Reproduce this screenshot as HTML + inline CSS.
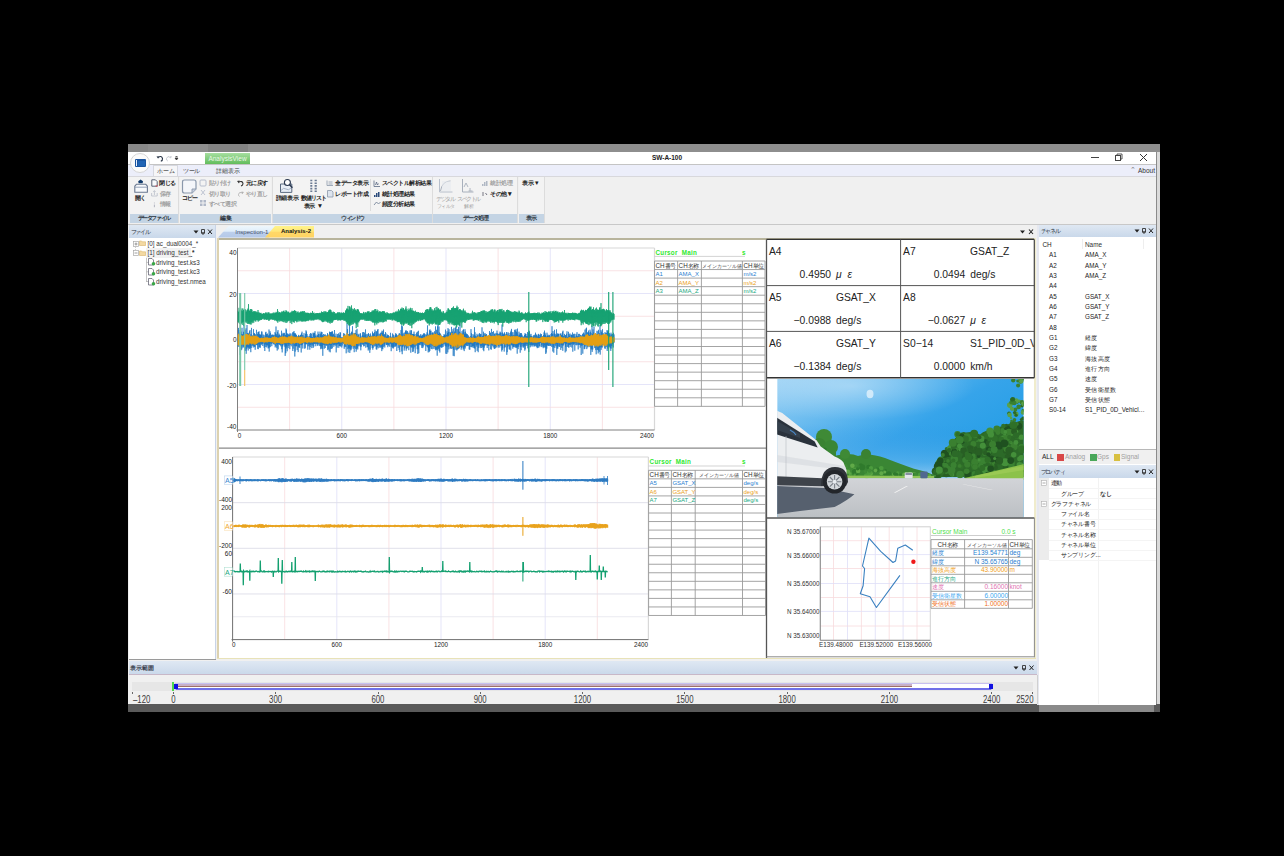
<!DOCTYPE html><html><head><meta charset="utf-8"><style>html,body{margin:0;padding:0;background:#000;}body{width:1284px;height:856px;position:relative;overflow:hidden;font-family:"Liberation Sans", sans-serif;}</style></head><body><div style="position:absolute;left:128px;top:144px;width:1032px;height:8px;background:#8e8e8e"></div><div style="position:absolute;left:208px;top:144px;width:40px;height:7.5px;background:#838383"></div><div style="position:absolute;left:128px;top:144px;width:20px;height:7.5px;background:#888888"></div><div style="position:absolute;left:128px;top:151.5px;width:1028px;height:13px;background:#ffffff"></div><div style="position:absolute;left:128px;top:164px;width:1028px;height:1px;background:#c4c4c4"></div><div style="position:absolute;left:1156.2px;top:151.5px;width:1.1px;height:553px;background:#8a8a8a"></div><div style="position:absolute;left:1157.3px;top:151.5px;width:2.8px;height:553px;background:#dadada"></div><div style="position:absolute;left:128px;top:165px;width:1028px;height:11px;background:#eceefa"></div><div style="position:absolute;left:128px;top:175.5px;width:1028px;height:48.5px;background:#f0f0f0"></div><div style="position:absolute;left:128px;top:175.5px;width:1028px;height:1px;background:#d8d8dc"></div><div style="position:absolute;left:128px;top:223.5px;width:1028px;height:1px;background:#c8c8c8"></div><div style="position:absolute;left:128px;top:224.5px;width:1028px;height:480px;background:#f0f0f0"></div><div style="position:absolute;left:128px;top:704px;width:911px;height:8px;background:#5a5a5a"></div><div style="position:absolute;left:1039px;top:704px;width:115px;height:8px;background:#8a8a8a"></div><div style="position:absolute;left:1154px;top:704px;width:6px;height:8px;background:#5a5a5a"></div><div style="position:absolute;left:130px;top:152.5px;width:20px;height:20px;border-radius:50%;background:#fbfbfb;border:1px solid #d6d6d6;box-sizing:border-box"></div><div style="position:absolute;left:134.7px;top:159px;width:11.5px;height:8px;background:#1a55a0;border-radius:1px"></div><div style="position:absolute;left:136.2px;top:160px;width:1px;height:6px;background:#e8f0ff"></div><div style="position:absolute;left:137.5px;top:160.5px;width:7.5px;height:5px;background:#2064b4"></div><svg style="position:absolute;left:155px;top:154px" width="30" height="8" viewBox="0 0 30 8"><path d="M3 3.5 Q6.5 1 7.5 4.5 Q7.8 6.5 5.8 7.2" stroke="#2a3648" stroke-width="1.1" fill="none"/><path d="M1.5 2.5 L3.8 2.2 L3.2 4.8 Z" fill="#2a3648"/><path d="M15.5 3.5 Q12.5 1 11.5 4.5 Q11.3 6.5 12.8 7" stroke="#c0c4cc" stroke-width="0.9" fill="none"/><path d="M17 2.5 L15 2.3 L15.6 4.6 Z" fill="#c0c4cc"/><path d="M20.5 2.5 h2 M20 4 L23 4 L21.5 6 Z" stroke="#3a3a3a" stroke-width="0.8" fill="#3a3a3a"/></svg><div style="position:absolute;left:205px;top:152.5px;width:45px;height:11.5px;background:linear-gradient(#a6dea0,#62bd5c);color:#e9f7e6;font-size:6.5px;line-height:11.5px;text-align:center;">AnalysisView</div><div style="position:absolute;left:567px;width:200px;top:153.60px;font-size:6.5px;line-height:7.80px;color:#222;white-space:nowrap;text-align:center;font-weight:bold">SW-A-100</div><svg style="position:absolute;left:1088px;top:152px" width="64" height="12" viewBox="0 0 64 12"><path d="M3 5.5 H11" stroke="#444" stroke-width="1"/><rect x="27.5" y="3.5" width="5" height="5" stroke="#444" stroke-width="1" fill="none"/><path d="M29 3.5 V2 H34 V7 H32.5" stroke="#444" stroke-width="0.9" fill="none"/><path d="M52 2 L59 9 M59 2 L52 9" stroke="#333" stroke-width="1"/></svg><div style="position:absolute;left:153px;top:165px;width:25px;height:11px;background:#f6f6f8;border:1px solid #d6d8e0;border-bottom:none;box-sizing:border-box"></div><div style="position:absolute;left:66px;width:200px;top:166.60px;font-size:6.5px;line-height:7.80px;color:#333;white-space:nowrap;text-align:center;"><span style="font-size:6px;letter-spacing:-0.3px;">ホーム</span></div><div style="position:absolute;left:91.5px;width:200px;top:166.60px;font-size:6.5px;line-height:7.80px;color:#333;white-space:nowrap;text-align:center;"><span style="font-size:6px;letter-spacing:-0.6px;">ツール</span></div><div style="position:absolute;left:127.5px;width:200px;top:166.60px;font-size:6.5px;line-height:7.80px;color:#333;white-space:nowrap;text-align:center;"><span style="font-size:6px;letter-spacing:0px;">詳細表示</span></div><div style="position:absolute;left:1130px;top:166.30px;font-size:7px;line-height:8.40px;color:#777;white-space:nowrap;">&#8963;</div><div style="position:absolute;left:1138px;top:166.60px;font-size:6.5px;line-height:7.80px;color:#333;white-space:nowrap;">About</div><div style="position:absolute;left:130px;top:177px;width:47.5px;height:46px;background:#f3f3f3"></div><div style="position:absolute;left:130px;top:213.8px;width:47.5px;height:8.8px;background:#c4d4e4"></div><div style="position:absolute;left:53.75px;width:200px;top:214.30px;font-size:6.5px;line-height:7.80px;color:#2c3440;white-space:nowrap;text-align:center;"><span style="font-size:6px;letter-spacing:-1.4px;font-weight:bold">データファイル</span></div><div style="position:absolute;left:178.0px;top:177px;width:1px;height:46px;background:#dcdcdc"></div><div style="position:absolute;left:180px;top:177px;width:91px;height:46px;background:#f3f3f3"></div><div style="position:absolute;left:180px;top:213.8px;width:91px;height:8.8px;background:#c4d4e4"></div><div style="position:absolute;left:125.5px;width:200px;top:214.30px;font-size:6.5px;line-height:7.80px;color:#2c3440;white-space:nowrap;text-align:center;"><span style="font-size:6px;letter-spacing:-0.5px;font-weight:bold">編集</span></div><div style="position:absolute;left:271.5px;top:177px;width:1px;height:46px;background:#dcdcdc"></div><div style="position:absolute;left:273.4px;top:177px;width:158.40000000000003px;height:46px;background:#f3f3f3"></div><div style="position:absolute;left:273.4px;top:213.8px;width:158.40000000000003px;height:8.8px;background:#c4d4e4"></div><div style="position:absolute;left:252.60000000000002px;width:200px;top:214.30px;font-size:6.5px;line-height:7.80px;color:#2c3440;white-space:nowrap;text-align:center;"><span style="font-size:6px;letter-spacing:-1.5px;font-weight:bold">ウィンドウ</span></div><div style="position:absolute;left:432.3px;top:177px;width:1px;height:46px;background:#dcdcdc"></div><div style="position:absolute;left:433.4px;top:177px;width:83.39999999999998px;height:46px;background:#f3f3f3"></div><div style="position:absolute;left:433.4px;top:213.8px;width:83.39999999999998px;height:8.8px;background:#c4d4e4"></div><div style="position:absolute;left:375.09999999999997px;width:200px;top:214.30px;font-size:6.5px;line-height:7.80px;color:#2c3440;white-space:nowrap;text-align:center;"><span style="font-size:6px;letter-spacing:-1.0px;font-weight:bold">データ処理</span></div><div style="position:absolute;left:517.3px;top:177px;width:1px;height:46px;background:#dcdcdc"></div><div style="position:absolute;left:519px;top:177px;width:24.5px;height:46px;background:#f3f3f3"></div><div style="position:absolute;left:519px;top:213.8px;width:24.5px;height:8.8px;background:#c4d4e4"></div><div style="position:absolute;left:431.25px;width:200px;top:214.30px;font-size:6.5px;line-height:7.80px;color:#2c3440;white-space:nowrap;text-align:center;"><span style="font-size:6px;letter-spacing:-0.5px;font-weight:bold">表示</span></div><div style="position:absolute;left:544.0px;top:177px;width:1px;height:46px;background:#dcdcdc"></div><div style="position:absolute;left:370px;top:179px;width:0.8px;height:32px;background:#dcdcdc"></div><svg style="position:absolute;left:128px;top:176px" width="72" height="36" viewBox="0 0 72 36"><path d="M10.2 5.2 L12.6 3.4 L15 5.2 L14.6 7.2 H10.6 Z" fill="#123a6a"/><path d="M6.8 10.2 L8.6 8.2 H17.6 L19.4 10.2 V16.3 H6.8 Z" fill="#f8fafc" stroke="#6a7890" stroke-width="1.1" stroke-linejoin="round"/><path d="M6.8 11.2 H19.4" stroke="#8a98b0" stroke-width="0.9"/><path d="M23.8 3.8 h3.6 l1.8 1.8 v4.6 h-5.4z" fill="#fafbfd" stroke="#4a5468" stroke-width="0.9"/><path d="M27.8 9.2 l1.6 1.6 M29.4 9.2 l-1.6 1.6" stroke="#e04848" stroke-width="0.7"/><path d="M23.6 17 v3 h5.6 v-3 M26.4 19 v-4.2 M25.2 15.8 l1.2 -1.2 l1.2 1.2" stroke="#b8bcc8" stroke-width="0.8" fill="none"/><path d="M26.4 28.6 v2.6 M26.4 26.6 v0.8" stroke="#a8acb8" stroke-width="0.9"/><path d="M56.5 4 h9.5 q2 0 2 2 v7 l-4 4 h-7.5 q-2 0 -2 -2 v-9 q0 -2 2 -2z" fill="#f4f6fa" stroke="#8a98ac" stroke-width="1.2"/><path d="M68 13 l-4 0 v4" fill="#c8d0e0" stroke="#8a98ac" stroke-width="0.9"/></svg><div style="position:absolute;left:40.5px;width:200px;top:194.30px;font-size:6.5px;line-height:7.80px;color:#202020;white-space:nowrap;text-align:center;"><span style="font-size:6px;letter-spacing:-0.8px;font-weight:bold">開く</span></div><div style="position:absolute;left:159.4px;top:179.30px;font-size:6.5px;line-height:7.80px;color:#202020;white-space:nowrap;"><span style="font-size:6px;letter-spacing:-0.8px;font-weight:bold">閉じる</span></div><div style="position:absolute;left:159.5px;top:189.70px;font-size:6.5px;line-height:7.80px;color:#a0a0a0;white-space:nowrap;"><span style="font-size:6px;letter-spacing:-0.5px;font-weight:bold">保存</span></div><div style="position:absolute;left:159.5px;top:200.10px;font-size:6.5px;line-height:7.80px;color:#a0a0a0;white-space:nowrap;"><span style="font-size:6px;letter-spacing:-0.5px;font-weight:bold">情報</span></div><div style="position:absolute;left:89.5px;width:200px;top:194.30px;font-size:6.5px;line-height:7.80px;color:#202020;white-space:nowrap;text-align:center;"><span style="font-size:6px;letter-spacing:-1.3px;font-weight:bold">コピー</span></div><svg style="position:absolute;left:199px;top:179px" width="8" height="30" viewBox="0 0 8 30"><rect x="1" y="1" width="6" height="6" rx="1" stroke="#b0b8c8" stroke-width="0.9" fill="none"/><path d="M2 11 l4 5 M6 11 l-4 5" stroke="#b0b8c8" stroke-width="0.8"/><path d="M1 21 h2.5 v2.5 h-2.5z M4.5 21 h2.5 v2.5 h-2.5z M1 24.5 h2.5 v2.5 h-2.5z M4.5 24.5 h2.5 v2.5 h-2.5z" fill="#b0b8c8"/></svg><div style="position:absolute;left:208.5px;top:179.30px;font-size:6.5px;line-height:7.80px;color:#a0a0a0;white-space:nowrap;"><span style="font-size:6px;letter-spacing:-0.5px;font-weight:bold">貼り付け</span></div><div style="position:absolute;left:208.5px;top:189.70px;font-size:6.5px;line-height:7.80px;color:#a0a0a0;white-space:nowrap;"><span style="font-size:6px;letter-spacing:-0.5px;font-weight:bold">切り取り</span></div><div style="position:absolute;left:208.5px;top:200.10px;font-size:6.5px;line-height:7.80px;color:#a0a0a0;white-space:nowrap;"><span style="font-size:6px;letter-spacing:-0.5px;font-weight:bold">すべて選択</span></div><svg style="position:absolute;left:236px;top:179px" width="8" height="20" viewBox="0 0 8 20"><path d="M2.5 3 Q6.5 1.5 7 4.5 Q7 6.5 5 7" stroke="#333" stroke-width="1.1" fill="none"/><path d="M1 2 L3.6 1.6 L3 4.4 Z" fill="#333"/><path d="M7 14 Q3 12.5 2.5 15.5 Q2.5 17 3.5 17.5" stroke="#b0b0b0" stroke-width="0.9" fill="none"/><path d="M8 13 L5.5 12.6 L6 15.2 Z" fill="#b0b0b0"/></svg><div style="position:absolute;left:245.5px;top:179.30px;font-size:6.5px;line-height:7.80px;color:#202020;white-space:nowrap;"><span style="font-size:6px;letter-spacing:-0.5px;font-weight:bold">元に戻す</span></div><div style="position:absolute;left:245.5px;top:189.70px;font-size:6.5px;line-height:7.80px;color:#a0a0a0;white-space:nowrap;"><span style="font-size:6px;letter-spacing:-0.5px;font-weight:bold">やり直し</span></div><svg style="position:absolute;left:270px;top:176px" width="70" height="36" viewBox="0 0 70 36"><path d="M10.5 8 h11.3 v8.4 h-11.3z" fill="#e8eef6" stroke="#5a6a80" stroke-width="1"/><path d="M11 14.5 q2.5 -3.5 5 -1.5 t5 -1" stroke="#8a9ab0" stroke-width="0.7" fill="none"/><circle cx="17.4" cy="6.5" r="3" fill="#ffffff" stroke="#2a3850" stroke-width="1.1"/><path d="M19.6 8.7 l2.8 3" stroke="#2a3850" stroke-width="1.5"/><path d="M40.3 4.5 h2 M40.3 7.2 h2 M40.3 9.9 h2 M40.3 12.6 h2 M40.3 15.3 h2 M44.6 4.5 h2.2 M44.6 7.2 h2.2 M44.6 9.9 h2.2 M44.6 12.6 h2.2 M44.6 15.3 h2.2" stroke="#6a7a92" stroke-width="1.6"/></svg><div style="position:absolute;left:187px;width:200px;top:194.30px;font-size:6.5px;line-height:7.80px;color:#202020;white-space:nowrap;text-align:center;"><span style="font-size:6px;letter-spacing:-0.3px;font-weight:bold">詳細表示</span></div><div style="position:absolute;left:213.7px;width:200px;top:194.30px;font-size:6.5px;line-height:7.80px;color:#202020;white-space:nowrap;text-align:center;"><span style="font-size:6px;letter-spacing:-1.0px;font-weight:bold">数値リスト</span></div><div style="position:absolute;left:213.5px;width:200px;top:201.80px;font-size:6.5px;line-height:7.80px;color:#202020;white-space:nowrap;text-align:center;"><span style="font-size:6px;letter-spacing:-0.5px;font-weight:bold">表示</span> &#9660;</div><svg style="position:absolute;left:326px;top:180px" width="8" height="18" viewBox="0 0 8 18"><path d="M1 0.5 v5 h6 M2.5 2 h4 M2.5 4 h4" stroke="#8a98aa" stroke-width="0.8" fill="none"/><path d="M1.5 10.5 h4 l1.5 1.5 v5 h-5.5z" fill="#dde4ee" stroke="#8a98aa" stroke-width="0.8"/></svg><div style="position:absolute;left:335px;top:179.40px;font-size:6.5px;line-height:7.80px;color:#202020;white-space:nowrap;"><span style="font-size:6px;letter-spacing:-0.5px;font-weight:bold">全データ表示</span></div><div style="position:absolute;left:335px;top:189.90px;font-size:6.5px;line-height:7.80px;color:#202020;white-space:nowrap;"><span style="font-size:6px;letter-spacing:-0.5px;font-weight:bold">レポート作成</span></div><svg style="position:absolute;left:373px;top:180px" width="8" height="28" viewBox="0 0 8 28"><path d="M1 0.5 v6 h6 M2.5 5 l1 -3 l1 3 l1 -1.5" stroke="#5a6a84" stroke-width="0.8" fill="none"/><path d="M1 17 h1.5 v-2 h-1.5z M3 17 h1.5 v-4 h-1.5z M5 17 h1.5 v-5 h-1.5z" fill="#2a4a7a"/><path d="M1 25 l2.5 -3 l2 2 l2 -2" stroke="#6a7a90" stroke-width="0.8" fill="none"/></svg><div style="position:absolute;left:381.5px;top:179.40px;font-size:6.5px;line-height:7.80px;color:#202020;white-space:nowrap;"><span style="font-size:6px;letter-spacing:-0.5px;font-weight:bold">スペクトル解析結果</span></div><div style="position:absolute;left:381.5px;top:189.90px;font-size:6.5px;line-height:7.80px;color:#202020;white-space:nowrap;"><span style="font-size:6px;letter-spacing:-0.5px;font-weight:bold">統計処理結果</span></div><div style="position:absolute;left:381.5px;top:200.30px;font-size:6.5px;line-height:7.80px;color:#202020;white-space:nowrap;"><span style="font-size:6px;letter-spacing:-0.5px;font-weight:bold">頻度分析結果</span></div><svg style="position:absolute;left:438px;top:178px" width="16" height="15" viewBox="0 0 16 15"><path d="M1.5 1 v13 h13" stroke="#b8c0cc" stroke-width="1" fill="none"/><path d="M2.5 13 q1.5 -10 10 -10" stroke="#a8b0bc" stroke-width="1" fill="none"/><rect x="4" y="3" width="9" height="10" fill="#e8ebf0" opacity="0.6"/></svg><div style="position:absolute;left:345.5px;width:200px;top:194.80px;font-size:6.5px;line-height:7.80px;color:#a0a0a0;white-space:nowrap;text-align:center;"><span style="font-size:6px;letter-spacing:-1.3px;">デジタル</span></div><div style="position:absolute;left:345.5px;width:200px;top:202.30px;font-size:6.5px;line-height:7.80px;color:#a0a0a0;white-space:nowrap;text-align:center;"><span style="font-size:5px;letter-spacing:-0.5px;">フィルタ</span></div><svg style="position:absolute;left:461px;top:178px" width="14" height="15" viewBox="0 0 14 15"><path d="M1.5 1 v13 h11" stroke="#a8b0bc" stroke-width="1" fill="none"/><path d="M3 9 l2 -4 l2 4 M7.5 13 h4 M9 10 v3" stroke="#a8b0bc" stroke-width="0.9" fill="none"/></svg><div style="position:absolute;left:368.7px;width:200px;top:194.80px;font-size:6.5px;line-height:7.80px;color:#a0a0a0;white-space:nowrap;text-align:center;"><span style="font-size:6px;letter-spacing:-1.5px;">スペクトル</span></div><div style="position:absolute;left:368.7px;width:200px;top:202.30px;font-size:6.5px;line-height:7.80px;color:#a0a0a0;white-space:nowrap;text-align:center;"><span style="font-size:5px;letter-spacing:0px;">解析</span></div><svg style="position:absolute;left:481px;top:180px" width="8" height="18" viewBox="0 0 8 18"><path d="M1 6 h1.5 v-2 h-1.5z M3 6 h1.5 v-4 h-1.5z M5 6 h1.5 v-5 h-1.5z" fill="#b0b8c4"/><path d="M1 13 h2 M1 15 h2 M4.5 13 l1.5 2" stroke="#556" stroke-width="0.8"/></svg><div style="position:absolute;left:490px;top:179.40px;font-size:6.5px;line-height:7.80px;color:#a0a0a0;white-space:nowrap;"><span style="font-size:6px;letter-spacing:-0.5px;font-weight:bold">統計処理</span></div><div style="position:absolute;left:490px;top:189.90px;font-size:6.5px;line-height:7.80px;color:#222;white-space:nowrap;font-weight:bold"><span style="font-size:6px;letter-spacing:-0.5px;font-weight:bold">その他</span> &#9662;</div><div style="position:absolute;left:522px;top:179.40px;font-size:6.5px;line-height:7.80px;color:#202020;white-space:nowrap;"><span style="font-size:6px;letter-spacing:-0.5px;font-weight:bold">表示</span> &#9662;</div><div style="position:absolute;left:128.5px;top:224.5px;width:86.5px;height:434.5px;background:#ffffff"></div><div style="position:absolute;left:128.5px;top:225px;width:86.0px;height:13px;background:linear-gradient(#dfe8f3,#c9d8ea)"></div><div style="position:absolute;left:130.5px;top:227.60px;font-size:6.5px;line-height:7.80px;color:#2a3240;white-space:nowrap;"><span style="font-size:6px;letter-spacing:-1.2px;">ファイル</span></div><svg style="position:absolute;left:191.5px;top:227.5px" width="22" height="8" viewBox="0 0 22 8"><path d="M1.5 2.5 h5 l-2.5 3z" fill="#222"/><path d="M9.5 1.5 h3 v3.5 h-3z M9 5 h4 M11 5 v2" stroke="#333" stroke-width="0.9" fill="none"/><path d="M16 1.5 l4 4.5 M20 1.5 l-4 4.5" stroke="#222" stroke-width="1"/></svg><div style="position:absolute;left:214.5px;top:224.5px;width:1px;height:435px;background:#c8d4e8"></div><div style="position:absolute;left:128.5px;top:658.8px;width:87px;height:1px;background:#9a9a9a"></div><svg style="position:absolute;left:128px;top:238px" width="30" height="50" viewBox="0 0 30 50"><path d="M7.5 9 v5" stroke="#b0b0b0" stroke-width="0.6" stroke-dasharray="1 1"/><path d="M18.5 18 v26 M18.5 24.4 h3 M18.5 33.8 h3 M18.5 43.5 h3" stroke="#a0a0a0" stroke-width="0.6"/></svg><svg style="position:absolute;left:132.5px;top:240.7px" width="6" height="6" viewBox="0 0 6 6"><rect x="0.5" y="0.5" width="5" height="5" fill="#fff" stroke="#a8a8a8" stroke-width="0.7"/><path d="M1.5 3 h3" stroke="#777" stroke-width="0.7"/><path d="M3 1.5 v3" stroke="#777" stroke-width="0.7"/></svg><svg style="position:absolute;left:139px;top:240.3px" width="7" height="6" viewBox="0 0 7 6"><path d="M0.5 1 h2 l0.8 0.8 h3.2 v3.7 h-6z" fill="#f3d9a2" stroke="#d9b46a" stroke-width="0.6"/></svg><div style="position:absolute;left:147.5px;top:239.92px;font-size:6.3px;line-height:7.56px;color:#333;white-space:nowrap;">[0] ac_dual0004_*</div><svg style="position:absolute;left:132.5px;top:250px" width="6" height="6" viewBox="0 0 6 6"><rect x="0.5" y="0.5" width="5" height="5" fill="#fff" stroke="#a8a8a8" stroke-width="0.7"/><path d="M1.5 3 h3" stroke="#777" stroke-width="0.7"/></svg><svg style="position:absolute;left:139px;top:249.8px" width="7" height="6" viewBox="0 0 7 6"><path d="M0.5 1 h2 l0.8 0.8 h3.2 v3.7 h-6z" fill="#f3d9a2" stroke="#d9b46a" stroke-width="0.6"/></svg><div style="position:absolute;left:147.5px;top:249.22px;font-size:6.3px;line-height:7.56px;color:#333;white-space:nowrap;">[1] driving_test_*</div><div style="position:absolute;left:146px;top:248.3px;width:45px;height:9.5px;background:#f2f2f2"></div><div style="position:absolute;left:147.5px;top:249.22px;font-size:6.3px;line-height:7.56px;color:#333;white-space:nowrap;">[1] driving_test_*</div><svg style="position:absolute;left:147.5px;top:258.4px" width="8" height="8" viewBox="0 0 8 8"><path d="M0.5 0.5 h3.5 l1.5 1.5 v5 h-5z" fill="#fff" stroke="#556" stroke-width="0.7"/><circle cx="5.5" cy="5.8" r="1.8" fill="#3aa648"/></svg><div style="position:absolute;left:156px;top:258.62px;font-size:6.3px;line-height:7.56px;color:#333;white-space:nowrap;">driving_test.ks3</div><svg style="position:absolute;left:147.5px;top:267.95px" width="8" height="8" viewBox="0 0 8 8"><path d="M0.5 0.5 h3.5 l1.5 1.5 v5 h-5z" fill="#fff" stroke="#556" stroke-width="0.7"/><circle cx="5.5" cy="5.8" r="1.8" fill="#3aa648"/></svg><div style="position:absolute;left:156px;top:268.17px;font-size:6.3px;line-height:7.56px;color:#333;white-space:nowrap;">driving_test.kc3</div><svg style="position:absolute;left:147.5px;top:277.5px" width="8" height="8" viewBox="0 0 8 8"><path d="M0.5 0.5 h3.5 l1.5 1.5 v5 h-5z" fill="#fff" stroke="#556" stroke-width="0.7"/><circle cx="5.5" cy="5.8" r="1.8" fill="#3aa648"/></svg><div style="position:absolute;left:156px;top:277.72px;font-size:6.3px;line-height:7.56px;color:#333;white-space:nowrap;">driving_test.nmea</div><div style="position:absolute;left:216px;top:224.5px;width:821px;height:13px;background:#f0f0f0"></div><svg style="position:absolute;left:216px;top:225px" width="100" height="14" viewBox="0 0 100 14"><defs><linearGradient id="tb" x1="0" y1="0" x2="0" y2="1"><stop offset="0" stop-color="#eef6fc"/><stop offset="0.45" stop-color="#e0eefa"/><stop offset="0.55" stop-color="#bccfec"/><stop offset="1" stop-color="#b4c8e8"/></linearGradient><linearGradient id="ty" x1="0" y1="0" x2="0" y2="1"><stop offset="0" stop-color="#fff48a"/><stop offset="0.45" stop-color="#ffe77a"/><stop offset="0.55" stop-color="#ffd868"/><stop offset="1" stop-color="#ffd462"/></linearGradient></defs><path d="M2 12.5 L12.5 1 H66 L53 12.5 Z" fill="url(#tb)"/><path d="M49 12.5 L59 1 H98 V12.5 Z" fill="url(#ty)"/></svg><div style="position:absolute;left:235.2px;top:227.84px;font-size:6.1px;line-height:7.32px;color:#4a5470;white-space:nowrap;">Inspection-1</div><div style="position:absolute;left:281px;top:227.90px;font-size:6.0px;line-height:7.20px;color:#111;white-space:nowrap;font-weight:bold">Analysis-2</div><svg style="position:absolute;left:1019px;top:227.5px" width="16" height="8" viewBox="0 0 16 8"><path d="M1 2.5 h5 l-2.5 3z" fill="#222"/><path d="M10 1.5 l4 4.5 M14 1.5 l-4 4.5" stroke="#222" stroke-width="1.1"/></svg><div style="position:absolute;left:216.5px;top:237.5px;width:819px;height:2px;background:#b8b49c"></div><div style="position:absolute;left:216.5px;top:237.5px;width:2.5px;height:421.5px;background:#dcd2b0"></div><div style="position:absolute;left:1033.5px;top:237.5px;width:2px;height:421.5px;background:#f0eccc"></div><div style="position:absolute;left:216.5px;top:657.5px;width:819px;height:1.8px;background:#e8e2b8"></div><div style="position:absolute;left:219px;top:239.5px;width:814.5px;height:418px;background:#ffffff"></div><div style="position:absolute;left:1037px;top:224.5px;width:119px;height:480px;background:#ffffff"></div><div style="position:absolute;left:1037px;top:224.5px;width:1.5px;height:480px;background:#e6e8f0"></div><div style="position:absolute;left:1038.5px;top:225px;width:117.5px;height:12px;background:linear-gradient(#dfe8f3,#c9d8ea)"></div><div style="position:absolute;left:1040.5px;top:227.10px;font-size:6.5px;line-height:7.80px;color:#2a3240;white-space:nowrap;"><span style="font-size:6px;letter-spacing:-1.2px;">チャネル</span></div><svg style="position:absolute;left:1133px;top:227.0px" width="22" height="8" viewBox="0 0 22 8"><path d="M1.5 2.5 h5 l-2.5 3z" fill="#222"/><path d="M9.5 1.5 h3 v3.5 h-3z M9 5 h4 M11 5 v2" stroke="#333" stroke-width="0.9" fill="none"/><path d="M16 1.5 l4 4.5 M20 1.5 l-4 4.5" stroke="#222" stroke-width="1"/></svg><div style="position:absolute;left:1042.5px;top:240.66px;font-size:6.4px;line-height:7.68px;color:#222;white-space:nowrap;">CH</div><div style="position:absolute;left:1085px;top:240.66px;font-size:6.4px;line-height:7.68px;color:#333;white-space:nowrap;">Name</div><div style="position:absolute;left:1082.3px;top:239px;width:0.6px;height:10px;background:#eeeeee"></div><div style="position:absolute;left:1143px;top:239px;width:0.6px;height:10px;background:#eeeeee"></div><div style="position:absolute;left:1049px;top:251.22px;font-size:6.3px;line-height:7.56px;color:#222;white-space:nowrap;">A1</div><div style="position:absolute;left:1085px;top:251.22px;font-size:6.3px;line-height:7.56px;color:#222;white-space:nowrap;">AMA_X</div><div style="position:absolute;left:1049px;top:261.55px;font-size:6.3px;line-height:7.56px;color:#222;white-space:nowrap;">A2</div><div style="position:absolute;left:1085px;top:261.55px;font-size:6.3px;line-height:7.56px;color:#222;white-space:nowrap;">AMA_Y</div><div style="position:absolute;left:1049px;top:271.88px;font-size:6.3px;line-height:7.56px;color:#222;white-space:nowrap;">A3</div><div style="position:absolute;left:1085px;top:271.88px;font-size:6.3px;line-height:7.56px;color:#222;white-space:nowrap;">AMA_Z</div><div style="position:absolute;left:1049px;top:282.21px;font-size:6.3px;line-height:7.56px;color:#222;white-space:nowrap;">A4</div><div style="position:absolute;left:1085px;top:282.21px;font-size:6.3px;line-height:7.56px;color:#222;white-space:nowrap;"></div><div style="position:absolute;left:1049px;top:292.54px;font-size:6.3px;line-height:7.56px;color:#222;white-space:nowrap;">A5</div><div style="position:absolute;left:1085px;top:292.54px;font-size:6.3px;line-height:7.56px;color:#222;white-space:nowrap;">GSAT_X</div><div style="position:absolute;left:1049px;top:302.87px;font-size:6.3px;line-height:7.56px;color:#222;white-space:nowrap;">A6</div><div style="position:absolute;left:1085px;top:302.87px;font-size:6.3px;line-height:7.56px;color:#222;white-space:nowrap;">GSAT_Y</div><div style="position:absolute;left:1049px;top:313.20px;font-size:6.3px;line-height:7.56px;color:#222;white-space:nowrap;">A7</div><div style="position:absolute;left:1085px;top:313.20px;font-size:6.3px;line-height:7.56px;color:#222;white-space:nowrap;">GSAT_Z</div><div style="position:absolute;left:1049px;top:323.53px;font-size:6.3px;line-height:7.56px;color:#222;white-space:nowrap;">A8</div><div style="position:absolute;left:1085px;top:323.53px;font-size:6.3px;line-height:7.56px;color:#222;white-space:nowrap;"></div><div style="position:absolute;left:1049px;top:333.86px;font-size:6.3px;line-height:7.56px;color:#222;white-space:nowrap;">G1</div><div style="position:absolute;left:1085px;top:333.86px;font-size:6.3px;line-height:7.56px;color:#222;white-space:nowrap;"><span style="font-size:6px;letter-spacing:0.3px;">経度</span></div><div style="position:absolute;left:1049px;top:344.19px;font-size:6.3px;line-height:7.56px;color:#222;white-space:nowrap;">G2</div><div style="position:absolute;left:1085px;top:344.19px;font-size:6.3px;line-height:7.56px;color:#222;white-space:nowrap;"><span style="font-size:6px;letter-spacing:0.3px;">緯度</span></div><div style="position:absolute;left:1049px;top:354.52px;font-size:6.3px;line-height:7.56px;color:#222;white-space:nowrap;">G3</div><div style="position:absolute;left:1085px;top:354.52px;font-size:6.3px;line-height:7.56px;color:#222;white-space:nowrap;"><span style="font-size:6px;letter-spacing:0.3px;">海抜高度</span></div><div style="position:absolute;left:1049px;top:364.85px;font-size:6.3px;line-height:7.56px;color:#222;white-space:nowrap;">G4</div><div style="position:absolute;left:1085px;top:364.85px;font-size:6.3px;line-height:7.56px;color:#222;white-space:nowrap;"><span style="font-size:6px;letter-spacing:0.3px;">進行方向</span></div><div style="position:absolute;left:1049px;top:375.18px;font-size:6.3px;line-height:7.56px;color:#222;white-space:nowrap;">G5</div><div style="position:absolute;left:1085px;top:375.18px;font-size:6.3px;line-height:7.56px;color:#222;white-space:nowrap;"><span style="font-size:6px;letter-spacing:0.3px;">速度</span></div><div style="position:absolute;left:1049px;top:385.51px;font-size:6.3px;line-height:7.56px;color:#222;white-space:nowrap;">G6</div><div style="position:absolute;left:1085px;top:385.51px;font-size:6.3px;line-height:7.56px;color:#222;white-space:nowrap;"><span style="font-size:6px;letter-spacing:0.3px;">受信衛星数</span></div><div style="position:absolute;left:1049px;top:395.84px;font-size:6.3px;line-height:7.56px;color:#222;white-space:nowrap;">G7</div><div style="position:absolute;left:1085px;top:395.84px;font-size:6.3px;line-height:7.56px;color:#222;white-space:nowrap;"><span style="font-size:6px;letter-spacing:0.3px;">受信状態</span></div><div style="position:absolute;left:1049px;top:406.17px;font-size:6.3px;line-height:7.56px;color:#222;white-space:nowrap;">S0-14</div><div style="position:absolute;left:1085px;top:406.17px;font-size:6.3px;line-height:7.56px;color:#222;white-space:nowrap;">S1_PID_0D_Vehicl…</div><div style="position:absolute;left:1038.5px;top:449.3px;width:117.5px;height:1px;background:#b8b8b8"></div><div style="position:absolute;left:1038.5px;top:450.3px;width:117.5px;height:14px;background:#f0f0f0"></div><div style="position:absolute;left:1042px;top:453.10px;font-size:6.5px;line-height:7.80px;color:#222;white-space:nowrap;">ALL</div><div style="position:absolute;left:1057px;top:453.5px;width:7px;height:7px;background:#d84848"></div><div style="position:absolute;left:1065px;top:453.10px;font-size:6.5px;line-height:7.80px;color:#a0a0a0;white-space:nowrap;">Analog</div><div style="position:absolute;left:1090px;top:453.5px;width:6.5px;height:7px;background:#4aa85a"></div><div style="position:absolute;left:1097px;top:453.10px;font-size:6.5px;line-height:7.80px;color:#a0a0a0;white-space:nowrap;">Gps</div><div style="position:absolute;left:1113.5px;top:453.5px;width:6.5px;height:7px;background:#d8c040"></div><div style="position:absolute;left:1121px;top:453.10px;font-size:6.5px;line-height:7.80px;color:#a0a0a0;white-space:nowrap;">Signal</div><div style="position:absolute;left:1038.5px;top:465px;width:117.5px;height:13px;background:linear-gradient(#dfe8f3,#c9d8ea)"></div><div style="position:absolute;left:1040.5px;top:467.60px;font-size:6.5px;line-height:7.80px;color:#2a3240;white-space:nowrap;"><span style="font-size:6px;letter-spacing:-1.2px;">プロパティ</span></div><svg style="position:absolute;left:1133px;top:467.5px" width="22" height="8" viewBox="0 0 22 8"><path d="M1.5 2.5 h5 l-2.5 3z" fill="#222"/><path d="M9.5 1.5 h3 v3.5 h-3z M9 5 h4 M11 5 v2" stroke="#333" stroke-width="0.9" fill="none"/><path d="M16 1.5 l4 4.5 M20 1.5 l-4 4.5" stroke="#222" stroke-width="1"/></svg><div style="position:absolute;left:1039.3px;top:478px;width:9.4px;height:82px;background:#ececec"></div><div style="position:absolute;left:1098px;top:478px;width:0.6px;height:226px;background:#f2f2f2"></div><div style="position:absolute;left:1048.7px;top:488.2px;width:107px;height:0.6px;background:#f4f4f4"></div><svg style="position:absolute;left:1041px;top:480.2px" width="6" height="6" viewBox="0 0 6 6"><rect x="0.5" y="0.5" width="5" height="5" fill="#fff" stroke="#b0b0b0" stroke-width="0.6"/><path d="M1.5 3 h3" stroke="#888" stroke-width="0.7"/></svg><div style="position:absolute;left:1050.5px;top:479.42px;font-size:6.3px;line-height:7.56px;color:#222;white-space:nowrap;"><span style="font-size:6px;letter-spacing:-0.2px;">連動</span></div><div style="position:absolute;left:1048.7px;top:498.46px;width:107px;height:0.6px;background:#f4f4f4"></div><div style="position:absolute;left:1060.8px;top:489.68px;font-size:6.3px;line-height:7.56px;color:#222;white-space:nowrap;"><span style="font-size:6px;letter-spacing:-0.2px;">グループ</span></div><div style="position:absolute;left:1100px;top:489.56px;font-size:6.5px;line-height:7.80px;color:#333;white-space:nowrap;"><span style="font-size:6px;letter-spacing:-0.5px;font-weight:bold">なし</span></div><div style="position:absolute;left:1048.7px;top:508.71999999999997px;width:107px;height:0.6px;background:#f4f4f4"></div><svg style="position:absolute;left:1041px;top:500.71999999999997px" width="6" height="6" viewBox="0 0 6 6"><rect x="0.5" y="0.5" width="5" height="5" fill="#fff" stroke="#b0b0b0" stroke-width="0.6"/><path d="M1.5 3 h3" stroke="#888" stroke-width="0.7"/></svg><div style="position:absolute;left:1050.5px;top:499.94px;font-size:6.3px;line-height:7.56px;color:#222;white-space:nowrap;"><span style="font-size:6px;letter-spacing:-0.2px;">グラフチャネル</span></div><div style="position:absolute;left:1048.7px;top:518.98px;width:107px;height:0.6px;background:#f4f4f4"></div><div style="position:absolute;left:1060.8px;top:510.20px;font-size:6.3px;line-height:7.56px;color:#222;white-space:nowrap;"><span style="font-size:6px;letter-spacing:-0.2px;">ファイル名</span></div><div style="position:absolute;left:1048.7px;top:529.24px;width:107px;height:0.6px;background:#f4f4f4"></div><div style="position:absolute;left:1060.8px;top:520.46px;font-size:6.3px;line-height:7.56px;color:#222;white-space:nowrap;"><span style="font-size:6px;letter-spacing:-0.2px;">チャネル番号</span></div><div style="position:absolute;left:1048.7px;top:539.5px;width:107px;height:0.6px;background:#f4f4f4"></div><div style="position:absolute;left:1060.8px;top:530.72px;font-size:6.3px;line-height:7.56px;color:#222;white-space:nowrap;"><span style="font-size:6px;letter-spacing:-0.2px;">チャネル名称</span></div><div style="position:absolute;left:1048.7px;top:549.76px;width:107px;height:0.6px;background:#f4f4f4"></div><div style="position:absolute;left:1060.8px;top:540.98px;font-size:6.3px;line-height:7.56px;color:#222;white-space:nowrap;"><span style="font-size:6px;letter-spacing:-0.2px;">チャネル単位</span></div><div style="position:absolute;left:1048.7px;top:560.02px;width:107px;height:0.6px;background:#f4f4f4"></div><div style="position:absolute;left:1060.8px;top:551.24px;font-size:6.3px;line-height:7.56px;color:#222;white-space:nowrap;"><span style="font-size:6px;letter-spacing:-0.2px;">サンプリング</span>...</div><div style="position:absolute;left:128.5px;top:659.5px;width:908.5px;height:44.5px;background:#f0f0f0"></div><div style="position:absolute;left:128.5px;top:660.5px;width:908.5px;height:14px;background:linear-gradient(#dfe8f3,#c9d8ea)"></div><div style="position:absolute;left:130px;top:663.60px;font-size:6.5px;line-height:7.80px;color:#3a4250;white-space:nowrap;"><span style="font-size:6px;letter-spacing:0px;font-weight:bold">表示範囲</span></div><svg style="position:absolute;left:1012px;top:663.5px" width="24" height="8" viewBox="0 0 24 8"><path d="M1.5 2.5 h5 l-2.5 3z" fill="#222"/><path d="M10.5 1.5 h3 v3.5 h-3z M10 5 h4 M12 5 v2" stroke="#333" stroke-width="0.9" fill="none"/><path d="M17.5 1.5 l4 4.5 M21.5 1.5 l-4 4.5" stroke="#222" stroke-width="1"/></svg><div style="position:absolute;left:128.5px;top:674.3px;width:908.5px;height:0.8px;background:#c8b8c8"></div><div style="position:absolute;left:1036.5px;top:674.5px;width:1px;height:29.5px;background:#d0d0d0"></div><div style="position:absolute;left:131.7px;top:681.5px;width:901px;height:9.5px;background:#e6e6e6"></div><div style="position:absolute;left:175px;top:682.8px;width:817px;height:7px;background:#c8c0f0"></div><div style="position:absolute;left:176px;top:684px;width:814px;height:4.4px;background:#ffffff"></div><div style="position:absolute;left:176px;top:685.6px;width:736px;height:1.2px;background:#a07068"></div><div style="position:absolute;left:176px;top:684.3px;width:736px;height:1.3px;background:#c8b0c8"></div><div style="position:absolute;left:176px;top:688.4px;width:815px;height:1.2px;background:#7070e8"></div><div style="position:absolute;left:172.3px;top:681.5px;width:2px;height:9.5px;background:#50d850"></div><div style="position:absolute;left:173.5px;top:683.5px;width:4px;height:5px;background:#1010e0"></div><div style="position:absolute;left:988.5px;top:683.5px;width:4px;height:5px;background:#1010e0"></div><div style="position:absolute;left:131.98px;top:691.5px;width:0.9px;height:2.5px;background:#666"></div><div style="position:absolute;left:172.9px;top:691.5px;width:0.9px;height:2.5px;background:#666"></div><div style="position:absolute;left:275.20000000000005px;top:691.5px;width:0.9px;height:2.5px;background:#666"></div><div style="position:absolute;left:377.50000000000006px;top:691.5px;width:0.9px;height:2.5px;background:#666"></div><div style="position:absolute;left:479.80000000000007px;top:691.5px;width:0.9px;height:2.5px;background:#666"></div><div style="position:absolute;left:582.1px;top:691.5px;width:0.9px;height:2.5px;background:#666"></div><div style="position:absolute;left:684.4000000000001px;top:691.5px;width:0.9px;height:2.5px;background:#666"></div><div style="position:absolute;left:786.7000000000002px;top:691.5px;width:0.9px;height:2.5px;background:#666"></div><div style="position:absolute;left:889.0000000000001px;top:691.5px;width:0.9px;height:2.5px;background:#666"></div><div style="position:absolute;left:991.3000000000001px;top:691.5px;width:0.9px;height:2.5px;background:#666"></div><div style="position:absolute;left:1032.22px;top:691.5px;width:0.9px;height:2.5px;background:#666"></div><svg style="position:absolute;left:0;top:0" width="1284" height="856" viewBox="0 0 1284 856" font-family="Liberation Sans, sans-serif"><line x1="289.62" y1="248.00" x2="289.62" y2="430.00" stroke="#f8dadd" stroke-width="0.8" /><line x1="341.75" y1="248.00" x2="341.75" y2="430.00" stroke="#dedef8" stroke-width="0.8" /><line x1="393.88" y1="248.00" x2="393.88" y2="430.00" stroke="#f8dadd" stroke-width="0.8" /><line x1="446.00" y1="248.00" x2="446.00" y2="430.00" stroke="#dedef8" stroke-width="0.8" /><line x1="498.12" y1="248.00" x2="498.12" y2="430.00" stroke="#f8dadd" stroke-width="0.8" /><line x1="550.25" y1="248.00" x2="550.25" y2="430.00" stroke="#dedef8" stroke-width="0.8" /><line x1="602.38" y1="248.00" x2="602.38" y2="430.00" stroke="#f8dadd" stroke-width="0.8" /><line x1="237.50" y1="270.75" x2="654.50" y2="270.75" stroke="#f8dadd" stroke-width="0.8" /><line x1="237.50" y1="293.50" x2="654.50" y2="293.50" stroke="#dedef8" stroke-width="0.8" /><line x1="237.50" y1="316.25" x2="654.50" y2="316.25" stroke="#f8dadd" stroke-width="0.8" /><line x1="237.50" y1="361.75" x2="654.50" y2="361.75" stroke="#f8dadd" stroke-width="0.8" /><line x1="237.50" y1="384.50" x2="654.50" y2="384.50" stroke="#dedef8" stroke-width="0.8" /><line x1="237.50" y1="407.25" x2="654.50" y2="407.25" stroke="#f8dadd" stroke-width="0.8" /><line x1="237.50" y1="339.00" x2="654.50" y2="339.00" stroke="#a8a8a8" stroke-width="0.8" /><line x1="237.50" y1="248.00" x2="654.50" y2="248.00" stroke="#d8d8d8" stroke-width="1.2" /><line x1="654.50" y1="248.00" x2="654.50" y2="430.00" stroke="#d8d8d8" stroke-width="1.2" /><line x1="237.50" y1="248.00" x2="237.50" y2="432.00" stroke="#808080" stroke-width="1" /><line x1="236.50" y1="430.00" x2="654.50" y2="430.00" stroke="#808080" stroke-width="1" /><polyline points="238.0,335.9 238.2,346.7 238.5,327.9 238.8,344.9 239.0,330.0 239.2,346.8 239.5,332.3 239.8,344.6 240.0,333.1 240.2,355.0 240.5,326.9 240.8,345.9 241.0,331.6 241.2,350.2 241.5,334.2 241.8,349.4 242.0,327.8 242.2,344.1 242.5,334.3 242.8,347.6 243.0,334.9 243.2,345.5 243.5,331.8 243.8,347.4 244.0,325.1 244.2,347.1 244.5,332.1 244.8,350.7 245.0,329.8 245.2,344.7 245.5,337.1 245.8,350.8 246.0,328.3 246.2,353.8 246.5,335.3 246.8,348.9 247.0,325.0 247.2,347.0 247.5,333.0 247.8,347.7 248.0,334.8 248.2,350.5 248.5,333.6 248.8,347.4 249.0,332.8 249.2,348.3 249.5,331.3 249.8,349.0 250.0,330.0 250.2,347.6 250.5,337.1 250.8,352.2 251.0,334.1 251.2,348.0 251.5,327.9 251.8,343.3 252.0,336.0 252.2,345.9 252.5,335.5 252.8,344.8 253.0,336.1 253.2,347.5 253.5,329.2 253.8,345.8 254.0,333.6 254.2,346.6 254.5,333.2 254.8,347.1 255.0,334.1 255.2,349.8 255.5,334.7 255.8,343.9 256.0,336.6 256.2,344.6 256.5,329.8 256.8,345.1 257.0,335.9 257.2,345.2 257.5,333.9 257.8,348.8 258.0,332.1 258.2,349.2 258.5,332.0 258.8,344.3 259.0,331.3 259.2,347.2 259.5,334.5 259.8,347.4 260.0,334.1 260.2,347.8 260.5,335.0 260.8,343.5 261.0,334.8 261.2,345.1 261.5,331.6 261.8,344.1 262.0,331.6 262.2,344.0 262.5,337.5 262.8,346.0 263.0,334.5 263.2,342.3 263.5,336.9 263.8,343.6 264.0,334.9 264.2,347.8 264.5,337.8 264.8,351.0 265.0,336.4 265.2,344.2 265.5,332.5 265.8,347.0 266.0,331.8 266.2,344.9 266.5,334.3 266.8,347.4 267.0,334.1 267.2,345.4 267.5,333.6 267.8,345.3 268.0,336.4 268.2,348.5 268.5,335.4 268.8,347.8 269.0,329.5 269.2,351.6 269.5,334.5 269.8,347.3 270.0,331.2 270.2,346.8 270.5,332.9 270.8,342.6 271.0,337.4 271.2,344.0 271.5,335.1 271.8,346.2 272.0,334.5 272.2,342.5 272.5,334.8 272.8,342.9 273.0,337.8 273.2,344.1 273.5,334.8 273.8,343.5 274.0,335.8 274.2,344.7 274.5,335.4 274.8,343.3 275.0,332.1 275.2,347.4 275.5,333.5 275.8,346.2 276.0,326.5 276.2,343.9 276.5,334.3 276.8,347.8 277.0,336.4 277.2,350.6 277.5,331.8 277.8,344.8 278.0,330.1 278.2,349.3 278.5,335.6 278.8,343.8 279.0,333.6 279.2,343.5 279.5,334.8 279.8,345.1 280.0,335.2 280.2,345.0 280.5,336.0 280.8,346.3 281.0,336.9 281.2,343.7 281.5,330.7 281.8,349.2 282.0,334.1 282.2,352.4 282.5,336.1 282.8,346.4 283.0,332.8 283.2,344.6 283.5,333.4 283.8,343.0 284.0,334.4 284.2,344.4 284.5,332.9 284.8,346.7 285.0,336.7 285.2,355.9 285.5,334.9 285.8,353.2 286.0,328.5 286.2,348.5 286.5,329.7 286.8,346.5 287.0,333.1 287.2,351.3 287.5,333.9 287.8,343.9 288.0,335.9 288.2,348.1 288.5,334.6 288.8,345.8 289.0,333.8 289.2,343.6 289.5,335.1 289.8,349.2 290.0,333.4 290.2,344.5 290.5,336.0 290.8,344.4 291.0,333.6 291.2,346.3 291.5,337.2 291.8,343.5 292.0,336.6 292.2,344.1 292.5,332.4 292.8,351.0 293.0,336.2 293.2,348.7 293.5,332.2 293.8,343.4 294.0,331.0 294.2,345.8 294.5,333.2 294.8,356.5 295.0,334.3 295.2,351.6 295.5,333.3 295.8,346.2 296.0,334.5 296.2,346.2 296.5,335.1 296.8,346.2 297.0,337.1 297.2,350.1 297.5,336.7 297.8,343.1 298.0,336.3 298.2,352.1 298.5,334.9 298.8,347.4 299.0,336.3 299.2,346.8 299.5,335.7 299.8,348.0 300.0,336.1 300.2,343.7 300.5,334.8 300.8,345.1 301.0,335.0 301.2,352.5 301.5,333.3 301.8,345.2 302.0,331.7 302.2,344.4 302.5,335.4 302.8,348.5 303.0,335.3 303.2,343.2 303.5,337.2 303.8,343.2 304.0,333.2 304.2,343.3 304.5,336.8 304.8,348.8 305.0,336.8 305.2,347.9 305.5,333.8 305.8,344.2 306.0,330.4 306.2,344.2 306.5,331.6 306.8,344.2 307.0,334.0 307.2,342.9 307.5,338.0 307.8,349.7 308.0,335.9 308.2,346.3 308.5,338.0 308.8,343.9 309.0,337.7 309.2,345.5 309.5,336.3 309.8,349.7 310.0,334.1 310.2,347.1 310.5,333.0 310.8,345.0 311.0,336.3 311.2,343.7 311.5,333.6 311.8,348.1 312.0,337.6 312.2,345.6 312.5,337.2 312.8,344.2 313.0,332.7 313.2,347.9 313.5,333.7 313.8,346.5 314.0,332.8 314.2,343.9 314.5,333.0 314.8,343.8 315.0,331.2 315.2,343.7 315.5,336.2 315.8,346.2 316.0,334.6 316.2,343.2 316.5,337.8 316.8,344.0 317.0,336.2 317.2,344.5 317.5,335.2 317.8,346.0 318.0,331.6 318.2,344.6 318.5,333.9 318.8,343.6 319.0,334.1 319.2,343.0 319.5,337.5 319.8,345.8 320.0,331.6 320.2,346.2 320.5,334.3 320.8,349.2 321.0,333.2 321.2,348.3 321.5,331.8 321.8,346.3 322.0,332.0 322.2,348.9 322.5,335.1 322.8,355.8 323.0,336.6 323.2,345.1 323.5,334.0 323.8,344.3 324.0,335.9 324.2,348.8 324.5,335.1 324.8,345.0 325.0,334.1 325.2,348.0 325.5,335.9 325.8,343.5 326.0,335.0 326.2,345.7 326.5,336.3 326.8,345.4 327.0,336.0 327.2,345.3 327.5,333.1 327.8,350.1 328.0,334.6 328.2,349.3 328.5,335.8 328.8,344.4 329.0,335.7 329.2,351.5 329.5,331.7 329.8,345.1 330.0,332.6 330.2,352.3 330.5,332.1 330.8,348.7 331.0,332.3 331.2,345.1 331.5,331.7 331.8,349.0 332.0,331.9 332.2,348.0 332.5,331.3 332.8,343.8 333.0,334.9 333.2,345.0 333.5,333.8 333.8,346.8 334.0,335.5 334.2,344.6 334.5,330.0 334.8,345.4 335.0,335.9 335.2,343.7 335.5,337.8 335.8,345.6 336.0,333.7 336.2,352.4 336.5,337.2 336.8,344.5 337.0,336.5 337.2,347.7 337.5,334.1 337.8,344.3 338.0,336.6 338.2,344.1 338.5,333.4 338.8,347.8 339.0,337.7 339.2,346.0 339.5,334.9 339.8,345.8 340.0,332.3 340.2,346.3 340.5,332.6 340.8,346.4 341.0,337.0 341.2,343.7 341.5,337.8 341.8,347.5 342.0,337.6 342.2,345.5 342.5,337.5 342.8,343.0 343.0,337.9 343.2,343.3 343.5,333.2 343.8,343.7 344.0,335.4 344.2,348.8 344.5,333.7 344.8,347.1 345.0,334.5 345.2,345.5 345.5,336.3 345.8,346.9 346.0,336.1 346.2,353.3 346.5,335.7 346.8,343.8 347.0,323.3 347.2,344.4 347.5,329.1 347.8,349.1 348.0,336.1 348.2,352.4 348.5,334.2 348.8,347.8 349.0,334.0 349.2,348.5 349.5,322.3 349.8,352.9 350.0,333.3 350.2,349.1 350.5,335.1 350.8,350.4 351.0,333.6 351.2,349.4 351.5,331.7 351.8,347.4 352.0,332.4 352.2,343.5 352.5,326.2 352.8,345.5 353.0,334.7 353.2,348.8 353.5,335.4 353.8,346.5 354.0,332.9 354.2,352.2 354.5,333.3 354.8,347.7 355.0,335.1 355.2,343.6 355.5,333.1 355.8,349.0 356.0,330.1 356.2,351.7 356.5,334.2 356.8,349.3 357.0,328.9 357.2,348.0 357.5,336.0 357.8,349.4 358.0,333.8 358.2,346.3 358.5,334.7 358.8,343.7 359.0,337.2 359.2,345.5 359.5,337.6 359.8,342.7 360.0,333.7 360.2,346.5 360.5,333.3 360.8,350.3 361.0,338.2 361.2,346.7 361.5,337.9 361.8,343.4 362.0,335.8 362.2,343.7 362.5,332.3 362.8,344.9 363.0,335.1 363.2,344.2 363.5,332.0 363.8,346.4 364.0,336.3 364.2,346.0 364.5,332.6 364.8,343.4 365.0,334.7 365.2,343.9 365.5,329.4 365.8,347.7 366.0,334.5 366.2,344.3 366.5,337.1 366.8,344.2 367.0,333.9 367.2,347.0 367.5,336.7 367.8,347.3 368.0,334.4 368.2,350.5 368.5,333.0 368.8,349.3 369.0,334.2 369.2,343.9 369.5,336.1 369.8,352.8 370.0,336.2 370.2,349.7 370.5,333.5 370.8,345.1 371.0,335.5 371.2,345.3 371.5,336.7 371.8,343.2 372.0,336.0 372.2,348.1 372.5,331.6 372.8,349.7 373.0,333.1 373.2,347.8 373.5,333.6 373.8,344.9 374.0,334.6 374.2,344.1 374.5,332.1 374.8,346.5 375.0,329.6 375.2,346.1 375.5,336.1 375.8,344.1 376.0,331.2 376.2,349.3 376.5,331.4 376.8,349.6 377.0,334.7 377.2,347.3 377.5,329.8 377.8,344.2 378.0,329.0 378.2,348.3 378.5,336.5 378.8,345.4 379.0,333.6 379.2,345.3 379.5,335.8 379.8,347.5 380.0,334.0 380.2,347.6 380.5,332.8 380.8,345.0 381.0,336.5 381.2,347.3 381.5,332.5 381.8,351.1 382.0,330.7 382.2,348.8 382.5,332.8 382.8,349.3 383.0,331.1 383.2,347.1 383.5,329.5 383.8,344.0 384.0,334.9 384.2,346.1 384.5,334.2 384.8,347.5 385.0,336.6 385.2,343.1 385.5,332.1 385.8,343.4 386.0,333.5 386.2,345.1 386.5,336.9 386.8,344.9 387.0,335.8 387.2,344.5 387.5,334.6 387.8,347.2 388.0,335.4 388.2,345.0 388.5,335.2 388.8,345.7 389.0,336.8 389.2,342.6 389.5,337.7 389.8,346.8 390.0,336.0 390.2,344.2 390.5,332.8 390.8,343.2 391.0,336.6 391.2,351.2 391.5,337.9 391.8,346.7 392.0,337.5 392.2,346.7 392.5,333.5 392.8,348.0 393.0,336.8 393.2,348.6 393.5,334.7 393.8,347.3 394.0,337.4 394.2,346.6 394.5,337.8 394.8,343.1 395.0,335.5 395.2,346.8 395.5,333.3 395.8,346.1 396.0,334.9 396.2,345.3 396.5,333.8 396.8,351.0 397.0,337.6 397.2,344.0 397.5,335.4 397.8,343.7 398.0,336.4 398.2,347.9 398.5,335.1 398.8,343.1 399.0,333.6 399.2,349.9 399.5,333.4 399.8,352.2 400.0,333.9 400.2,346.0 400.5,335.7 400.8,346.4 401.0,330.0 401.2,345.1 401.5,325.4 401.8,351.4 402.0,335.9 402.2,354.2 402.5,326.3 402.8,347.1 403.0,333.7 403.2,346.1 403.5,335.1 403.8,343.7 404.0,332.8 404.2,350.6 404.5,335.6 404.8,348.3 405.0,332.4 405.2,345.3 405.5,331.0 405.8,346.5 406.0,330.0 406.2,350.7 406.5,331.3 406.8,348.9 407.0,334.1 407.2,348.0 407.5,331.1 407.8,344.5 408.0,332.7 408.2,344.0 408.5,334.7 408.8,350.2 409.0,332.8 409.2,343.7 409.5,333.9 409.8,346.1 410.0,330.5 410.2,346.3 410.5,333.4 410.8,352.7 411.0,330.2 411.2,347.5 411.5,330.4 411.8,346.6 412.0,337.0 412.2,347.7 412.5,333.9 412.8,352.0 413.0,334.0 413.2,351.4 413.5,334.0 413.8,348.6 414.0,331.6 414.2,345.2 414.5,335.1 414.8,347.2 415.0,334.0 415.2,353.2 415.5,337.4 415.8,344.9 416.0,337.8 416.2,345.7 416.5,332.6 416.8,343.9 417.0,334.4 417.2,349.2 417.5,331.7 417.8,354.0 418.0,335.2 418.2,349.3 418.5,330.8 418.8,353.2 419.0,335.3 419.2,345.1 419.5,335.9 419.8,344.8 420.0,336.0 420.2,343.3 420.5,334.3 420.8,345.2 421.0,336.6 421.2,343.3 421.5,335.9 421.8,347.9 422.0,334.5 422.2,345.8 422.5,335.4 422.8,348.1 423.0,335.0 423.2,346.6 423.5,333.4 423.8,343.3 424.0,334.1 424.2,342.3 424.5,333.3 424.8,345.2 425.0,334.6 425.2,342.5 425.5,337.7 425.8,351.0 426.0,334.3 426.2,345.8 426.5,335.4 426.8,343.4 427.0,332.3 427.2,346.9 427.5,325.4 427.8,347.5 428.0,333.7 428.2,352.4 428.5,335.1 428.8,350.3 429.0,335.8 429.2,352.1 429.5,330.3 429.8,351.0 430.0,329.4 430.2,347.3 430.5,331.0 430.8,344.3 431.0,330.7 431.2,349.0 431.5,337.0 431.8,345.2 432.0,332.8 432.2,349.2 432.5,332.8 432.8,345.5 433.0,332.2 433.2,345.5 433.5,333.5 433.8,348.9 434.0,336.2 434.2,346.9 434.5,331.3 434.8,347.2 435.0,336.1 435.2,349.2 435.5,326.4 435.8,350.3 436.0,332.6 436.2,349.9 436.5,329.8 436.8,348.9 437.0,333.4 437.2,355.7 437.5,326.3 437.8,349.9 438.0,323.9 438.2,349.0 438.5,334.0 438.8,348.3 439.0,326.5 439.2,351.0 439.5,332.5 439.8,352.5 440.0,333.1 440.2,347.2 440.5,334.0 440.8,346.4 441.0,334.8 441.2,347.5 441.5,336.9 441.8,347.7 442.0,336.0 442.2,347.2 442.5,337.7 442.8,344.8 443.0,336.4 443.2,346.8 443.5,336.0 443.8,343.8 444.0,334.2 444.2,343.1 444.5,334.9 444.8,344.4 445.0,334.8 445.2,346.1 445.5,329.6 445.8,353.7 446.0,336.6 446.2,346.5 446.5,334.8 446.8,354.0 447.0,331.3 447.2,344.6 447.5,333.0 447.8,352.4 448.0,328.1 448.2,346.7 448.5,331.9 448.8,349.4 449.0,329.2 449.2,345.6 449.5,337.3 449.8,343.9 450.0,331.9 450.2,348.6 450.5,333.0 450.8,348.3 451.0,332.4 451.2,346.1 451.5,326.9 451.8,349.0 452.0,335.6 452.2,344.1 452.5,331.6 452.8,348.2 453.0,329.2 453.2,355.8 453.5,335.1 453.8,350.0 454.0,327.8 454.2,356.2 454.5,331.6 454.8,344.5 455.0,334.4 455.2,346.3 455.5,327.7 455.8,349.7 456.0,327.2 456.2,347.5 456.5,334.8 456.8,350.5 457.0,329.0 457.2,349.3 457.5,335.0 457.8,349.3 458.0,329.4 458.2,348.5 458.5,326.9 458.8,348.6 459.0,333.9 459.2,348.1 459.5,331.7 459.8,344.2 460.0,323.9 460.2,343.2 460.5,332.8 460.8,347.1 461.0,333.7 461.2,349.7 461.5,335.3 461.8,348.0 462.0,331.2 462.2,343.8 462.5,333.8 462.8,346.6 463.0,329.9 463.2,349.6 463.5,329.3 463.8,348.6 464.0,332.2 464.2,351.1 464.5,333.9 464.8,347.0 465.0,329.2 465.2,348.5 465.5,331.7 465.8,345.1 466.0,333.9 466.2,344.8 466.5,333.6 466.8,346.1 467.0,334.7 467.2,346.0 467.5,334.3 467.8,343.5 468.0,338.0 468.2,345.9 468.5,335.5 468.8,344.3 469.0,336.9 469.2,349.4 469.5,336.9 469.8,349.8 470.0,337.1 470.2,343.9 470.5,336.2 470.8,347.0 471.0,329.1 471.2,343.7 471.5,333.3 471.8,347.0 472.0,337.4 472.2,347.5 472.5,336.8 472.8,346.0 473.0,334.1 473.2,345.9 473.5,336.6 473.8,347.7 474.0,335.1 474.2,348.2 474.5,327.2 474.8,348.5 475.0,332.2 475.2,352.2 475.5,335.7 475.8,342.7 476.0,337.7 476.2,345.1 476.5,336.5 476.8,346.6 477.0,333.8 477.2,350.9 477.5,335.3 477.8,344.9 478.0,337.2 478.2,352.2 478.5,335.6 478.8,348.1 479.0,333.8 479.2,343.9 479.5,333.2 479.8,344.5 480.0,334.9 480.2,346.5 480.5,333.9 480.8,348.1 481.0,334.1 481.2,345.7 481.5,337.4 481.8,348.0 482.0,327.3 482.2,345.4 482.5,336.4 482.8,347.2 483.0,335.6 483.2,349.9 483.5,331.7 483.8,351.2 484.0,333.8 484.2,347.7 484.5,334.9 484.8,345.8 485.0,333.0 485.2,344.4 485.5,334.9 485.8,344.9 486.0,334.4 486.2,345.3 486.5,334.1 486.8,342.8 487.0,336.0 487.2,348.0 487.5,337.8 487.8,345.1 488.0,335.3 488.2,346.0 488.5,336.1 488.8,350.4 489.0,337.3 489.2,345.6 489.5,331.1 489.8,344.0 490.0,333.1 490.2,343.3 490.5,332.7 490.8,349.0 491.0,335.3 491.2,349.8 491.5,328.9 491.8,344.7 492.0,335.8 492.2,345.4 492.5,332.0 492.8,345.6 493.0,336.7 493.2,347.4 493.5,331.2 493.8,344.0 494.0,336.8 494.2,348.7 494.5,333.7 494.8,349.0 495.0,333.8 495.2,348.0 495.5,336.6 495.8,346.0 496.0,332.9 496.2,347.6 496.5,333.8 496.8,346.6 497.0,330.6 497.2,344.5 497.5,333.4 497.8,343.5 498.0,334.8 498.2,347.7 498.5,333.8 498.8,346.2 499.0,336.5 499.2,343.8 499.5,333.5 499.8,347.5 500.0,331.6 500.2,343.4 500.5,332.6 500.8,345.7 501.0,332.8 501.2,345.8 501.5,335.8 501.8,351.5 502.0,324.5 502.2,350.0 502.5,332.5 502.8,348.4 503.0,334.5 503.2,343.9 503.5,334.3 503.8,343.2 504.0,333.3 504.2,351.6 504.5,332.3 504.8,347.7 505.0,333.8 505.2,347.1 505.5,336.7 505.8,344.6 506.0,334.5 506.2,344.3 506.5,332.0 506.8,354.8 507.0,333.7 507.2,352.1 507.5,335.3 507.8,347.2 508.0,332.2 508.2,345.1 508.5,336.2 508.8,345.8 509.0,333.1 509.2,349.3 509.5,335.1 509.8,349.6 510.0,337.1 510.2,343.9 510.5,332.3 510.8,350.4 511.0,330.7 511.2,344.6 511.5,328.9 511.8,345.3 512.0,332.2 512.2,345.4 512.5,335.6 512.8,348.7 513.0,332.2 513.2,347.0 513.5,334.9 513.8,346.7 514.0,336.1 514.2,347.3 514.5,329.8 514.8,344.8 515.0,334.9 515.2,346.6 515.5,330.4 515.8,347.8 516.0,329.2 516.2,347.3 516.5,331.7 516.8,347.8 517.0,332.7 517.2,353.7 517.5,328.6 517.8,346.8 518.0,334.7 518.2,349.1 518.5,336.5 518.8,346.6 519.0,331.7 519.2,344.8 519.5,334.9 519.8,343.5 520.0,333.4 520.2,352.7 520.5,333.1 520.8,346.9 521.0,334.5 521.2,350.2 521.5,333.1 521.8,344.3 522.0,334.7 522.2,346.5 522.5,336.5 522.8,343.4 523.0,336.9 523.2,347.8 523.5,337.6 523.8,346.8 524.0,336.1 524.2,345.8 524.5,335.0 524.8,350.7 525.0,333.2 525.2,349.3 525.5,333.9 525.8,345.6 526.0,334.0 526.2,344.1 526.5,336.3 526.8,345.8 527.0,336.1 527.2,343.8 527.5,332.1 527.8,348.3 528.0,336.6 528.2,345.5 528.5,333.3 528.8,352.0 529.0,330.7 529.2,343.2 529.5,331.5 529.8,345.0 530.0,334.5 530.2,347.3 530.5,336.0 530.8,344.8 531.0,333.9 531.2,346.4 531.5,336.2 531.8,344.9 532.0,335.9 532.2,344.9 532.5,338.3 532.8,346.5 533.0,337.6 533.2,345.2 533.5,335.3 533.8,344.4 534.0,336.6 534.2,346.5 534.5,334.8 534.8,345.7 535.0,336.4 535.2,346.3 535.5,332.7 535.8,344.6 536.0,334.2 536.2,345.8 536.5,335.1 536.8,347.0 537.0,336.4 537.2,348.2 537.5,336.6 537.8,347.7 538.0,334.6 538.2,344.3 538.5,333.9 538.8,347.7 539.0,334.5 539.2,346.3 539.5,337.2 539.8,346.2 540.0,335.0 540.2,342.7 540.5,333.6 540.8,342.9 541.0,336.7 541.2,347.1 541.5,334.1 541.8,345.2 542.0,337.4 542.2,346.7 542.5,336.3 542.8,343.4 543.0,336.5 543.2,348.2 543.5,335.0 543.8,346.8 544.0,332.4 544.2,347.4 544.5,330.6 544.8,345.1 545.0,332.8 545.2,347.6 545.5,334.7 545.8,354.0 546.0,336.5 546.2,352.6 546.5,336.7 546.8,348.7 547.0,332.7 547.2,345.1 547.5,335.8 547.8,345.4 548.0,334.7 548.2,346.0 548.5,335.6 548.8,345.7 549.0,336.2 549.2,343.5 549.5,334.9 549.8,345.9 550.0,336.6 550.2,345.6 550.5,337.6 550.8,345.8 551.0,334.0 551.2,343.6 551.5,333.0 551.8,346.9 552.0,326.2 552.2,344.1 552.5,334.2 552.8,351.5 553.0,331.1 553.2,347.3 553.5,337.1 553.8,352.7 554.0,333.6 554.2,343.7 554.5,329.8 554.8,348.0 555.0,333.8 555.2,344.5 555.5,336.4 555.8,346.2 556.0,334.5 556.2,343.8 556.5,329.3 556.8,354.9 557.0,335.0 557.2,348.6 557.5,333.5 557.8,348.6 558.0,333.8 558.2,346.3 558.5,333.9 558.8,342.6 559.0,333.7 559.2,347.0 559.5,337.5 559.8,346.6 560.0,337.8 560.2,343.5 560.5,333.7 560.8,349.9 561.0,333.4 561.2,344.8 561.5,335.2 561.8,347.9 562.0,335.1 562.2,345.3 562.5,331.8 562.8,350.8 563.0,330.7 563.2,345.6 563.5,335.9 563.8,344.6 564.0,337.6 564.2,343.3 564.5,333.9 564.8,343.0 565.0,335.4 565.2,352.4 565.5,335.1 565.8,347.0 566.0,336.9 566.2,351.3 566.5,333.8 566.8,344.0 567.0,331.3 567.2,342.9 567.5,337.7 567.8,346.9 568.0,336.8 568.2,346.8 568.5,331.8 568.8,347.9 569.0,334.0 569.2,345.0 569.5,335.7 569.8,344.6 570.0,333.5 570.2,346.9 570.5,337.0 570.8,344.9 571.0,334.7 571.2,343.9 571.5,334.8 571.8,347.5 572.0,335.1 572.2,343.5 572.5,332.5 572.8,351.7 573.0,335.1 573.2,344.8 573.5,333.9 573.8,344.3 574.0,336.8 574.2,343.6 574.5,333.8 574.8,350.7 575.0,336.7 575.2,343.0 575.5,336.9 575.8,345.1 576.0,333.9 576.2,343.1 576.5,335.6 576.8,345.3 577.0,332.2 577.2,344.8 577.5,336.6 577.8,342.5 578.0,336.1 578.2,349.4 578.5,333.9 578.8,344.9 579.0,337.3 579.2,345.0 579.5,333.9 579.8,344.3 580.0,337.1 580.2,347.7 580.5,334.9 580.8,345.4 581.0,335.6 581.2,355.0 581.5,337.3 581.8,345.7 582.0,335.2 582.2,345.1 582.5,333.8 582.8,353.7 583.0,334.8 583.2,344.2 583.5,332.6 583.8,345.0 584.0,333.4 584.2,349.2 584.5,334.7 584.8,348.8 585.0,329.6 585.2,346.6 585.5,335.6 585.8,343.3 586.0,328.5 586.2,345.2 586.5,327.7 586.8,349.1 587.0,337.5 587.2,343.2 587.5,332.6 587.8,347.4 588.0,332.1 588.2,346.4 588.5,330.6 588.8,345.0 589.0,332.6 589.2,344.6 589.5,335.0 589.8,347.1 590.0,329.7 590.2,344.1 590.5,331.7 590.8,354.9 591.0,332.9 591.2,348.8 591.5,336.0 591.8,349.6 592.0,325.8 592.2,351.9 592.5,333.9 592.8,349.5 593.0,329.4 593.2,345.2 593.5,332.5 593.8,344.8 594.0,326.5 594.2,344.5 594.5,335.6 594.8,348.1 595.0,335.1 595.2,347.6 595.5,335.2 595.8,350.1 596.0,335.6 596.2,354.3 596.5,334.1 596.8,343.9 597.0,330.8 597.2,349.8 597.5,334.0 597.8,349.9 598.0,331.4 598.2,353.4 598.5,329.8 598.8,350.7 599.0,336.1 599.2,352.1 599.5,333.3 599.8,347.6 600.0,325.2 600.2,354.6 600.5,335.4 600.8,346.7 601.0,330.1 601.2,349.8 601.5,331.7 601.8,347.3 602.0,333.3 602.2,347.5 602.5,329.2 602.8,344.6 603.0,336.9 603.2,345.0 603.5,333.4 603.8,343.8 604.0,336.7 604.2,344.6 604.5,336.4 604.8,348.3 605.0,332.1 605.2,348.8 605.5,333.2 605.8,344.0 606.0,334.4 606.2,347.0 606.5,333.0 606.8,344.9 607.0,330.1 607.2,351.0 607.5,331.5 607.8,348.6 608.0,330.4 608.2,346.3 608.5,331.5 608.8,346.8 609.0,335.2 609.2,346.1 609.5,333.2 609.8,346.8 610.0,334.3 610.2,348.2 610.5,335.9 610.8,350.9 611.0,332.7 611.2,348.6 611.5,334.4 611.8,346.1 612.0,336.8 612.2,344.2 612.5,334.0 612.8,343.9 613.0,337.4 613.2,347.5 613.5,332.8 613.8,343.0 614.0,334.4 614.2,342.4" fill="none" stroke="#1672c0" stroke-width="0.6"/><polyline points="238.0,335.3 238.2,345.0 238.5,333.8 238.8,345.4 239.0,335.3 239.2,345.2 239.5,336.3 239.8,345.3 240.0,336.3 240.2,345.0 240.5,335.4 240.8,343.3 241.0,337.1 241.2,344.6 241.5,335.3 241.8,344.5 242.0,336.1 242.2,344.2 242.5,335.8 242.8,344.8 243.0,336.3 243.2,343.3 243.5,335.3 243.8,344.4 244.0,336.1 244.2,345.0 244.5,335.5 244.8,345.0 245.0,336.4 245.2,346.7 245.5,334.6 245.8,345.0 246.0,334.0 246.2,344.1 246.5,334.0 246.8,344.5 247.0,334.5 247.2,343.9 247.5,334.4 247.8,343.6 248.0,335.8 248.2,344.8 248.5,334.8 248.8,344.4 249.0,336.6 249.2,343.2 249.5,333.7 249.8,343.2 250.0,336.4 250.2,343.2 250.5,336.5 250.8,343.5 251.0,337.3 251.2,343.5 251.5,336.1 251.8,344.3 252.0,337.1 252.2,343.4 252.5,336.7 252.8,343.5 253.0,335.4 253.2,343.6 253.5,336.3 253.8,343.4 254.0,336.4 254.2,344.7 254.5,336.2 254.8,343.5 255.0,335.7 255.2,344.5 255.5,335.8 255.8,344.0 256.0,336.8 256.2,343.8 256.5,336.3 256.8,343.6 257.0,335.9 257.2,343.1 257.5,337.0 257.8,342.7 258.0,337.2 258.2,342.3 258.5,337.4 258.8,342.0 259.0,337.9 259.2,342.4 259.5,338.1 259.8,341.6 260.0,338.2 260.2,342.0 260.5,338.4 260.8,342.1 261.0,338.1 261.2,342.1 261.5,337.8 261.8,341.5 262.0,337.8 262.2,341.8 262.5,338.3 262.8,342.1 263.0,338.2 263.2,342.0 263.5,338.2 263.8,342.3 264.0,337.5 264.2,342.5 264.5,337.9 264.8,342.3 265.0,337.8 265.2,341.8 265.5,337.7 265.8,342.1 266.0,337.4 266.2,342.1 266.5,338.0 266.8,341.8 267.0,337.5 267.2,342.5 267.5,337.6 267.8,341.5 268.0,338.0 268.2,341.6 268.5,338.2 268.8,341.8 269.0,337.7 269.2,341.7 269.5,338.0 269.8,341.7 270.0,338.1 270.2,341.8 270.5,338.2 270.8,342.0 271.0,338.0 271.2,341.9 271.5,338.3 271.8,342.2 272.0,337.3 272.2,342.0 272.5,336.9 272.8,342.2 273.0,337.2 273.2,342.7 273.5,337.0 273.8,342.4 274.0,337.6 274.2,342.7 274.5,336.3 274.8,342.8 275.0,336.8 275.2,344.0 275.5,337.5 275.8,342.7 276.0,337.5 276.2,343.0 276.5,337.1 276.8,342.1 277.0,338.1 277.2,342.8 277.5,337.9 277.8,342.7 278.0,337.6 278.2,342.5 278.5,338.0 278.8,342.6 279.0,337.8 279.2,343.0 279.5,337.9 279.8,343.0 280.0,336.9 280.2,342.2 280.5,336.8 280.8,343.7 281.0,337.2 281.2,343.8 281.5,336.9 281.8,343.3 282.0,336.9 282.2,342.6 282.5,336.2 282.8,344.0 283.0,337.0 283.2,343.5 283.5,336.9 283.8,342.6 284.0,336.6 284.2,343.2 284.5,336.7 284.8,342.7 285.0,336.7 285.2,343.0 285.5,337.3 285.8,343.2 286.0,337.0 286.2,342.2 286.5,337.8 286.8,342.9 287.0,337.3 287.2,343.2 287.5,337.8 287.8,342.3 288.0,337.5 288.2,342.3 288.5,336.5 288.8,342.5 289.0,337.3 289.2,342.9 289.5,336.9 289.8,342.7 290.0,336.1 290.2,343.3 290.5,336.3 290.8,343.6 291.0,337.2 291.2,343.5 291.5,335.6 291.8,344.0 292.0,336.3 292.2,343.4 292.5,337.2 292.8,342.8 293.0,336.1 293.2,342.7 293.5,337.4 293.8,342.8 294.0,337.7 294.2,343.7 294.5,336.8 294.8,343.2 295.0,337.7 295.2,343.0 295.5,336.9 295.8,342.8 296.0,337.8 296.2,342.6 296.5,337.5 296.8,342.7 297.0,336.9 297.2,342.3 297.5,336.4 297.8,343.1 298.0,337.7 298.2,342.4 298.5,337.6 298.8,343.2 299.0,337.0 299.2,342.6 299.5,336.7 299.8,344.0 300.0,337.4 300.2,343.1 300.5,336.9 300.8,343.8 301.0,337.3 301.2,343.2 301.5,337.5 301.8,342.8 302.0,336.4 302.2,343.1 302.5,337.9 302.8,342.9 303.0,337.5 303.2,342.8 303.5,337.7 303.8,342.5 304.0,338.0 304.2,342.2 304.5,337.3 304.8,342.1 305.0,338.0 305.2,341.8 305.5,338.0 305.8,342.2 306.0,337.9 306.2,342.2 306.5,337.8 306.8,342.7 307.0,337.4 307.2,342.8 307.5,337.1 307.8,342.7 308.0,337.2 308.2,342.2 308.5,337.9 308.8,342.0 309.0,337.3 309.2,342.2 309.5,337.5 309.8,341.9 310.0,337.8 310.2,342.8 310.5,338.0 310.8,342.2 311.0,338.3 311.2,342.3 311.5,338.3 311.8,342.1 312.0,338.0 312.2,342.5 312.5,338.2 312.8,342.4 313.0,338.2 313.2,342.1 313.5,337.7 313.8,342.0 314.0,338.2 314.2,341.8 314.5,338.1 314.8,342.3 315.0,338.3 315.2,341.7 315.5,337.7 315.8,341.8 316.0,337.4 316.2,342.5 316.5,337.9 316.8,341.8 317.0,338.2 317.2,341.9 317.5,337.2 317.8,342.0 318.0,337.4 318.2,342.8 318.5,337.8 318.8,341.8 319.0,338.0 319.2,342.7 319.5,337.9 319.8,342.2 320.0,337.3 320.2,342.5 320.5,337.7 320.8,342.2 321.0,337.7 321.2,342.4 321.5,338.2 321.8,341.8 322.0,337.3 322.2,342.7 322.5,337.8 322.8,342.8 323.0,337.2 323.2,343.2 323.5,336.8 323.8,343.1 324.0,337.0 324.2,343.5 324.5,336.0 324.8,343.0 325.0,336.4 325.2,344.0 325.5,336.7 325.8,342.8 326.0,335.9 326.2,343.5 326.5,336.5 326.8,343.4 327.0,336.7 327.2,344.2 327.5,336.9 327.8,344.1 328.0,335.7 328.2,343.7 328.5,335.5 328.8,343.4 329.0,334.6 329.2,343.1 329.5,336.4 329.8,342.9 330.0,336.5 330.2,343.6 330.5,336.9 330.8,343.6 331.0,336.5 331.2,343.2 331.5,336.9 331.8,343.4 332.0,337.6 332.2,342.3 332.5,337.1 332.8,342.2 333.0,336.8 333.2,343.2 333.5,336.7 333.8,342.9 334.0,337.8 334.2,342.1 334.5,337.4 334.8,342.9 335.0,337.6 335.2,342.6 335.5,337.5 335.8,342.2 336.0,337.1 336.2,342.9 336.5,337.4 336.8,342.1 337.0,337.8 337.2,342.6 337.5,338.0 337.8,342.3 338.0,337.7 338.2,342.0 338.5,337.9 338.8,341.6 339.0,337.8 339.2,341.6 339.5,338.1 339.8,342.4 340.0,337.7 340.2,341.5 340.5,338.6 340.8,342.6 341.0,338.2 341.2,341.8 341.5,338.4 341.8,342.4 342.0,338.4 342.2,341.7 342.5,338.0 342.8,341.6 343.0,337.8 343.2,342.4 343.5,336.1 343.8,342.2 344.0,336.0 344.2,343.9 344.5,335.3 344.8,344.2 345.0,335.3 345.2,343.9 345.5,336.3 345.8,344.2 346.0,336.0 346.2,344.9 346.5,335.5 346.8,343.6 347.0,332.9 347.2,343.9 347.5,335.2 347.8,343.7 348.0,334.5 348.2,343.4 348.5,336.1 348.8,345.0 349.0,336.4 349.2,344.4 349.5,336.5 349.8,343.5 350.0,335.8 350.2,344.4 350.5,336.0 350.8,344.7 351.0,334.7 351.2,343.9 351.5,336.3 351.8,345.6 352.0,334.6 352.2,345.9 352.5,335.9 352.8,346.2 353.0,334.7 353.2,345.9 353.5,334.4 353.8,346.1 354.0,333.2 354.2,344.9 354.5,335.8 354.8,345.2 355.0,335.1 355.2,346.2 355.5,334.3 355.8,344.0 356.0,335.3 356.2,343.9 356.5,336.7 356.8,343.9 357.0,336.6 357.2,343.4 357.5,336.9 357.8,344.1 358.0,336.6 358.2,342.8 358.5,337.2 358.8,343.5 359.0,338.0 359.2,343.5 359.5,337.3 359.8,342.9 360.0,338.4 360.2,342.2 360.5,338.2 360.8,342.5 361.0,337.7 361.2,341.7 361.5,337.6 361.8,342.7 362.0,337.5 362.2,342.7 362.5,337.4 362.8,342.1 363.0,337.2 363.2,342.3 363.5,337.9 363.8,342.9 364.0,337.9 364.2,341.8 364.5,337.6 364.8,341.9 365.0,337.6 365.2,342.1 365.5,338.3 365.8,341.8 366.0,337.6 366.2,342.1 366.5,337.7 366.8,342.3 367.0,338.2 367.2,342.0 367.5,337.6 367.8,342.4 368.0,337.3 368.2,342.2 368.5,336.2 368.8,342.6 369.0,337.1 369.2,343.0 369.5,337.3 369.8,342.3 370.0,337.0 370.2,343.7 370.5,337.2 370.8,344.1 371.0,336.4 371.2,342.9 371.5,337.1 371.8,343.9 372.0,336.1 372.2,344.7 372.5,336.9 372.8,344.4 373.0,336.9 373.2,344.8 373.5,336.6 373.8,343.9 374.0,336.8 374.2,343.7 374.5,336.2 374.8,344.3 375.0,336.5 375.2,342.8 375.5,336.7 375.8,343.3 376.0,336.7 376.2,342.9 376.5,336.8 376.8,343.7 377.0,337.2 377.2,343.6 377.5,335.8 377.8,342.7 378.0,336.7 378.2,343.6 378.5,336.1 378.8,342.8 379.0,336.6 379.2,342.8 379.5,335.7 379.8,343.5 380.0,336.2 380.2,344.6 380.5,336.5 380.8,344.6 381.0,336.3 381.2,344.7 381.5,334.5 381.8,344.2 382.0,335.8 382.2,343.9 382.5,336.3 382.8,343.1 383.0,336.5 383.2,343.4 383.5,337.1 383.8,342.2 384.0,336.8 384.2,342.1 384.5,338.0 384.8,342.1 385.0,338.0 385.2,342.7 385.5,337.6 385.8,342.4 386.0,337.9 386.2,342.3 386.5,338.2 386.8,342.2 387.0,337.8 387.2,341.9 387.5,338.2 387.8,342.4 388.0,338.4 388.2,342.4 388.5,337.8 388.8,342.6 389.0,338.2 389.2,342.6 389.5,337.3 389.8,342.5 390.0,337.5 390.2,341.8 390.5,338.0 390.8,341.8 391.0,337.8 391.2,342.3 391.5,338.0 391.8,342.5 392.0,337.3 392.2,342.6 392.5,338.0 392.8,342.5 393.0,337.7 393.2,342.2 393.5,337.8 393.8,342.3 394.0,338.2 394.2,342.0 394.5,337.8 394.8,341.9 395.0,338.0 395.2,342.5 395.5,337.4 395.8,343.0 396.0,337.0 396.2,342.7 396.5,337.6 396.8,342.6 397.0,337.4 397.2,343.6 397.5,336.5 397.8,344.6 398.0,336.9 398.2,343.2 398.5,335.7 398.8,345.0 399.0,335.2 399.2,344.6 399.5,335.5 399.8,345.4 400.0,334.6 400.2,343.7 400.5,335.0 400.8,344.9 401.0,335.7 401.2,344.2 401.5,336.0 401.8,344.9 402.0,336.6 402.2,344.7 402.5,336.7 402.8,344.3 403.0,336.5 403.2,343.7 403.5,335.4 403.8,343.7 404.0,336.1 404.2,345.2 404.5,335.9 404.8,345.4 405.0,336.1 405.2,345.0 405.5,334.3 405.8,344.4 406.0,334.0 406.2,343.9 406.5,335.4 406.8,346.1 407.0,334.6 407.2,346.3 407.5,334.1 407.8,345.8 408.0,335.5 408.2,345.3 408.5,334.9 408.8,345.7 409.0,333.8 409.2,345.9 409.5,333.9 409.8,344.0 410.0,334.6 410.2,345.2 410.5,335.8 410.8,345.0 411.0,334.9 411.2,344.6 411.5,335.9 411.8,343.8 412.0,335.3 412.2,343.7 412.5,335.3 412.8,343.6 413.0,336.9 413.2,344.3 413.5,336.6 413.8,343.2 414.0,336.4 414.2,343.3 414.5,335.9 414.8,344.8 415.0,335.8 415.2,343.4 415.5,336.2 415.8,344.6 416.0,336.5 416.2,344.0 416.5,337.2 416.8,343.6 417.0,337.4 417.2,342.9 417.5,336.7 417.8,343.1 418.0,336.6 418.2,342.5 418.5,338.1 418.8,343.0 419.0,337.5 419.2,342.5 419.5,338.2 419.8,341.6 420.0,338.0 420.2,341.5 420.5,337.8 420.8,342.1 421.0,338.1 421.2,341.8 421.5,338.6 421.8,341.6 422.0,338.5 422.2,341.6 422.5,338.1 422.8,342.2 423.0,338.2 423.2,341.9 423.5,337.6 423.8,342.4 424.0,338.4 424.2,342.8 424.5,337.7 424.8,342.3 425.0,337.2 425.2,343.5 425.5,337.1 425.8,343.7 426.0,336.2 426.2,344.6 426.5,336.8 426.8,343.4 427.0,336.6 427.2,344.7 427.5,335.7 427.8,345.0 428.0,335.5 428.2,344.6 428.5,335.8 428.8,344.5 429.0,335.9 429.2,344.3 429.5,334.9 429.8,343.2 430.0,336.8 430.2,343.7 430.5,334.9 430.8,343.3 431.0,335.4 431.2,343.3 431.5,334.6 431.8,344.4 432.0,335.3 432.2,343.9 432.5,335.1 432.8,345.1 433.0,334.5 433.2,344.0 433.5,335.0 433.8,345.9 434.0,334.1 434.2,346.1 434.5,333.7 434.8,346.3 435.0,334.0 435.2,344.4 435.5,334.4 435.8,345.7 436.0,334.6 436.2,346.6 436.5,333.5 436.8,344.8 437.0,336.1 437.2,345.6 437.5,334.6 437.8,345.5 438.0,335.3 438.2,344.8 438.5,335.1 438.8,343.3 439.0,335.1 439.2,344.5 439.5,336.1 439.8,344.2 440.0,335.8 440.2,344.6 440.5,334.8 440.8,343.8 441.0,336.3 441.2,342.8 441.5,336.8 441.8,343.3 442.0,336.2 442.2,343.7 442.5,336.9 442.8,343.6 443.0,337.4 443.2,342.9 443.5,337.4 443.8,342.5 444.0,337.6 444.2,341.9 444.5,338.1 444.8,342.7 445.0,337.4 445.2,342.3 445.5,337.3 445.8,341.7 446.0,338.4 446.2,341.9 446.5,336.7 446.8,342.7 447.0,336.7 447.2,343.3 447.5,336.9 447.8,342.7 448.0,336.7 448.2,343.2 448.5,336.6 448.8,343.2 449.0,336.4 449.2,343.0 449.5,335.7 449.8,344.1 450.0,335.5 450.2,345.0 450.5,335.4 450.8,343.6 451.0,335.5 451.2,344.7 451.5,333.5 451.8,345.5 452.0,333.0 452.2,346.1 452.5,335.3 452.8,347.2 453.0,335.2 453.2,346.0 453.5,334.7 453.8,345.4 454.0,334.8 454.2,346.0 454.5,334.0 454.8,346.9 455.0,333.1 455.2,345.8 455.5,333.0 455.8,345.1 456.0,333.4 456.2,346.0 456.5,334.4 456.8,347.8 457.0,335.3 457.2,344.3 457.5,335.3 457.8,344.5 458.0,334.7 458.2,347.4 458.5,335.9 458.8,344.4 459.0,334.4 459.2,345.2 459.5,335.4 459.8,346.1 460.0,333.2 460.2,345.1 460.5,333.6 460.8,345.6 461.0,333.2 461.2,344.4 461.5,334.1 461.8,345.1 462.0,334.4 462.2,345.4 462.5,335.0 462.8,346.2 463.0,334.2 463.2,345.0 463.5,335.2 463.8,343.7 464.0,337.0 464.2,344.2 464.5,337.4 464.8,342.6 465.0,337.1 465.2,343.2 465.5,337.9 465.8,343.1 466.0,337.9 466.2,341.8 466.5,337.9 466.8,341.5 467.0,338.0 467.2,342.1 467.5,338.2 467.8,342.4 468.0,337.9 468.2,342.2 468.5,338.3 468.8,342.2 469.0,337.7 469.2,342.6 469.5,337.8 469.8,342.2 470.0,337.6 470.2,341.9 470.5,337.3 470.8,342.4 471.0,338.1 471.2,341.9 471.5,338.1 471.8,342.7 472.0,337.8 472.2,341.9 472.5,337.6 472.8,343.1 473.0,337.6 473.2,342.2 473.5,337.7 473.8,342.0 474.0,338.3 474.2,342.0 474.5,338.0 474.8,341.9 475.0,338.2 475.2,341.7 475.5,338.5 475.8,341.6 476.0,337.8 476.2,342.1 476.5,338.0 476.8,342.5 477.0,337.2 477.2,341.8 477.5,337.0 477.8,342.1 478.0,336.7 478.2,342.5 478.5,336.4 478.8,342.6 479.0,336.7 479.2,342.4 479.5,337.4 479.8,343.8 480.0,337.0 480.2,342.8 480.5,337.3 480.8,343.9 481.0,337.2 481.2,343.6 481.5,337.3 481.8,343.3 482.0,337.5 482.2,343.2 482.5,337.2 482.8,342.6 483.0,337.0 483.2,343.2 483.5,337.1 483.8,343.3 484.0,337.0 484.2,343.3 484.5,335.6 484.8,343.4 485.0,336.5 485.2,343.3 485.5,336.5 485.8,343.4 486.0,337.0 486.2,344.0 486.5,335.7 486.8,344.3 487.0,336.0 487.2,343.4 487.5,336.7 487.8,344.0 488.0,336.0 488.2,343.8 488.5,335.2 488.8,343.5 489.0,336.3 489.2,345.0 489.5,335.0 489.8,344.4 490.0,336.7 490.2,343.4 490.5,335.8 490.8,343.9 491.0,337.0 491.2,343.0 491.5,336.4 491.8,343.1 492.0,335.9 492.2,344.2 492.5,335.9 492.8,343.3 493.0,336.6 493.2,342.9 493.5,336.0 493.8,344.5 494.0,336.7 494.2,344.0 494.5,335.8 494.8,344.3 495.0,336.1 495.2,344.6 495.5,336.2 495.8,344.7 496.0,336.4 496.2,344.3 496.5,334.8 496.8,346.2 497.0,336.1 497.2,345.0 497.5,336.5 497.8,343.8 498.0,335.1 498.2,343.7 498.5,336.5 498.8,345.0 499.0,335.4 499.2,344.7 499.5,336.2 499.8,343.8 500.0,335.5 500.2,344.1 500.5,336.1 500.8,344.2 501.0,336.7 501.2,343.5 501.5,336.4 501.8,343.1 502.0,337.2 502.2,343.2 502.5,336.0 502.8,344.1 503.0,336.5 503.2,343.5 503.5,336.5 503.8,343.0 504.0,336.1 504.2,343.4 504.5,336.1 504.8,343.4 505.0,335.8 505.2,344.7 505.5,335.8 505.8,344.4 506.0,335.0 506.2,343.4 506.5,335.8 506.8,344.1 507.0,334.9 507.2,343.2 507.5,336.2 507.8,343.5 508.0,336.6 508.2,344.4 508.5,336.0 508.8,344.6 509.0,336.5 509.2,344.0 509.5,335.7 509.8,344.2 510.0,336.4 510.2,344.1 510.5,336.9 510.8,343.4 511.0,337.5 511.2,342.6 511.5,336.2 511.8,342.5 512.0,337.0 512.2,343.1 512.5,336.4 512.8,343.5 513.0,336.9 513.2,343.2 513.5,335.8 513.8,343.9 514.0,336.0 514.2,343.2 514.5,337.2 514.8,343.8 515.0,336.3 515.2,344.2 515.5,336.9 515.8,344.1 516.0,335.9 516.2,343.7 516.5,336.6 516.8,343.7 517.0,336.6 517.2,343.4 517.5,336.1 517.8,343.4 518.0,336.9 518.2,342.8 518.5,336.8 518.8,342.6 519.0,337.8 519.2,342.4 519.5,336.9 519.8,342.4 520.0,337.2 520.2,342.1 520.5,338.1 520.8,342.0 521.0,338.1 521.2,342.5 521.5,337.1 521.8,342.5 522.0,337.8 522.2,342.8 522.5,337.3 522.8,342.6 523.0,338.0 523.2,342.8 523.5,337.8 523.8,342.3 524.0,338.1 524.2,341.8 524.5,337.7 524.8,342.5 525.0,337.7 525.2,341.8 525.5,338.1 525.8,342.0 526.0,337.5 526.2,342.6 526.5,338.1 526.8,341.8 527.0,338.1 527.2,342.0 527.5,338.0 527.8,342.5 528.0,337.7 528.2,342.4 528.5,338.2 528.8,341.6 529.0,337.8 529.2,341.9 529.5,338.5 529.8,341.6 530.0,337.8 530.2,342.4 530.5,337.8 530.8,342.0 531.0,336.9 531.2,342.1 531.5,337.7 531.8,342.1 532.0,337.7 532.2,342.2 532.5,337.4 532.8,342.5 533.0,337.7 533.2,342.1 533.5,338.0 533.8,342.7 534.0,338.2 534.2,342.0 534.5,337.8 534.8,342.4 535.0,337.4 535.2,342.6 535.5,338.4 535.8,341.9 536.0,338.4 536.2,342.6 536.5,337.8 536.8,342.4 537.0,338.2 537.2,342.4 537.5,337.8 537.8,342.0 538.0,338.3 538.2,342.1 538.5,338.5 538.8,342.2 539.0,338.3 539.2,342.1 539.5,338.2 539.8,341.9 540.0,338.0 540.2,341.8 540.5,338.2 540.8,341.7 541.0,337.1 541.2,342.3 541.5,337.4 541.8,342.4 542.0,337.0 542.2,343.1 542.5,336.6 542.8,342.5 543.0,336.7 543.2,342.6 543.5,337.0 543.8,342.4 544.0,337.2 544.2,343.0 544.5,337.3 544.8,343.2 545.0,337.1 545.2,342.4 545.5,337.4 545.8,342.0 546.0,337.5 546.2,342.4 546.5,337.5 546.8,342.4 547.0,337.3 547.2,342.4 547.5,337.3 547.8,342.1 548.0,338.0 548.2,342.1 548.5,336.9 548.8,343.2 549.0,337.6 549.2,342.3 549.5,337.5 549.8,342.7 550.0,337.4 550.2,342.7 550.5,337.5 550.8,343.3 551.0,336.7 551.2,343.8 551.5,336.9 551.8,343.2 552.0,336.7 552.2,343.7 552.5,336.4 552.8,343.0 553.0,337.3 553.2,343.8 553.5,337.4 553.8,343.6 554.0,336.5 554.2,343.0 554.5,337.5 554.8,343.9 555.0,337.3 555.2,342.1 555.5,337.7 555.8,343.0 556.0,337.8 556.2,342.4 556.5,337.5 556.8,342.2 557.0,336.7 557.2,342.8 557.5,337.4 557.8,342.7 558.0,337.3 558.2,342.4 558.5,337.4 558.8,342.5 559.0,336.4 559.2,343.1 559.5,337.5 559.8,343.2 560.0,336.7 560.2,342.5 560.5,335.6 560.8,343.6 561.0,337.3 561.2,342.3 561.5,337.1 561.8,343.0 562.0,337.7 562.2,343.4 562.5,337.6 562.8,343.2 563.0,338.0 563.2,342.4 563.5,337.9 563.8,342.2 564.0,337.4 564.2,342.1 564.5,337.6 564.8,342.0 565.0,338.1 565.2,341.6 565.5,338.4 565.8,341.9 566.0,338.1 566.2,341.6 566.5,337.6 566.8,342.2 567.0,338.4 567.2,341.9 567.5,338.3 567.8,342.6 568.0,338.2 568.2,342.8 568.5,337.5 568.8,342.0 569.0,338.2 569.2,342.3 569.5,337.2 569.8,342.8 570.0,337.4 570.2,341.8 570.5,337.2 570.8,342.1 571.0,338.0 571.2,342.2 571.5,337.8 571.8,342.2 572.0,337.8 572.2,341.8 572.5,337.7 572.8,341.7 573.0,338.3 573.2,342.0 573.5,337.8 573.8,341.7 574.0,337.8 574.2,342.1 574.5,338.3 574.8,341.9 575.0,337.8 575.2,342.3 575.5,337.7 575.8,341.8 576.0,337.5 576.2,342.1 576.5,337.7 576.8,341.8 577.0,337.6 577.2,342.7 577.5,337.6 577.8,342.0 578.0,338.0 578.2,341.9 578.5,337.1 578.8,342.7 579.0,337.2 579.2,342.2 579.5,337.7 579.8,342.8 580.0,337.1 580.2,343.3 580.5,336.4 580.8,342.3 581.0,336.5 581.2,343.0 581.5,337.3 581.8,342.6 582.0,337.3 582.2,343.2 582.5,336.3 582.8,342.8 583.0,337.3 583.2,344.0 583.5,336.8 583.8,343.2 584.0,336.8 584.2,344.8 584.5,336.9 584.8,344.7 585.0,336.8 585.2,344.4 585.5,335.7 585.8,344.9 586.0,334.9 586.2,344.8 586.5,334.9 586.8,344.9 587.0,334.7 587.2,345.6 587.5,334.2 587.8,344.4 588.0,335.5 588.2,346.2 588.5,335.9 588.8,346.4 589.0,335.8 589.2,345.4 589.5,336.0 589.8,344.7 590.0,336.2 590.2,344.5 590.5,336.2 590.8,345.6 591.0,334.9 591.2,345.2 591.5,334.9 591.8,345.5 592.0,335.7 592.2,345.6 592.5,335.4 592.8,345.5 593.0,336.1 593.2,345.0 593.5,334.9 593.8,344.9 594.0,333.7 594.2,344.7 594.5,335.0 594.8,346.1 595.0,333.6 595.2,346.5 595.5,333.0 595.8,344.4 596.0,333.9 596.2,345.6 596.5,335.2 596.8,345.5 597.0,334.2 597.2,344.4 597.5,334.9 597.8,346.6 598.0,334.8 598.2,346.2 598.5,333.9 598.8,345.5 599.0,334.2 599.2,344.1 599.5,336.3 599.8,345.7 600.0,335.9 600.2,344.6 600.5,335.4 600.8,345.6 601.0,335.1 601.2,343.6 601.5,336.6 601.8,345.2 602.0,334.7 602.2,343.6 602.5,335.0 602.8,344.0 603.0,335.8 603.2,346.3 603.5,334.0 603.8,344.6 604.0,334.1 604.2,344.3 604.5,335.1 604.8,345.2 605.0,334.9 605.2,346.1 605.5,334.2 605.8,345.5 606.0,334.1 606.2,345.0 606.5,334.6 606.8,345.4 607.0,335.7 607.2,343.3 607.5,335.8 607.8,344.2 608.0,336.6 608.2,342.8 608.5,336.2 608.8,343.8 609.0,337.2 609.2,343.4 609.5,337.5 609.8,342.8 610.0,336.6 610.2,342.7 610.5,336.7 610.8,343.4 611.0,337.0 611.2,343.2 611.5,336.5 611.8,343.1 612.0,337.7 612.2,341.9 612.5,338.2 612.8,342.6 613.0,337.6 613.2,342.4 613.5,337.2 613.8,341.8 614.0,337.4 614.2,341.9" fill="none" stroke="#e8a010" stroke-width="0.7"/><polyline points="238.0,310.8 238.2,321.9 238.5,311.9 238.8,322.6 239.0,307.8 239.2,323.3 239.5,309.9 239.8,324.0 240.0,310.9 240.2,323.5 240.5,308.4 240.8,323.2 241.0,310.1 241.2,324.3 241.5,310.8 241.8,322.8 242.0,308.4 242.2,322.4 242.5,311.2 242.8,325.0 243.0,308.6 243.2,321.8 243.5,310.0 243.8,325.7 244.0,310.3 244.2,321.1 244.5,309.4 244.8,322.2 245.0,311.9 245.2,322.5 245.5,309.4 245.8,321.0 246.0,311.6 246.2,321.7 246.5,311.6 246.8,323.2 247.0,309.9 247.2,321.3 247.5,309.7 247.8,323.9 248.0,308.5 248.2,323.5 248.5,304.1 248.8,323.7 249.0,309.7 249.2,322.5 249.5,310.9 249.8,324.0 250.0,311.2 250.2,324.4 250.5,309.0 250.8,322.4 251.0,310.9 251.2,324.5 251.5,309.2 251.8,322.3 252.0,309.7 252.2,321.6 252.5,311.9 252.8,323.2 253.0,312.6 253.2,320.5 253.5,311.3 253.8,322.6 254.0,311.6 254.2,320.4 254.5,311.4 254.8,320.1 255.0,311.4 255.2,320.8 255.5,311.5 255.8,321.7 256.0,312.9 256.2,320.0 256.5,311.7 256.8,320.1 257.0,313.1 257.2,320.3 257.5,312.3 257.8,320.2 258.0,310.0 258.2,321.7 258.5,312.4 258.8,320.5 259.0,313.7 259.2,320.4 259.5,312.6 259.8,320.4 260.0,313.2 260.2,319.9 260.5,313.1 260.8,319.6 261.0,312.8 261.2,320.0 261.5,314.2 261.8,319.7 262.0,313.7 262.2,318.8 262.5,314.1 262.8,318.7 263.0,313.7 263.2,318.6 263.5,313.3 263.8,318.6 264.0,313.0 264.2,320.0 264.5,313.8 264.8,319.0 265.0,313.9 265.2,319.0 265.5,312.5 265.8,319.5 266.0,313.1 266.2,319.6 266.5,313.5 266.8,320.0 267.0,312.2 267.2,319.2 267.5,313.7 267.8,319.6 268.0,313.5 268.2,319.3 268.5,312.5 268.8,320.8 269.0,312.4 269.2,320.5 269.5,313.9 269.8,319.5 270.0,313.4 270.2,319.4 270.5,313.9 270.8,319.2 271.0,313.5 271.2,319.3 271.5,313.9 271.8,318.9 272.0,313.3 272.2,319.6 272.5,313.8 272.8,319.4 273.0,312.8 273.2,320.0 273.5,313.5 273.8,319.0 274.0,312.4 274.2,319.7 274.5,313.5 274.8,320.6 275.0,313.4 275.2,320.2 275.5,313.0 275.8,319.8 276.0,311.9 276.2,320.6 276.5,312.9 276.8,321.3 277.0,312.4 277.2,320.7 277.5,309.1 277.8,322.7 278.0,311.3 278.2,321.3 278.5,312.7 278.8,320.0 279.0,312.9 279.2,320.3 279.5,312.3 279.8,321.7 280.0,312.0 280.2,320.8 280.5,313.2 280.8,320.5 281.0,313.2 281.2,320.7 281.5,311.6 281.8,321.3 282.0,313.4 282.2,321.1 282.5,312.0 282.8,321.7 283.0,311.1 283.2,320.0 283.5,311.3 283.8,322.2 284.0,310.6 284.2,321.4 284.5,312.3 284.8,320.4 285.0,312.1 285.2,322.5 285.5,311.8 285.8,320.5 286.0,310.1 286.2,322.9 286.5,311.2 286.8,320.9 287.0,311.3 287.2,322.4 287.5,312.5 287.8,321.1 288.0,312.3 288.2,321.1 288.5,311.7 288.8,320.1 289.0,312.7 289.2,321.1 289.5,313.3 289.8,320.1 290.0,312.7 290.2,323.1 290.5,313.1 290.8,320.3 291.0,311.9 291.2,321.7 291.5,312.5 291.8,324.1 292.0,310.8 292.2,320.1 292.5,312.0 292.8,321.4 293.0,311.0 293.2,322.0 293.5,311.2 293.8,321.7 294.0,310.8 294.2,322.8 294.5,310.2 294.8,320.5 295.0,311.4 295.2,321.2 295.5,310.8 295.8,320.6 296.0,311.1 296.2,320.8 296.5,312.8 296.8,322.3 297.0,312.7 297.2,321.4 297.5,312.3 297.8,319.8 298.0,311.4 298.2,321.6 298.5,313.1 298.8,320.3 299.0,312.4 299.2,319.9 299.5,313.0 299.8,321.4 300.0,312.4 300.2,320.8 300.5,311.6 300.8,320.0 301.0,312.3 301.2,321.3 301.5,311.7 301.8,321.5 302.0,311.7 302.2,320.9 302.5,311.3 302.8,321.6 303.0,311.7 303.2,321.2 303.5,311.4 303.8,321.2 304.0,313.1 304.2,320.5 304.5,311.1 304.8,321.3 305.0,313.3 305.2,321.5 305.5,312.5 305.8,321.0 306.0,313.4 306.2,321.2 306.5,313.0 306.8,320.7 307.0,312.5 307.2,320.6 307.5,313.1 307.8,320.2 308.0,313.5 308.2,321.1 308.5,312.9 308.8,320.2 309.0,313.0 309.2,320.1 309.5,313.7 309.8,318.9 310.0,314.0 310.2,320.3 310.5,312.8 310.8,319.3 311.0,312.8 311.2,320.6 311.5,313.0 311.8,319.8 312.0,313.4 312.2,320.4 312.5,311.0 312.8,319.5 313.0,313.0 313.2,320.2 313.5,313.0 313.8,320.5 314.0,312.6 314.2,319.6 314.5,313.9 314.8,319.5 315.0,313.8 315.2,319.5 315.5,313.3 315.8,319.1 316.0,314.3 316.2,319.8 316.5,313.2 316.8,318.8 317.0,313.2 317.2,319.5 317.5,313.1 317.8,318.8 318.0,313.5 318.2,319.3 318.5,313.3 318.8,319.0 319.0,313.6 319.2,320.2 319.5,313.0 319.8,318.9 320.0,312.7 320.2,319.9 320.5,313.4 320.8,320.2 321.0,313.4 321.2,320.5 321.5,311.5 321.8,321.2 322.0,312.7 322.2,321.7 322.5,312.0 322.8,322.2 323.0,312.5 323.2,321.9 323.5,312.5 323.8,321.4 324.0,311.2 324.2,321.3 324.5,312.7 324.8,320.0 325.0,311.4 325.2,321.5 325.5,311.8 325.8,320.3 326.0,311.5 326.2,320.7 326.5,312.7 326.8,321.7 327.0,312.2 327.2,321.8 327.5,312.3 327.8,322.7 328.0,312.1 328.2,321.5 328.5,310.5 328.8,321.4 329.0,311.9 329.2,323.0 329.5,309.9 329.8,321.1 330.0,309.5 330.2,323.6 330.5,309.9 330.8,322.2 331.0,310.3 331.2,320.8 331.5,312.3 331.8,323.0 332.0,311.8 332.2,322.5 332.5,312.6 332.8,321.7 333.0,313.2 333.2,320.3 333.5,311.7 333.8,320.3 334.0,313.7 334.2,320.0 334.5,312.0 334.8,319.6 335.0,313.9 335.2,320.0 335.5,313.6 335.8,319.7 336.0,313.3 336.2,319.8 336.5,314.1 336.8,319.3 337.0,313.2 337.2,319.4 337.5,312.6 337.8,320.5 338.0,312.3 338.2,320.4 338.5,313.4 338.8,319.8 339.0,312.2 339.2,319.8 339.5,312.8 339.8,320.1 340.0,312.5 340.2,320.6 340.5,313.7 340.8,320.2 341.0,312.9 341.2,320.0 341.5,312.6 341.8,319.2 342.0,314.2 342.2,320.1 342.5,313.1 342.8,319.7 343.0,312.7 343.2,319.3 343.5,312.4 343.8,320.6 344.0,313.0 344.2,320.3 344.5,313.1 344.8,320.6 345.0,312.7 345.2,320.5 345.5,310.9 345.8,320.7 346.0,310.0 346.2,322.2 346.5,308.7 346.8,322.3 347.0,308.8 347.2,323.8 347.5,308.8 347.8,324.1 348.0,305.9 348.2,322.7 348.5,309.8 348.8,325.4 349.0,309.5 349.2,325.1 349.5,306.4 349.8,325.5 350.0,306.7 350.2,325.5 350.5,309.5 350.8,323.9 351.0,307.8 351.2,323.3 351.5,305.4 351.8,325.0 352.0,308.7 352.2,322.1 352.5,310.9 352.8,323.8 353.0,308.8 353.2,324.3 353.5,309.6 353.8,321.5 354.0,310.4 354.2,323.2 354.5,308.2 354.8,321.9 355.0,310.1 355.2,322.3 355.5,309.6 355.8,323.5 356.0,310.7 356.2,328.1 356.5,310.9 356.8,324.5 357.0,309.4 357.2,322.4 357.5,309.3 357.8,326.9 358.0,309.2 358.2,321.9 358.5,309.9 358.8,322.4 359.0,311.4 359.2,321.0 359.5,312.3 359.8,320.3 360.0,313.0 360.2,319.7 360.5,313.5 360.8,319.4 361.0,313.3 361.2,319.2 361.5,313.5 361.8,319.5 362.0,313.4 362.2,319.7 362.5,313.6 362.8,318.6 363.0,314.1 363.2,319.8 363.5,311.9 363.8,319.1 364.0,312.9 364.2,319.0 364.5,314.0 364.8,320.4 365.0,312.4 365.2,320.5 365.5,312.4 365.8,319.1 366.0,313.7 366.2,320.8 366.5,313.1 366.8,320.9 367.0,311.9 367.2,320.1 367.5,311.7 367.8,320.7 368.0,311.3 368.2,320.8 368.5,311.9 368.8,320.3 369.0,311.2 369.2,320.9 369.5,312.8 369.8,319.7 370.0,312.6 370.2,320.4 370.5,312.3 370.8,320.8 371.0,312.3 371.2,321.4 371.5,312.1 371.8,320.4 372.0,310.7 372.2,321.9 372.5,311.6 372.8,322.7 373.0,310.3 373.2,322.0 373.5,310.6 373.8,322.3 374.0,311.0 374.2,322.8 374.5,309.4 374.8,325.4 375.0,311.4 375.2,321.7 375.5,309.0 375.8,323.1 376.0,311.8 376.2,322.1 376.5,311.1 376.8,324.5 377.0,309.4 377.2,322.2 377.5,311.0 377.8,322.6 378.0,310.4 378.2,323.2 378.5,312.5 378.8,321.0 379.0,312.3 379.2,321.2 379.5,311.4 379.8,322.4 380.0,311.4 380.2,321.9 380.5,311.7 380.8,320.8 381.0,312.0 381.2,322.2 381.5,312.2 381.8,321.6 382.0,311.5 382.2,320.2 382.5,311.2 382.8,322.4 383.0,312.1 383.2,322.3 383.5,311.1 383.8,321.8 384.0,312.0 384.2,321.8 384.5,311.3 384.8,320.2 385.0,312.6 385.2,320.7 385.5,313.4 385.8,321.3 386.0,312.9 386.2,321.4 386.5,314.0 386.8,319.2 387.0,312.0 387.2,318.8 387.5,313.2 387.8,319.9 388.0,313.0 388.2,319.0 388.5,313.6 388.8,319.6 389.0,313.9 389.2,319.2 389.5,314.1 389.8,319.2 390.0,313.1 390.2,320.0 390.5,313.4 390.8,319.0 391.0,314.1 391.2,319.6 391.5,313.7 391.8,319.2 392.0,313.0 392.2,320.7 392.5,313.7 392.8,320.0 393.0,312.7 393.2,319.3 393.5,312.7 393.8,319.3 394.0,312.5 394.2,320.5 394.5,312.7 394.8,320.0 395.0,313.4 395.2,319.7 395.5,311.6 395.8,321.1 396.0,312.2 396.2,320.7 396.5,312.2 396.8,320.5 397.0,310.8 397.2,322.2 397.5,311.8 397.8,321.7 398.0,312.2 398.2,322.1 398.5,309.3 398.8,321.7 399.0,311.9 399.2,321.6 399.5,311.1 399.8,321.8 400.0,310.2 400.2,322.7 400.5,308.8 400.8,324.0 401.0,309.5 401.2,324.4 401.5,308.8 401.8,324.9 402.0,307.5 402.2,322.4 402.5,309.9 402.8,323.7 403.0,308.4 403.2,325.9 403.5,308.1 403.8,325.1 404.0,309.3 404.2,324.2 404.5,310.1 404.8,323.0 405.0,310.1 405.2,322.0 405.5,308.5 405.8,323.6 406.0,306.4 406.2,323.5 406.5,309.8 406.8,323.2 407.0,308.8 407.2,321.8 407.5,311.4 407.8,323.3 408.0,310.9 408.2,324.8 408.5,310.1 408.8,325.0 409.0,308.5 409.2,324.1 409.5,310.5 409.8,325.6 410.0,309.4 410.2,322.7 410.5,307.8 410.8,325.7 411.0,309.8 411.2,322.7 411.5,310.4 411.8,328.2 412.0,308.1 412.2,324.8 412.5,310.9 412.8,322.6 413.0,310.4 413.2,323.7 413.5,311.1 413.8,324.2 414.0,311.1 414.2,321.4 414.5,311.7 414.8,322.8 415.0,312.7 415.2,322.3 415.5,310.7 415.8,321.3 416.0,312.9 416.2,321.9 416.5,312.1 416.8,321.1 417.0,311.9 417.2,320.3 417.5,312.5 417.8,319.9 418.0,312.7 418.2,321.2 418.5,312.0 418.8,320.7 419.0,312.5 419.2,319.4 419.5,313.1 419.8,319.6 420.0,313.3 420.2,320.9 420.5,312.7 420.8,320.5 421.0,313.7 421.2,320.2 421.5,313.0 421.8,319.5 422.0,312.9 422.2,319.8 422.5,312.6 422.8,320.2 423.0,313.6 423.2,319.4 423.5,313.0 423.8,319.0 424.0,313.9 424.2,318.9 424.5,312.6 424.8,319.3 425.0,311.8 425.2,320.2 425.5,309.9 425.8,321.4 426.0,312.1 426.2,320.3 426.5,309.5 426.8,322.1 427.0,309.5 427.2,323.2 427.5,309.4 427.8,323.4 428.0,309.0 428.2,323.3 428.5,310.8 428.8,323.1 429.0,310.2 429.2,325.5 429.5,308.8 429.8,324.2 430.0,307.2 430.2,322.4 430.5,307.3 430.8,323.5 431.0,307.5 431.2,323.8 431.5,310.4 431.8,322.7 432.0,309.0 432.2,324.6 432.5,310.5 432.8,323.3 433.0,310.8 433.2,324.0 433.5,310.9 433.8,322.7 434.0,309.8 434.2,321.6 434.5,308.2 434.8,322.8 435.0,310.3 435.2,324.3 435.5,310.5 435.8,323.9 436.0,307.2 436.2,324.7 436.5,310.3 436.8,324.0 437.0,306.8 437.2,324.3 437.5,309.6 437.8,322.7 438.0,308.3 438.2,325.3 438.5,308.4 438.8,324.2 439.0,308.9 439.2,325.0 439.5,310.0 439.8,325.0 440.0,309.9 440.2,323.7 440.5,309.5 440.8,321.1 441.0,312.1 441.2,322.5 441.5,312.6 441.8,320.7 442.0,311.4 442.2,320.9 442.5,313.2 442.8,322.0 443.0,312.7 443.2,320.7 443.5,311.2 443.8,319.7 444.0,312.8 444.2,320.2 444.5,313.5 444.8,320.0 445.0,314.0 445.2,320.4 445.5,312.7 445.8,319.4 446.0,313.8 446.2,319.9 446.5,312.0 446.8,320.6 447.0,310.4 447.2,320.5 447.5,311.9 447.8,321.6 448.0,308.4 448.2,323.9 448.5,308.6 448.8,322.3 449.0,310.1 449.2,321.6 449.5,309.7 449.8,324.4 450.0,310.1 450.2,322.8 450.5,310.3 450.8,322.3 451.0,309.9 451.2,321.7 451.5,308.1 451.8,324.4 452.0,308.4 452.2,323.0 452.5,307.6 452.8,324.6 453.0,308.0 453.2,323.1 453.5,306.4 453.8,325.0 454.0,309.5 454.2,325.6 454.5,308.2 454.8,324.7 455.0,308.1 455.2,325.0 455.5,308.1 455.8,325.0 456.0,308.9 456.2,327.7 456.5,307.5 456.8,326.8 457.0,305.7 457.2,325.0 457.5,307.9 457.8,324.2 458.0,307.1 458.2,324.0 458.5,310.2 458.8,325.2 459.0,310.3 459.2,325.4 459.5,309.0 459.8,325.8 460.0,309.8 460.2,322.1 460.5,309.4 460.8,323.6 461.0,310.4 461.2,321.7 461.5,310.6 461.8,327.6 462.0,310.8 462.2,322.6 462.5,311.5 462.8,321.7 463.0,309.8 463.2,321.8 463.5,308.7 463.8,322.2 464.0,310.9 464.2,321.6 464.5,311.7 464.8,322.7 465.0,310.4 465.2,322.8 465.5,311.6 465.8,321.5 466.0,312.4 466.2,320.3 466.5,313.8 466.8,320.6 467.0,312.7 467.2,319.1 467.5,313.3 467.8,319.7 468.0,313.5 468.2,320.0 468.5,312.9 468.8,319.6 469.0,313.6 469.2,319.7 469.5,314.3 469.8,319.1 470.0,313.4 470.2,319.6 470.5,313.7 470.8,318.7 471.0,314.0 471.2,319.5 471.5,313.8 471.8,319.2 472.0,312.6 472.2,319.0 472.5,310.8 472.8,319.4 473.0,313.6 473.2,320.6 473.5,312.5 473.8,320.4 474.0,312.8 474.2,320.3 474.5,312.2 474.8,319.7 475.0,312.8 475.2,320.1 475.5,312.8 475.8,319.9 476.0,313.6 476.2,319.8 476.5,313.8 476.8,320.2 477.0,312.7 477.2,319.9 477.5,313.7 477.8,319.5 478.0,312.2 478.2,320.7 478.5,312.6 478.8,320.7 479.0,312.3 479.2,319.7 479.5,312.0 479.8,319.4 480.0,312.6 480.2,321.7 480.5,312.2 480.8,319.8 481.0,310.9 481.2,321.2 481.5,311.0 481.8,321.9 482.0,311.3 482.2,322.7 482.5,311.4 482.8,322.7 483.0,310.3 483.2,321.3 483.5,310.8 483.8,323.1 484.0,310.7 484.2,320.7 484.5,310.5 484.8,321.6 485.0,310.9 485.2,322.3 485.5,312.8 485.8,321.3 486.0,311.2 486.2,322.7 486.5,312.9 486.8,322.2 487.0,311.6 487.2,321.3 487.5,312.1 487.8,320.7 488.0,312.6 488.2,321.5 488.5,311.5 488.8,320.4 489.0,312.4 489.2,321.5 489.5,310.9 489.8,321.3 490.0,311.2 490.2,321.8 490.5,310.6 490.8,323.0 491.0,309.7 491.2,321.3 491.5,310.0 491.8,321.4 492.0,309.2 492.2,322.4 492.5,309.4 492.8,322.5 493.0,311.4 493.2,322.0 493.5,311.8 493.8,321.9 494.0,309.8 494.2,323.4 494.5,309.7 494.8,322.0 495.0,309.6 495.2,321.4 495.5,312.4 495.8,321.4 496.0,310.6 496.2,321.7 496.5,311.5 496.8,321.7 497.0,311.5 497.2,322.4 497.5,310.1 497.8,323.2 498.0,310.1 498.2,325.1 498.5,312.0 498.8,321.3 499.0,309.6 499.2,322.4 499.5,309.6 499.8,322.9 500.0,309.3 500.2,322.4 500.5,309.8 500.8,322.3 501.0,309.2 501.2,323.0 501.5,310.5 501.8,321.4 502.0,308.9 502.2,322.7 502.5,311.5 502.8,326.6 503.0,311.4 503.2,322.8 503.5,310.3 503.8,323.0 504.0,310.3 504.2,322.0 504.5,312.3 504.8,322.6 505.0,311.5 505.2,320.8 505.5,312.3 505.8,321.2 506.0,312.3 506.2,321.6 506.5,310.2 506.8,322.7 507.0,310.0 507.2,322.8 507.5,309.7 507.8,322.5 508.0,311.0 508.2,322.5 508.5,310.0 508.8,323.7 509.0,310.3 509.2,322.8 509.5,311.1 509.8,322.2 510.0,311.6 510.2,321.2 510.5,311.4 510.8,323.0 511.0,311.6 511.2,322.4 511.5,312.2 511.8,321.9 512.0,311.7 512.2,320.9 512.5,312.4 512.8,320.7 513.0,312.7 513.2,322.2 513.5,311.8 513.8,321.1 514.0,312.8 514.2,320.0 514.5,311.1 514.8,321.9 515.0,313.0 515.2,320.1 515.5,311.5 515.8,322.3 516.0,311.9 516.2,321.5 516.5,312.0 516.8,321.4 517.0,311.7 517.2,320.7 517.5,312.7 517.8,322.0 518.0,312.7 518.2,320.9 518.5,312.6 518.8,321.8 519.0,310.6 519.2,321.5 519.5,311.6 519.8,320.3 520.0,312.7 520.2,321.6 520.5,313.2 520.8,320.3 521.0,313.5 521.2,320.5 521.5,312.5 521.8,319.9 522.0,312.4 522.2,319.9 522.5,313.7 522.8,319.3 523.0,313.3 523.2,318.8 523.5,314.3 523.8,319.2 524.0,313.9 524.2,318.6 524.5,314.1 524.8,319.4 525.0,313.1 525.2,319.7 525.5,312.4 525.8,319.9 526.0,313.1 526.2,322.2 526.5,313.5 526.8,319.5 527.0,313.4 527.2,320.3 527.5,313.3 527.8,320.7 528.0,312.0 528.2,320.6 528.5,313.2 528.8,320.7 529.0,311.7 529.2,320.2 529.5,313.3 529.8,319.6 530.0,313.4 530.2,320.1 530.5,313.3 530.8,319.8 531.0,314.0 531.2,318.9 531.5,313.1 531.8,319.8 532.0,313.7 532.2,319.9 532.5,313.2 532.8,319.6 533.0,313.3 533.2,319.2 533.5,312.9 533.8,319.4 534.0,313.1 534.2,320.0 534.5,312.8 534.8,320.0 535.0,313.8 535.2,319.5 535.5,312.9 535.8,320.1 536.0,313.8 536.2,321.7 536.5,313.1 536.8,321.4 537.0,313.0 537.2,319.4 537.5,313.3 537.8,319.4 538.0,312.2 538.2,320.5 538.5,313.5 538.8,320.3 539.0,313.9 539.2,318.9 539.5,312.7 539.8,319.4 540.0,313.8 540.2,320.1 540.5,314.2 540.8,319.2 541.0,313.5 541.2,320.0 541.5,314.2 541.8,318.8 542.0,312.6 542.2,319.3 542.5,313.1 542.8,322.1 543.0,313.1 543.2,320.1 543.5,312.3 543.8,319.5 544.0,312.7 544.2,320.1 544.5,313.3 544.8,320.9 545.0,311.1 545.2,321.9 545.5,313.0 545.8,321.1 546.0,311.5 546.2,320.1 546.5,312.1 546.8,321.6 547.0,312.1 547.2,321.2 547.5,312.8 547.8,322.0 548.0,312.5 548.2,321.8 548.5,311.6 548.8,320.8 549.0,311.7 549.2,319.8 549.5,311.7 549.8,319.7 550.0,313.2 550.2,319.9 550.5,311.4 550.8,319.8 551.0,313.3 551.2,320.0 551.5,313.3 551.8,319.8 552.0,311.2 552.2,320.1 552.5,311.6 552.8,320.2 553.0,312.3 553.2,320.8 553.5,311.5 553.8,320.8 554.0,310.7 554.2,322.5 554.5,312.0 554.8,320.3 555.0,312.4 555.2,322.2 555.5,311.0 555.8,321.7 556.0,310.8 556.2,321.9 556.5,312.5 556.8,321.0 557.0,311.7 557.2,320.6 557.5,311.9 557.8,321.2 558.0,311.6 558.2,320.7 558.5,313.3 558.8,322.6 559.0,312.6 559.2,319.9 559.5,312.3 559.8,319.8 560.0,313.2 560.2,320.7 560.5,313.4 560.8,320.3 561.0,312.1 561.2,320.2 561.5,313.3 561.8,320.7 562.0,312.3 562.2,320.2 562.5,311.5 562.8,322.7 563.0,313.2 563.2,320.6 563.5,312.7 563.8,320.5 564.0,312.6 564.2,320.2 564.5,310.0 564.8,320.5 565.0,313.2 565.2,320.2 565.5,313.4 565.8,319.7 566.0,312.7 566.2,319.4 566.5,313.7 566.8,319.3 567.0,313.3 567.2,319.5 567.5,314.3 567.8,319.4 568.0,312.7 568.2,320.7 568.5,313.0 568.8,318.8 569.0,313.4 569.2,319.5 569.5,313.0 569.8,319.5 570.0,313.7 570.2,320.1 570.5,313.3 570.8,319.6 571.0,313.0 571.2,319.3 571.5,313.4 571.8,319.2 572.0,313.3 572.2,319.6 572.5,312.6 572.8,319.7 573.0,313.1 573.2,319.7 573.5,313.4 573.8,320.0 574.0,312.7 574.2,319.7 574.5,313.2 574.8,320.4 575.0,313.4 575.2,319.4 575.5,312.9 575.8,318.9 576.0,313.1 576.2,319.3 576.5,313.7 576.8,319.1 577.0,313.5 577.2,319.6 577.5,313.9 577.8,319.3 578.0,314.0 578.2,319.3 578.5,313.4 578.8,319.9 579.0,312.9 579.2,320.3 579.5,313.3 579.8,319.5 580.0,312.7 580.2,320.0 580.5,310.8 580.8,321.5 581.0,310.8 581.2,325.2 581.5,309.7 581.8,322.8 582.0,310.2 582.2,323.2 582.5,310.7 582.8,321.1 583.0,310.7 583.2,324.5 583.5,309.9 583.8,322.2 584.0,311.1 584.2,321.6 584.5,311.9 584.8,321.8 585.0,310.8 585.2,322.7 585.5,309.9 585.8,323.4 586.0,310.2 586.2,323.6 586.5,310.6 586.8,323.8 587.0,310.1 587.2,323.8 587.5,309.1 587.8,324.4 588.0,308.8 588.2,321.8 588.5,307.9 588.8,325.2 589.0,308.5 589.2,322.4 589.5,306.7 589.8,324.5 590.0,306.7 590.2,323.2 590.5,307.5 590.8,323.5 591.0,306.6 591.2,323.8 591.5,309.8 591.8,326.8 592.0,310.1 592.2,322.9 592.5,309.1 592.8,325.3 593.0,309.1 593.2,326.3 593.5,307.3 593.8,325.9 594.0,309.8 594.2,322.7 594.5,309.9 594.8,322.7 595.0,311.1 595.2,326.3 595.5,308.6 595.8,322.1 596.0,310.8 596.2,324.7 596.5,307.6 596.8,322.1 597.0,309.4 597.2,322.8 597.5,309.9 597.8,325.9 598.0,309.6 598.2,326.7 598.5,310.1 598.8,323.7 599.0,310.1 599.2,323.5 599.5,307.7 599.8,323.8 600.0,307.3 600.2,325.7 600.5,309.9 600.8,326.4 601.0,303.1 601.2,325.7 601.5,309.7 601.8,325.0 602.0,309.5 602.2,323.9 602.5,309.3 602.8,322.4 603.0,309.5 603.2,323.9 603.5,308.8 603.8,322.2 604.0,309.2 604.2,323.9 604.5,309.8 604.8,322.0 605.0,311.3 605.2,323.7 605.5,311.4 605.8,322.6 606.0,309.9 606.2,322.3 606.5,309.2 606.8,322.8 607.0,310.8 607.2,321.5 607.5,310.1 607.8,323.7 608.0,310.9 608.2,324.0 608.5,310.4 608.8,324.0 609.0,310.5 609.2,323.5 609.5,311.5 609.8,322.7 610.0,310.1 610.2,321.1 610.5,311.7 610.8,322.4 611.0,313.3 611.2,320.6 611.5,312.5 611.8,319.8 612.0,313.2 612.2,319.9 612.5,314.3 612.8,319.4 613.0,314.2 613.2,319.6 613.5,313.2 613.8,318.7 614.0,313.9 614.2,319.9" fill="none" stroke="#12a070" stroke-width="0.7"/><line x1="240.20" y1="293.00" x2="240.20" y2="386.00" stroke="#78c8a8" stroke-width="2" /><line x1="244.70" y1="293.00" x2="244.70" y2="370.00" stroke="#78c8a8" stroke-width="1.1" /><line x1="244.70" y1="370.00" x2="244.70" y2="386.00" stroke="#f4c060" stroke-width="1.1" /><line x1="528.80" y1="292.00" x2="528.80" y2="387.00" stroke="#14a070" stroke-width="1.1" /><line x1="608.70" y1="292.00" x2="608.70" y2="370.00" stroke="#14a070" stroke-width="1.1" /><line x1="612.90" y1="292.00" x2="612.90" y2="387.00" stroke="#14a070" stroke-width="1.1" /><text x="236.5" y="254.5" text-anchor="end" font-size="6.5" fill="#222">40</text><text x="236.5" y="297.0" text-anchor="end" font-size="6.5" fill="#222">20</text><text x="236.5" y="342.0" text-anchor="end" font-size="6.5" fill="#222">0</text><text x="236.5" y="388.1" text-anchor="end" font-size="6.5" fill="#222">-20</text><text x="236.5" y="428.5" text-anchor="end" font-size="6.5" fill="#222">-40</text><text x="239.5" y="437.5" text-anchor="middle" font-size="6.3" fill="#222">0</text><text x="341.7" y="437.5" text-anchor="middle" font-size="6.3" fill="#222">600</text><text x="446" y="437.5" text-anchor="middle" font-size="6.3" fill="#222">1200</text><text x="550.2" y="437.5" text-anchor="middle" font-size="6.3" fill="#222">1800</text><text x="647" y="437.5" text-anchor="middle" font-size="6.3" fill="#222">2400</text><line x1="284.70" y1="457.00" x2="284.70" y2="639.60" stroke="#f8dadd" stroke-width="0.8" /><line x1="336.80" y1="457.00" x2="336.80" y2="639.60" stroke="#dedef8" stroke-width="0.8" /><line x1="388.90" y1="457.00" x2="388.90" y2="639.60" stroke="#f8dadd" stroke-width="0.8" /><line x1="441.00" y1="457.00" x2="441.00" y2="639.60" stroke="#dedef8" stroke-width="0.8" /><line x1="493.10" y1="457.00" x2="493.10" y2="639.60" stroke="#f8dadd" stroke-width="0.8" /><line x1="545.20" y1="457.00" x2="545.20" y2="639.60" stroke="#dedef8" stroke-width="0.8" /><line x1="597.30" y1="457.00" x2="597.30" y2="639.60" stroke="#f8dadd" stroke-width="0.8" /><line x1="232.60" y1="502.65" x2="648.40" y2="502.65" stroke="#dcdce8" stroke-width="0.9" /><line x1="232.60" y1="548.30" x2="648.40" y2="548.30" stroke="#dcdce8" stroke-width="0.9" /><line x1="232.60" y1="593.95" x2="648.40" y2="593.95" stroke="#dcdce8" stroke-width="0.9" /><line x1="232.60" y1="616.78" x2="648.40" y2="616.78" stroke="#e4e4ec" stroke-width="0.8" /><line x1="232.60" y1="457.00" x2="648.40" y2="457.00" stroke="#d8d8d8" stroke-width="1.2" /><line x1="648.40" y1="457.00" x2="648.40" y2="639.60" stroke="#d8d8d8" stroke-width="1.2" /><line x1="232.60" y1="457.00" x2="232.60" y2="641.60" stroke="#707070" stroke-width="1" /><line x1="231.60" y1="639.60" x2="648.40" y2="639.60" stroke="#707070" stroke-width="1" /><polyline points="233.6,479.7 233.8,480.8 234.1,479.5 234.3,481.1 234.6,479.6 234.8,480.8 235.1,479.6 235.3,481.2 235.6,479.6 235.8,481.1 236.1,479.3 236.3,480.8 236.6,479.4 236.8,481.0 237.1,479.5 237.3,481.3 237.6,479.6 237.8,480.7 238.1,479.1 238.3,480.9 238.6,479.6 238.8,480.9 239.1,479.5 239.3,481.3 239.6,479.6 239.8,480.8 240.1,479.4 240.3,481.0 240.6,479.1 240.8,481.2 241.1,479.5 241.3,480.8 241.6,479.2 241.8,481.3 242.1,479.7 242.3,481.1 242.6,479.2 242.8,481.1 243.1,479.6 243.3,481.2 243.6,479.3 243.8,480.8 244.1,479.3 244.3,480.8 244.6,479.7 244.8,480.9 245.1,479.5 245.3,480.9 245.6,479.3 245.8,481.2 246.1,479.1 246.3,481.3 246.6,479.1 246.8,481.2 247.1,479.5 247.3,480.8 247.6,479.3 247.8,481.0 248.1,479.3 248.3,480.8 248.6,479.6 248.8,481.3 249.1,479.3 249.3,481.1 249.6,479.6 249.8,480.9 250.1,479.2 250.3,481.1 250.6,479.1 250.8,480.8 251.1,479.4 251.3,481.2 251.6,479.4 251.8,481.2 252.1,479.4 252.3,480.8 252.6,479.6 252.8,481.3 253.1,479.6 253.3,480.8 253.6,479.5 253.8,481.1 254.1,479.2 254.3,481.0 254.6,479.4 254.8,481.2 255.1,479.5 255.3,480.9 255.6,479.3 255.8,481.1 256.1,479.7 256.4,480.8 256.6,479.6 256.9,481.1 257.1,479.3 257.4,481.3 257.6,479.2 257.9,480.8 258.1,479.2 258.4,481.3 258.6,479.5 258.9,480.7 259.1,479.5 259.4,480.9 259.6,479.6 259.9,480.7 260.1,479.6 260.4,481.2 260.6,479.7 260.9,481.1 261.1,479.6 261.4,480.8 261.6,479.2 261.9,480.9 262.1,479.6 262.4,481.0 262.6,479.3 262.9,481.0 263.1,479.2 263.4,480.9 263.6,479.4 263.9,481.1 264.1,479.4 264.4,481.1 264.6,479.4 264.9,480.8 265.1,479.6 265.4,481.2 265.6,479.2 265.9,481.3 266.1,479.3 266.4,481.1 266.6,479.6 266.9,481.2 267.1,479.6 267.4,481.0 267.6,479.6 267.9,480.9 268.1,479.5 268.4,481.0 268.6,479.2 268.9,481.0 269.1,479.5 269.4,481.2 269.6,479.2 269.9,481.2 270.1,479.7 270.4,481.1 270.6,479.1 270.9,480.9 271.1,479.5 271.4,481.3 271.6,479.4 271.9,481.0 272.1,479.1 272.4,481.0 272.6,479.5 272.9,480.9 273.1,479.3 273.4,481.3 273.6,479.3 273.9,481.4 274.1,479.5 274.4,481.1 274.6,479.0 274.9,481.3 275.1,479.1 275.4,481.7 275.6,479.2 275.9,481.1 276.1,479.4 276.4,481.4 276.6,479.1 276.9,481.5 277.1,479.3 277.4,481.1 277.6,478.9 277.9,481.9 278.1,478.9 278.4,482.2 278.6,478.6 278.9,481.6 279.1,478.3 279.4,481.5 279.6,478.5 279.9,482.2 280.1,478.5 280.4,481.6 280.6,479.1 280.9,481.9 281.1,478.9 281.4,481.7 281.6,478.5 281.9,482.4 282.1,478.4 282.4,481.8 282.6,478.2 282.9,481.5 283.1,478.8 283.4,481.9 283.6,478.6 283.9,481.4 284.1,478.9 284.4,482.0 284.6,479.1 284.9,481.8 285.1,479.3 285.4,482.0 285.6,478.7 285.9,481.3 286.1,478.5 286.4,481.7 286.6,479.4 286.9,481.2 287.1,479.0 287.4,481.8 287.6,479.4 287.9,480.9 288.1,479.2 288.4,480.9 288.6,479.2 288.9,481.3 289.1,479.2 289.4,481.0 289.6,479.5 289.9,481.5 290.1,479.2 290.4,481.3 290.6,479.1 290.9,481.4 291.1,478.8 291.4,481.6 291.6,478.9 291.9,481.2 292.1,479.4 292.4,481.0 292.6,478.7 292.9,481.0 293.1,479.0 293.4,481.7 293.6,479.2 293.9,481.3 294.1,479.1 294.4,481.8 294.6,478.8 294.9,481.7 295.1,479.4 295.4,481.6 295.6,479.0 295.9,481.3 296.1,478.7 296.4,481.7 296.6,478.6 296.9,481.7 297.1,478.6 297.4,481.4 297.6,478.9 297.9,481.7 298.1,479.0 298.4,481.1 298.6,478.9 298.9,481.8 299.1,478.6 299.4,481.1 299.6,479.1 299.9,481.2 300.1,479.1 300.4,481.9 300.6,479.0 300.9,481.3 301.1,479.1 301.4,481.5 301.6,478.6 301.9,481.4 302.1,479.1 302.4,481.4 302.6,478.9 302.9,482.2 303.1,479.0 303.4,482.1 303.6,479.0 303.9,482.2 304.1,478.8 304.4,482.3 304.6,478.6 304.9,481.4 305.1,479.0 305.4,482.3 305.6,478.4 305.9,481.9 306.1,478.7 306.4,482.1 306.6,478.6 306.9,481.3 307.1,478.5 307.4,481.5 307.6,478.3 307.9,481.8 308.1,478.4 308.4,481.2 308.6,478.5 308.9,481.8 309.1,478.4 309.4,482.0 309.6,478.8 309.9,481.7 310.1,478.6 310.4,481.3 310.6,478.8 310.9,481.8 311.1,478.8 311.4,481.6 311.6,478.5 311.9,482.0 312.1,479.1 312.4,481.1 312.6,478.8 312.9,481.2 313.1,478.5 313.4,481.5 313.6,478.9 313.9,481.8 314.1,478.6 314.4,481.1 314.6,479.0 314.9,481.1 315.1,479.0 315.4,481.1 315.6,478.6 315.9,481.3 316.1,479.1 316.4,481.8 316.6,478.7 316.9,481.3 317.1,479.0 317.4,481.6 317.6,479.3 317.9,481.1 318.1,478.6 318.4,481.1 318.6,478.7 318.9,481.7 319.1,478.8 319.4,481.3 319.6,478.5 319.9,481.8 320.1,479.3 320.4,482.0 320.6,478.6 320.9,481.4 321.1,479.1 321.4,481.2 321.6,478.3 321.9,482.1 322.1,478.9 322.4,481.4 322.6,479.2 322.9,481.6 323.1,478.9 323.4,481.2 323.6,479.0 323.9,482.0 324.1,479.3 324.4,481.5 324.6,478.9 324.9,481.2 325.1,479.4 325.4,481.0 325.6,479.3 325.9,481.8 326.1,478.8 326.4,481.5 326.6,478.8 326.9,481.1 327.1,479.4 327.4,481.5 327.6,479.1 327.9,481.5 328.1,479.4 328.4,481.1 328.6,479.1 328.9,481.4 329.1,479.5 329.4,480.9 329.6,479.6 329.9,481.1 330.1,479.1 330.4,481.1 330.6,479.6 330.9,481.2 331.1,479.3 331.4,480.8 331.6,479.1 331.9,481.1 332.1,479.4 332.4,480.9 332.6,479.6 332.9,481.0 333.1,479.5 333.4,480.9 333.6,479.3 333.9,481.1 334.1,479.1 334.4,481.3 334.6,479.4 334.9,481.1 335.1,479.5 335.4,481.0 335.6,479.4 335.9,481.3 336.1,479.7 336.4,481.0 336.6,479.5 336.9,481.2 337.1,479.1 337.4,481.0 337.6,479.7 337.9,481.1 338.1,479.3 338.4,481.1 338.6,479.2 338.9,481.0 339.1,479.4 339.4,481.2 339.6,479.7 339.9,480.8 340.1,479.3 340.4,481.3 340.6,479.1 340.9,480.9 341.1,479.1 341.4,480.9 341.6,479.4 341.9,480.8 342.1,479.3 342.4,480.9 342.6,479.3 342.9,481.3 343.1,479.6 343.4,481.1 343.6,479.3 343.9,480.9 344.1,479.7 344.4,481.3 344.6,479.3 344.9,481.1 345.1,479.6 345.4,481.2 345.6,479.5 345.9,481.0 346.1,479.4 346.4,481.0 346.6,479.1 346.9,481.0 347.1,479.3 347.4,481.2 347.6,479.1 347.9,480.8 348.1,479.5 348.4,481.3 348.6,479.3 348.9,480.9 349.1,479.2 349.4,480.8 349.6,479.6 349.9,480.7 350.1,479.3 350.4,481.0 350.6,479.5 350.9,481.0 351.1,479.6 351.4,481.1 351.6,479.2 351.9,480.9 352.1,479.2 352.4,480.7 352.6,479.4 352.9,480.8 353.1,479.6 353.4,481.0 353.6,479.7 353.9,480.7 354.1,479.6 354.4,480.9 354.6,479.2 354.9,480.9 355.1,479.6 355.4,481.2 355.6,479.2 355.9,481.3 356.1,479.7 356.4,480.8 356.6,479.4 356.9,481.3 357.1,479.4 357.4,481.2 357.6,479.6 357.9,481.0 358.1,479.3 358.4,480.8 358.6,479.4 358.9,481.2 359.1,479.2 359.4,481.1 359.6,479.2 359.9,481.3 360.1,479.3 360.4,480.8 360.6,479.6 360.9,480.7 361.1,479.1 361.4,481.0 361.6,479.3 361.9,481.2 362.1,479.3 362.4,480.9 362.6,479.3 362.9,480.7 363.1,479.5 363.4,480.9 363.6,479.2 363.9,481.1 364.1,479.3 364.4,481.0 364.6,479.5 364.9,481.0 365.1,479.7 365.4,480.9 365.6,479.1 365.9,481.2 366.1,479.5 366.4,481.1 366.6,479.1 366.9,480.9 367.1,479.4 367.4,481.2 367.6,479.5 367.9,481.5 368.1,479.6 368.4,481.5 368.6,479.0 368.9,481.2 369.1,479.2 369.4,481.7 369.6,478.8 369.9,481.1 370.1,479.1 370.4,481.1 370.6,478.7 370.9,481.5 371.1,479.0 371.4,481.8 371.6,479.0 371.9,481.2 372.1,478.4 372.4,482.1 372.6,478.4 372.9,481.7 373.1,478.5 373.4,482.1 373.6,479.3 373.9,481.4 374.1,479.0 374.4,481.9 374.6,479.0 374.9,481.8 375.1,479.1 375.4,482.0 375.6,479.0 375.9,481.6 376.1,478.8 376.4,481.7 376.6,478.9 376.9,481.1 377.1,479.1 377.4,481.4 377.6,479.4 377.9,481.7 378.1,479.2 378.4,481.7 378.6,479.2 378.9,481.7 379.1,478.9 379.4,481.2 379.6,478.9 379.9,480.9 380.1,479.4 380.4,481.4 380.6,479.2 380.9,481.3 381.1,478.9 381.4,481.3 381.6,479.0 381.9,481.6 382.1,478.7 382.4,481.0 382.6,478.7 382.9,481.6 383.1,479.3 383.4,481.0 383.6,479.3 383.9,481.0 384.1,478.9 384.4,481.9 384.6,479.0 384.9,481.2 385.1,479.3 385.4,481.9 385.6,478.9 385.9,481.2 386.1,478.6 386.4,481.4 386.6,478.5 386.9,481.5 387.1,479.2 387.4,481.1 387.6,479.4 387.9,481.7 388.1,479.2 388.4,481.6 388.6,478.7 388.9,481.3 389.1,479.0 389.4,481.5 389.6,479.0 389.9,481.2 390.1,479.4 390.4,481.1 390.6,479.5 390.9,481.4 391.1,479.1 391.4,481.4 391.6,479.3 391.9,481.3 392.1,479.2 392.4,481.4 392.6,479.2 392.9,481.2 393.1,479.2 393.4,480.9 393.6,479.6 393.9,481.3 394.1,479.2 394.4,481.1 394.6,479.1 394.9,480.8 395.1,479.2 395.4,481.0 395.6,479.6 395.9,480.8 396.1,479.7 396.4,480.8 396.6,479.2 396.9,481.0 397.1,479.7 397.4,481.0 397.6,479.1 397.9,481.2 398.1,479.5 398.4,481.0 398.6,479.5 398.9,480.8 399.1,479.3 399.4,480.7 399.6,479.4 399.9,481.3 400.1,479.2 400.4,481.1 400.6,479.2 400.9,481.3 401.1,479.5 401.4,481.3 401.6,479.2 401.9,481.0 402.1,479.6 402.4,481.0 402.6,479.4 402.9,481.3 403.1,479.6 403.4,481.1 403.6,479.2 403.9,481.1 404.1,479.5 404.4,481.2 404.6,479.5 404.9,481.2 405.1,479.2 405.4,481.0 405.6,479.7 405.9,480.9 406.1,479.6 406.4,480.8 406.6,479.5 406.9,481.1 407.1,479.2 407.4,480.8 407.6,479.2 407.9,480.8 408.1,479.2 408.4,480.8 408.6,479.4 408.9,481.4 409.1,478.9 409.4,480.8 409.6,479.3 409.9,481.5 410.1,479.4 410.4,481.2 410.6,479.3 410.9,481.1 411.1,479.0 411.4,481.1 411.6,479.3 411.9,481.9 412.1,478.7 412.4,481.5 412.6,479.3 412.9,481.1 413.1,478.8 413.4,481.6 413.6,479.4 413.9,482.0 414.1,479.0 414.4,481.3 414.6,478.8 414.9,481.9 415.1,479.1 415.4,481.5 415.6,479.4 415.9,481.4 416.1,478.6 416.4,481.9 416.6,479.1 416.9,481.8 417.1,478.4 417.4,481.3 417.6,478.6 417.9,481.3 418.1,478.4 418.4,481.9 418.6,478.4 418.9,481.5 419.1,478.6 419.4,481.8 419.6,478.7 419.9,481.1 420.1,478.6 420.4,481.9 420.6,478.7 420.9,482.0 421.1,478.4 421.4,481.7 421.6,479.1 421.9,481.5 422.1,479.3 422.4,481.2 422.6,478.6 422.9,481.3 423.1,479.2 423.4,481.6 423.6,479.0 423.9,480.9 424.1,479.3 424.4,481.2 424.6,479.5 424.9,481.3 425.1,479.2 425.4,481.3 425.6,479.6 425.9,480.8 426.1,479.5 426.4,481.0 426.6,479.5 426.9,481.0 427.1,479.5 427.4,480.7 427.6,479.2 427.9,481.0 428.1,479.2 428.4,481.0 428.6,479.2 428.9,481.1 429.1,479.4 429.4,481.3 429.6,479.5 429.9,481.3 430.1,479.3 430.4,481.3 430.6,479.6 430.9,481.0 431.1,479.5 431.4,481.2 431.6,479.1 431.9,481.2 432.1,479.5 432.4,480.8 432.6,479.1 432.9,480.8 433.1,479.2 433.4,481.1 433.6,479.2 433.9,481.2 434.1,479.5 434.4,481.0 434.6,479.4 434.9,481.2 435.1,479.2 435.4,481.4 435.6,479.2 435.9,481.0 436.1,479.5 436.4,481.1 436.6,479.1 436.9,481.3 437.1,479.5 437.4,481.0 437.6,479.0 437.9,481.5 438.1,478.8 438.4,481.0 438.6,478.9 438.9,481.3 439.1,479.0 439.4,481.5 439.6,479.1 439.9,481.4 440.1,478.6 440.4,480.9 440.6,479.0 440.9,481.8 441.1,478.7 441.4,481.1 441.6,478.8 441.9,481.7 442.1,479.2 442.4,481.3 442.6,479.3 442.9,481.7 443.1,479.4 443.4,481.4 443.6,478.8 443.9,481.6 444.1,479.0 444.4,481.1 444.6,478.9 444.9,481.4 445.1,479.3 445.4,481.0 445.6,479.4 445.9,481.0 446.1,479.3 446.4,481.0 446.6,479.0 446.9,480.7 447.1,479.3 447.4,481.0 447.6,479.0 447.9,481.4 448.1,479.2 448.4,481.2 448.6,479.4 448.9,481.3 449.1,479.4 449.4,481.4 449.6,479.1 449.9,481.0 450.1,479.4 450.4,481.2 450.6,479.2 450.9,481.5 451.1,479.0 451.4,481.0 451.6,479.1 451.9,481.4 452.1,478.5 452.4,481.9 452.6,478.8 452.9,481.9 453.1,479.3 453.4,481.2 453.6,479.3 453.9,481.2 454.1,479.2 454.4,481.5 454.6,478.7 454.9,481.2 455.1,479.2 455.4,481.3 455.6,478.8 455.9,481.2 456.1,478.9 456.4,481.0 456.6,479.2 456.9,481.2 457.1,479.2 457.4,481.3 457.6,479.6 457.9,480.9 458.1,479.6 458.4,481.2 458.6,479.4 458.9,481.0 459.1,479.7 459.4,481.2 459.6,479.1 459.9,480.7 460.1,479.0 460.4,481.0 460.6,479.6 460.9,480.8 461.1,479.1 461.4,481.3 461.6,479.3 461.9,481.4 462.1,479.6 462.4,481.5 462.6,479.4 462.9,481.0 463.1,479.3 463.4,481.1 463.6,478.8 463.9,481.3 464.1,479.2 464.4,481.5 464.6,479.2 464.9,481.1 465.1,479.3 465.4,481.3 465.6,478.9 465.9,481.6 466.1,479.6 466.4,481.1 466.6,479.1 466.9,481.2 467.1,479.1 467.4,481.4 467.6,479.6 467.9,481.2 468.1,479.5 468.4,481.2 468.6,479.6 468.9,480.8 469.1,479.2 469.4,481.1 469.6,479.3 469.9,481.0 470.1,479.5 470.4,480.7 470.6,479.1 470.9,481.2 471.1,479.2 471.4,480.7 471.6,479.7 471.9,481.0 472.1,479.6 472.4,481.1 472.6,479.5 472.9,481.2 473.1,479.6 473.4,481.0 473.6,479.5 473.9,480.8 474.1,479.5 474.4,480.8 474.6,479.5 474.9,481.0 475.1,479.5 475.4,481.1 475.6,479.2 475.9,481.0 476.1,479.6 476.4,481.0 476.6,479.6 476.9,481.2 477.1,479.7 477.4,480.9 477.6,479.1 477.9,481.0 478.1,479.5 478.4,480.7 478.6,479.6 478.9,481.2 479.1,479.7 479.4,481.1 479.6,479.6 479.9,481.2 480.1,479.6 480.4,480.8 480.6,479.6 480.9,481.3 481.1,479.7 481.4,481.0 481.6,479.2 481.9,481.1 482.1,479.7 482.4,481.1 482.6,479.5 482.9,480.8 483.1,479.6 483.4,480.8 483.6,479.4 483.9,481.2 484.1,479.2 484.4,481.1 484.6,479.4 484.9,481.2 485.1,479.6 485.4,481.3 485.6,479.1 485.9,481.0 486.1,479.3 486.4,481.1 486.6,479.3 486.9,481.1 487.1,479.3 487.4,481.1 487.6,479.4 487.9,480.8 488.1,479.5 488.4,480.9 488.6,479.3 488.9,480.8 489.1,479.3 489.4,481.0 489.6,479.1 489.9,481.0 490.1,479.3 490.4,480.8 490.6,479.6 490.9,481.2 491.1,479.2 491.4,480.8 491.6,479.5 491.9,481.2 492.1,479.7 492.4,481.1 492.6,479.3 492.9,481.3 493.1,479.1 493.4,481.2 493.6,479.6 493.9,481.2 494.1,479.6 494.4,480.9 494.6,479.2 494.9,481.0 495.1,479.4 495.4,481.2 495.6,479.2 495.9,480.9 496.1,479.2 496.4,481.3 496.6,479.3 496.9,480.8 497.1,479.4 497.4,481.0 497.6,479.5 497.9,481.1 498.1,479.6 498.4,480.8 498.6,479.1 498.9,480.9 499.1,479.6 499.4,481.2 499.6,479.2 499.9,481.0 500.1,479.4 500.4,480.7 500.6,479.7 500.9,481.2 501.1,479.1 501.4,481.1 501.6,479.3 501.9,480.9 502.1,479.5 502.4,481.1 502.6,479.2 502.9,480.7 503.1,479.6 503.4,480.7 503.6,479.3 503.9,481.0 504.1,479.7 504.4,481.0 504.6,479.1 504.9,481.2 505.1,479.3 505.4,481.1 505.6,479.6 505.9,481.0 506.1,479.4 506.4,481.3 506.6,479.7 506.9,480.7 507.1,479.7 507.4,480.7 507.6,479.5 507.9,481.1 508.1,479.2 508.4,481.2 508.6,479.6 508.9,481.0 509.1,479.3 509.4,480.9 509.6,479.5 509.9,480.8 510.1,479.4 510.4,480.8 510.6,479.0 510.9,481.2 511.1,479.0 511.4,480.8 511.6,479.6 511.9,481.2 512.1,478.9 512.4,481.1 512.6,479.4 512.9,481.1 513.1,479.6 513.4,481.0 513.6,479.5 513.9,480.9 514.1,478.8 514.4,481.4 514.6,478.8 514.9,481.2 515.1,479.1 515.4,481.2 515.6,479.1 515.9,481.6 516.1,478.9 516.4,481.1 516.6,479.2 516.9,481.5 517.1,479.0 517.4,481.5 517.6,479.4 517.9,481.2 518.1,479.0 518.4,481.8 518.6,478.5 518.9,481.1 519.1,479.0 519.4,481.2 519.6,479.0 519.9,481.5 520.1,478.7 520.4,481.5 520.6,478.9 520.9,481.5 521.1,479.3 521.4,481.1 521.6,479.0 521.9,481.0 522.1,479.2 522.4,481.4 522.6,478.8 522.9,481.7 523.1,479.1 523.4,481.0 523.6,479.1 523.9,481.4 524.1,479.4 524.4,481.5 524.6,479.4 524.9,481.3 525.1,478.9 525.4,481.4 525.6,479.1 525.9,481.0 526.1,479.3 526.4,481.4 526.6,479.3 526.9,480.9 527.1,479.4 527.4,480.8 527.6,479.0 527.9,481.0 528.1,479.3 528.4,480.8 528.6,479.2 528.9,480.9 529.1,479.5 529.4,481.3 529.6,479.3 529.9,481.2 530.1,479.4 530.4,480.8 530.6,479.4 530.9,481.1 531.1,478.9 531.4,481.4 531.6,479.2 531.9,481.3 532.1,479.0 532.4,481.4 532.6,478.9 532.9,481.1 533.1,479.2 533.4,481.1 533.6,479.2 533.9,481.6 534.1,479.1 534.4,480.9 534.6,478.8 534.9,481.2 535.1,478.9 535.4,481.7 535.6,478.7 535.9,481.4 536.1,479.5 536.4,481.7 536.6,479.4 536.9,481.4 537.1,479.5 537.4,481.0 537.6,478.8 537.9,481.5 538.1,479.0 538.4,481.0 538.6,479.3 538.9,481.1 539.1,478.9 539.4,481.0 539.6,479.1 539.9,481.5 540.1,479.5 540.4,481.1 540.6,479.4 540.9,481.2 541.1,479.4 541.4,481.5 541.6,479.4 541.9,481.4 542.1,479.4 542.4,481.1 542.6,479.2 542.9,481.2 543.1,479.2 543.4,480.9 543.6,479.4 543.9,480.8 544.1,479.5 544.4,481.0 544.6,479.1 544.9,481.3 545.1,479.5 545.4,481.2 545.6,479.1 545.9,481.1 546.1,479.2 546.4,481.0 546.6,479.2 546.9,481.1 547.1,479.4 547.4,481.0 547.6,479.3 547.9,481.0 548.1,479.4 548.4,480.7 548.6,479.3 548.9,480.8 549.1,479.6 549.4,481.2 549.6,479.2 549.9,481.2 550.1,479.4 550.4,480.8 550.6,479.5 550.9,480.8 551.1,479.4 551.4,480.8 551.6,479.4 551.9,481.2 552.1,479.1 552.4,480.8 552.6,479.3 552.9,481.2 553.1,479.1 553.4,481.0 553.6,479.2 553.9,480.8 554.1,479.5 554.4,481.1 554.6,479.2 554.9,480.8 555.1,479.2 555.4,481.2 555.6,479.7 555.9,481.1 556.1,479.5 556.4,481.2 556.6,479.5 556.9,481.2 557.1,479.3 557.4,480.9 557.6,479.4 557.9,481.0 558.1,479.5 558.4,481.2 558.6,479.6 558.9,481.2 559.1,479.1 559.4,480.9 559.6,479.3 559.9,481.1 560.1,479.2 560.4,480.8 560.6,479.2 560.9,481.1 561.1,479.3 561.4,481.0 561.6,479.4 561.9,480.7 562.1,479.6 562.4,481.1 562.6,479.2 562.9,481.2 563.1,479.6 563.4,480.9 563.6,479.4 563.9,481.0 564.1,479.2 564.4,481.1 564.6,479.2 564.9,481.2 565.1,479.2 565.4,481.2 565.6,479.1 565.9,480.8 566.1,479.4 566.4,481.2 566.6,479.5 566.9,480.9 567.1,479.7 567.4,481.1 567.6,479.2 567.9,480.8 568.1,479.6 568.4,480.8 568.6,479.2 568.9,480.8 569.1,479.2 569.4,481.3 569.6,479.3 569.9,481.3 570.1,479.2 570.4,481.0 570.6,479.4 570.9,480.8 571.1,479.2 571.4,481.3 571.6,479.6 571.9,480.8 572.1,479.6 572.4,481.1 572.6,479.6 572.9,480.7 573.1,479.1 573.4,480.8 573.6,479.4 573.9,481.1 574.1,479.1 574.4,480.7 574.6,479.6 574.9,480.9 575.1,479.3 575.4,481.2 575.6,479.2 575.9,481.2 576.1,479.3 576.4,480.8 576.6,479.2 576.9,481.1 577.1,479.3 577.4,480.9 577.6,479.5 577.9,481.3 578.1,479.4 578.4,481.0 578.6,479.6 578.9,480.9 579.1,479.6 579.4,481.1 579.6,479.3 579.9,480.9 580.1,479.5 580.4,481.0 580.6,479.5 580.9,481.2 581.1,479.1 581.4,480.9 581.6,479.2 581.9,481.0 582.1,479.1 582.4,480.9 582.6,479.2 582.9,481.1 583.1,479.1 583.4,480.8 583.6,479.5 583.9,481.1 584.1,479.1 584.4,481.2 584.6,479.5 584.9,481.1 585.1,479.1 585.4,481.3 585.6,479.3 585.9,481.1 586.1,479.5 586.4,481.1 586.6,479.4 586.9,481.3 587.1,479.0 587.4,481.4 587.6,479.5 587.9,481.4 588.1,479.6 588.4,481.4 588.6,479.4 588.9,480.9 589.1,479.4 589.4,481.2 589.6,479.0 589.9,480.9 590.1,479.5 590.4,481.1 590.6,479.0 590.9,481.1 591.1,479.3 591.4,481.0 591.6,479.3 591.9,481.8 592.1,478.9 592.4,481.0 592.6,478.7 592.9,481.3 593.1,478.8 593.4,481.4 593.6,479.3 593.9,481.5 594.1,479.1 594.4,481.9 594.6,479.0 594.9,481.2 595.1,479.0 595.4,481.1 595.6,479.3 595.9,481.6 596.1,478.5 596.4,481.7 596.6,479.0 596.9,481.1 597.1,479.2 597.4,481.8 597.6,478.7 597.9,481.6 598.1,478.7 598.4,481.4 598.6,478.9 598.9,481.1 599.1,479.0 599.4,481.6 599.6,478.5 599.9,481.2 600.1,478.8 600.4,481.5 600.6,478.5 600.9,481.7 601.1,478.9 601.4,481.1 601.6,478.4 601.9,481.3 602.1,478.7 602.4,481.9 602.6,478.3 602.9,481.8 603.1,478.8 603.4,481.6 603.6,478.7 603.9,481.2 604.1,478.3 604.4,481.2 604.6,478.4 604.9,482.1 605.1,479.2 605.4,481.3 605.6,478.5 605.9,481.1 606.1,478.5 606.4,481.6 606.6,478.5 606.9,481.7 607.1,478.6 607.4,481.3 607.6,478.7 607.9,481.3" fill="none" stroke="#2a78c0" stroke-width="0.7"/><polyline points="233.6,525.4 233.8,526.7 234.1,525.3 234.3,527.1 234.6,525.1 234.8,527.0 235.1,525.4 235.3,526.9 235.6,524.9 235.8,526.9 236.1,524.8 236.3,527.1 236.6,525.2 236.8,526.5 237.1,525.0 237.3,526.6 237.6,525.5 237.8,527.0 238.1,524.9 238.3,527.1 238.6,524.8 238.8,526.7 239.1,525.4 239.3,526.6 239.6,524.7 239.8,526.6 240.1,525.3 240.3,526.6 240.6,525.4 240.8,526.6 241.1,525.1 241.3,526.8 241.6,525.1 241.8,527.4 242.1,525.1 242.3,527.4 242.6,524.6 242.8,527.3 243.1,524.6 243.3,527.6 243.6,524.6 243.8,527.1 244.1,524.8 244.3,527.1 244.6,524.7 244.8,528.0 245.1,524.6 245.3,527.0 245.6,524.6 245.8,527.7 246.1,524.7 246.3,527.6 246.6,525.1 246.8,526.9 247.1,524.6 247.3,526.8 247.6,525.0 247.8,527.1 248.1,525.1 248.3,526.7 248.6,525.3 248.8,527.4 249.1,524.8 249.3,527.4 249.6,525.0 249.8,527.3 250.1,524.8 250.3,527.0 250.6,525.1 250.8,526.9 251.1,525.3 251.3,526.8 251.6,524.9 251.8,526.7 252.1,524.9 252.3,526.9 252.6,525.0 252.8,527.1 253.1,525.0 253.3,526.7 253.6,525.2 253.8,526.6 254.1,525.4 254.3,527.3 254.6,524.9 254.8,527.3 255.1,524.8 255.3,526.9 255.6,524.6 255.8,527.4 256.1,524.9 256.4,526.8 256.6,525.0 256.9,526.9 257.1,524.9 257.4,526.8 257.6,524.5 257.9,527.8 258.1,525.0 258.4,527.6 258.6,524.5 258.9,527.4 259.1,524.1 259.4,527.3 259.6,524.1 259.9,527.0 260.1,523.9 260.4,527.2 260.6,525.0 260.9,528.0 261.1,524.2 261.4,527.7 261.6,524.2 261.9,527.4 262.1,524.9 262.4,527.3 262.6,524.1 262.9,528.0 263.1,524.9 263.4,527.3 263.6,524.7 263.9,527.8 264.1,525.2 264.4,527.6 264.6,525.0 264.9,527.3 265.1,525.2 265.4,526.8 265.6,524.6 265.9,527.1 266.1,524.6 266.4,527.4 266.6,524.8 266.9,526.7 267.1,525.0 267.4,527.3 267.6,525.0 267.9,526.6 268.1,525.3 268.4,527.3 268.6,524.8 268.9,526.7 269.1,525.2 269.4,527.0 269.6,525.1 269.9,526.7 270.1,524.8 270.4,527.0 270.6,525.2 270.9,526.6 271.1,525.1 271.4,527.0 271.6,525.3 271.9,526.6 272.1,525.0 272.4,527.2 272.6,525.2 272.9,526.9 273.1,525.0 273.4,526.9 273.6,525.4 273.9,526.7 274.1,525.3 274.4,526.7 274.6,525.4 274.9,526.8 275.1,525.3 275.4,527.1 275.6,525.2 275.9,527.2 276.1,524.9 276.4,526.7 276.6,525.4 276.9,526.9 277.1,525.1 277.4,526.9 277.6,525.4 277.9,526.9 278.1,525.0 278.4,526.8 278.6,525.3 278.9,527.1 279.1,525.3 279.4,527.2 279.6,525.0 279.9,526.5 280.1,525.2 280.4,526.6 280.6,524.9 280.9,526.8 281.1,525.4 281.4,527.2 281.6,524.9 281.9,526.9 282.1,525.1 282.4,526.6 282.6,524.8 282.9,526.7 283.1,525.1 283.4,526.9 283.6,525.1 283.9,526.6 284.1,524.9 284.4,526.9 284.6,525.2 284.9,527.1 285.1,524.9 285.4,527.0 285.6,524.9 285.9,526.8 286.1,525.4 286.4,526.8 286.6,525.1 286.9,527.1 287.1,525.0 287.4,527.0 287.6,525.1 287.9,527.0 288.1,525.1 288.4,526.6 288.6,525.1 288.9,526.7 289.1,525.4 289.4,526.9 289.6,524.9 289.9,526.7 290.1,525.0 290.4,527.0 290.6,525.0 290.9,527.1 291.1,525.0 291.4,526.6 291.6,525.1 291.9,526.8 292.1,525.2 292.4,527.0 292.6,525.3 292.9,527.0 293.1,524.8 293.4,526.6 293.6,524.9 293.9,527.0 294.1,525.2 294.4,527.1 294.6,525.4 294.9,526.7 295.1,524.8 295.4,527.0 295.6,525.3 295.9,526.6 296.1,525.1 296.4,526.9 296.6,524.7 296.9,526.7 297.1,525.0 297.4,526.9 297.6,525.0 297.9,527.3 298.1,525.3 298.4,527.2 298.6,524.8 298.9,526.8 299.1,525.3 299.4,527.2 299.6,524.6 299.9,527.0 300.1,525.2 300.4,527.2 300.6,524.7 300.9,527.0 301.1,524.9 301.4,526.8 301.6,525.1 301.9,527.0 302.1,524.5 302.4,526.9 302.6,525.1 302.9,527.2 303.1,525.1 303.4,527.0 303.6,524.6 303.9,526.9 304.1,524.8 304.4,526.8 304.6,524.9 304.9,527.3 305.1,525.0 305.4,526.8 305.6,525.3 305.9,526.9 306.1,525.1 306.4,526.7 306.6,525.1 306.9,527.0 307.1,525.4 307.4,527.1 307.6,524.8 307.9,527.1 308.1,525.1 308.4,527.1 308.6,524.8 308.9,527.2 309.1,524.8 309.4,527.1 309.6,524.8 309.9,527.1 310.1,525.2 310.4,526.6 310.6,525.1 310.9,527.0 311.1,525.3 311.4,526.8 311.6,525.4 311.9,526.6 312.1,525.3 312.4,527.1 312.6,525.4 312.9,526.6 313.1,525.2 313.4,527.2 313.6,525.3 313.9,526.6 314.1,525.4 314.4,526.8 314.6,525.4 314.9,527.0 315.1,525.4 315.4,526.7 315.6,525.4 315.9,526.7 316.1,525.4 316.4,526.7 316.6,525.3 316.9,526.7 317.1,525.0 317.4,526.8 317.6,525.3 317.9,526.6 318.1,524.8 318.4,527.2 318.6,524.7 318.9,527.1 319.1,525.1 319.4,526.8 319.6,525.2 319.9,526.9 320.1,525.1 320.4,527.3 320.6,525.2 320.9,527.2 321.1,524.8 321.4,527.2 321.6,524.8 321.9,526.7 322.1,525.2 322.4,527.1 322.6,524.8 322.9,527.5 323.1,524.6 323.4,526.9 323.6,525.2 323.9,527.4 324.1,525.3 324.4,527.6 324.6,525.2 324.9,527.3 325.1,524.4 325.4,526.8 325.6,525.1 325.9,527.4 326.1,524.5 326.4,526.8 326.6,524.7 326.9,527.6 327.1,524.4 327.4,527.2 327.6,525.2 327.9,527.4 328.1,524.6 328.4,527.2 328.6,524.6 328.9,527.4 329.1,524.7 329.4,527.4 329.6,524.6 329.9,527.6 330.1,524.4 330.4,526.8 330.6,524.4 330.9,527.0 331.1,524.8 331.4,527.0 331.6,524.9 331.9,527.2 332.1,524.8 332.4,526.9 332.6,525.0 332.9,527.2 333.1,524.9 333.4,527.2 333.6,525.2 333.9,527.2 334.1,524.5 334.4,527.4 334.6,524.8 334.9,527.4 335.1,525.0 335.4,526.9 335.6,524.8 335.9,526.9 336.1,525.1 336.4,527.3 336.6,524.9 336.9,526.8 337.1,525.1 337.4,527.3 337.6,524.8 337.9,527.4 338.1,524.7 338.4,526.9 338.6,524.7 338.9,527.4 339.1,524.6 339.4,527.4 339.6,525.2 339.9,526.9 340.1,525.2 340.4,527.4 340.6,524.7 340.9,527.2 341.1,525.1 341.4,527.1 341.6,524.7 341.9,526.7 342.1,524.5 342.4,527.3 342.6,524.5 342.9,527.5 343.1,524.8 343.4,527.0 343.6,525.0 343.9,527.1 344.1,524.8 344.4,526.9 344.6,525.1 344.9,527.1 345.1,524.7 345.4,526.7 345.6,524.5 345.9,527.3 346.1,524.9 346.4,527.2 346.6,524.6 346.9,527.1 347.1,525.0 347.4,526.8 347.6,525.0 347.9,526.8 348.1,525.1 348.4,527.2 348.6,525.0 348.9,527.5 349.1,524.9 349.4,527.4 349.6,525.2 349.9,527.5 350.1,524.6 350.4,527.4 350.6,524.7 350.9,527.1 351.1,525.2 351.4,527.3 351.6,524.7 351.9,527.0 352.1,524.8 352.4,527.1 352.6,524.9 352.9,527.2 353.1,525.0 353.4,526.7 353.6,525.1 353.9,526.9 354.1,525.3 354.4,527.0 354.6,525.2 354.9,526.6 355.1,525.2 355.4,527.0 355.6,525.0 355.9,526.8 356.1,525.2 356.4,527.0 356.6,524.9 356.9,526.6 357.1,525.3 357.4,526.8 357.6,525.3 357.9,526.7 358.1,525.3 358.4,526.6 358.6,525.4 358.9,526.8 359.1,525.2 359.4,526.9 359.6,524.8 359.9,527.2 360.1,525.1 360.4,526.7 360.6,525.1 360.9,526.8 361.1,525.1 361.4,527.2 361.6,525.0 361.9,527.2 362.1,524.9 362.4,527.0 362.6,524.8 362.9,527.0 363.1,525.0 363.4,527.0 363.6,524.8 363.9,526.9 364.1,525.2 364.4,526.9 364.6,525.3 364.9,527.1 365.1,525.1 365.4,526.8 365.6,525.0 365.9,527.0 366.1,525.1 366.4,526.7 366.6,525.1 366.9,526.5 367.1,525.2 367.4,526.6 367.6,525.1 367.9,526.6 368.1,525.3 368.4,527.1 368.6,525.0 368.9,526.7 369.1,525.4 369.4,527.2 369.6,525.2 369.9,526.6 370.1,525.1 370.4,527.1 370.6,525.1 370.9,526.7 371.1,525.1 371.4,526.8 371.6,524.8 371.9,527.1 372.1,525.3 372.4,526.9 372.6,524.9 372.9,526.7 373.1,525.4 373.4,526.9 373.6,525.0 373.9,526.8 374.1,525.1 374.4,526.9 374.6,525.0 374.9,526.6 375.1,525.2 375.4,526.6 375.6,525.3 375.9,527.1 376.1,525.0 376.4,527.1 376.6,525.2 376.9,526.7 377.1,525.4 377.4,527.1 377.6,524.9 377.9,527.0 378.1,525.3 378.4,527.0 378.6,524.9 378.9,526.7 379.1,525.1 379.4,527.2 379.6,525.3 379.9,527.0 380.1,524.9 380.4,526.9 380.6,524.9 380.9,526.9 381.1,525.4 381.4,526.8 381.6,525.3 381.9,526.9 382.1,525.2 382.4,527.1 382.6,525.0 382.9,527.1 383.1,525.1 383.4,526.6 383.6,525.3 383.9,526.6 384.1,525.0 384.4,526.8 384.6,524.9 384.9,527.1 385.1,524.9 385.4,527.0 385.6,525.3 385.9,526.6 386.1,525.1 386.4,527.1 386.6,524.9 386.9,526.6 387.1,525.4 387.4,526.8 387.6,525.1 387.9,526.8 388.1,525.0 388.4,527.0 388.6,524.9 388.9,527.2 389.1,525.3 389.4,527.2 389.6,525.4 389.9,526.9 390.1,524.9 390.4,526.6 390.6,525.3 390.9,527.0 391.1,525.2 391.4,526.6 391.6,525.4 391.9,526.9 392.1,525.4 392.4,526.6 392.6,525.3 392.9,526.9 393.1,525.4 393.4,526.8 393.6,525.3 393.9,526.7 394.1,525.0 394.4,526.8 394.6,524.9 394.9,527.2 395.1,524.8 395.4,526.7 395.6,525.0 395.9,526.6 396.1,525.4 396.4,527.0 396.6,525.1 396.9,526.6 397.1,525.3 397.4,527.0 397.6,525.1 397.9,526.6 398.1,524.9 398.4,526.6 398.6,525.2 398.9,526.9 399.1,525.3 399.4,526.6 399.6,525.1 399.9,527.1 400.1,525.4 400.4,526.6 400.6,525.3 400.9,527.2 401.1,525.4 401.4,526.9 401.6,525.0 401.9,527.2 402.1,525.4 402.4,527.0 402.6,525.2 402.9,527.1 403.1,524.8 403.4,526.9 403.6,525.0 403.9,526.6 404.1,525.3 404.4,527.1 404.6,525.0 404.9,526.7 405.1,525.3 405.4,527.1 405.6,524.9 405.9,527.0 406.1,524.9 406.4,526.7 406.6,525.1 406.9,527.1 407.1,525.0 407.4,526.8 407.6,525.2 407.9,527.1 408.1,525.0 408.4,526.7 408.6,525.2 408.9,526.7 409.1,525.2 409.4,526.9 409.6,525.4 409.9,526.6 410.1,524.9 410.4,526.9 410.6,525.4 410.9,526.9 411.1,525.0 411.4,526.8 411.6,525.3 411.9,527.2 412.1,524.8 412.4,527.0 412.6,524.9 412.9,527.1 413.1,525.0 413.4,526.9 413.6,525.1 413.9,526.8 414.1,525.1 414.4,526.7 414.6,524.7 414.9,526.9 415.1,525.3 415.4,526.8 415.6,524.6 415.9,527.2 416.1,525.1 416.4,526.7 416.6,524.9 416.9,527.2 417.1,524.8 417.4,526.8 417.6,524.6 417.9,527.5 418.1,524.8 418.4,527.6 418.6,525.1 418.9,526.9 419.1,525.1 419.4,527.5 419.6,524.6 419.9,526.9 420.1,524.7 420.4,527.0 420.6,524.7 420.9,526.9 421.1,524.9 421.4,527.1 421.6,524.9 421.9,527.3 422.1,524.9 422.4,526.8 422.6,525.1 422.9,526.8 423.1,525.0 423.4,526.9 423.6,525.1 423.9,526.8 424.1,524.9 424.4,526.9 424.6,525.1 424.9,526.9 425.1,525.1 425.4,526.8 425.6,525.1 425.9,526.6 426.1,525.1 426.4,526.7 426.6,525.2 426.9,526.6 427.1,525.4 427.4,526.8 427.6,525.0 427.9,526.6 428.1,524.8 428.4,526.7 428.6,525.2 428.9,526.7 429.1,524.8 429.4,527.1 429.6,524.8 429.9,527.1 430.1,524.9 430.4,526.6 430.6,525.2 430.9,527.2 431.1,525.1 431.4,526.7 431.6,525.1 431.9,526.9 432.1,524.9 432.4,527.1 432.6,525.0 432.9,526.8 433.1,525.0 433.4,527.1 433.6,525.1 433.9,527.4 434.1,525.0 434.4,526.7 434.6,525.1 434.9,527.0 435.1,525.1 435.4,527.3 435.6,524.8 435.9,527.0 436.1,524.7 436.4,527.3 436.6,525.1 436.9,527.5 437.1,525.3 437.4,527.5 437.6,524.7 437.9,527.4 438.1,525.3 438.4,527.4 438.6,525.1 438.9,526.9 439.1,524.5 439.4,527.1 439.6,524.5 439.9,527.3 440.1,524.5 440.4,527.2 440.6,524.5 440.9,527.3 441.1,525.0 441.4,527.0 441.6,524.8 441.9,526.9 442.1,524.5 442.4,527.5 442.6,524.6 442.9,527.3 443.1,524.6 443.4,527.2 443.6,524.5 443.9,526.8 444.1,525.2 444.4,527.0 444.6,525.3 444.9,526.7 445.1,524.9 445.4,527.2 445.6,524.7 445.9,527.2 446.1,524.7 446.4,526.8 446.6,525.2 446.9,526.9 447.1,525.4 447.4,526.7 447.6,525.2 447.9,527.0 448.1,524.8 448.4,526.9 448.6,525.0 448.9,526.7 449.1,524.8 449.4,527.1 449.6,525.2 449.9,526.6 450.1,524.9 450.4,526.8 450.6,524.9 450.9,526.7 451.1,524.8 451.4,527.0 451.6,525.1 451.9,526.8 452.1,525.2 452.4,526.8 452.6,525.2 452.9,527.0 453.1,525.4 453.4,526.7 453.6,524.8 453.9,526.7 454.1,525.4 454.4,527.3 454.6,525.2 454.9,527.2 455.1,525.1 455.4,527.4 455.6,525.3 455.9,526.9 456.1,524.8 456.4,526.8 456.6,525.0 456.9,527.0 457.1,524.6 457.4,527.3 457.6,524.8 457.9,527.0 458.1,525.2 458.4,527.7 458.6,524.9 458.9,526.9 459.1,524.8 459.4,526.9 459.6,524.8 459.9,527.0 460.1,524.5 460.4,527.4 460.6,524.2 460.9,527.8 461.1,524.8 461.4,527.5 461.6,525.0 461.9,527.9 462.1,524.3 462.4,527.3 462.6,524.4 462.9,527.1 463.1,525.2 463.4,526.9 463.6,524.9 463.9,527.3 464.1,525.0 464.4,527.0 464.6,524.6 464.9,527.0 465.1,525.0 465.4,527.1 465.6,525.2 465.9,527.6 466.1,524.7 466.4,526.8 466.6,525.3 466.9,526.9 467.1,525.2 467.4,526.9 467.6,524.8 467.9,527.3 468.1,524.8 468.4,526.6 468.6,524.9 468.9,527.1 469.1,525.0 469.4,526.7 469.6,525.0 469.9,526.7 470.1,525.1 470.4,527.1 470.6,524.9 470.9,527.1 471.1,524.8 471.4,526.8 471.6,525.3 471.9,526.8 472.1,525.0 472.4,526.7 472.6,525.4 472.9,527.0 473.1,524.9 473.4,526.6 473.6,525.1 473.9,526.8 474.1,525.2 474.4,527.0 474.6,524.9 474.9,526.8 475.1,525.3 475.4,526.7 475.6,524.8 475.9,526.7 476.1,525.1 476.4,526.8 476.6,524.9 476.9,526.8 477.1,524.9 477.4,527.2 477.6,525.4 477.9,526.9 478.1,524.8 478.4,527.1 478.6,524.8 478.9,527.0 479.1,525.1 479.4,526.8 479.6,525.0 479.9,526.7 480.1,525.0 480.4,526.9 480.6,524.7 480.9,527.3 481.1,525.0 481.4,526.9 481.6,524.7 481.9,527.0 482.1,524.9 482.4,526.8 482.6,524.6 482.9,527.2 483.1,524.9 483.4,526.7 483.6,524.9 483.9,527.5 484.1,524.5 484.4,527.7 484.6,524.9 484.9,527.2 485.1,525.0 485.4,527.6 485.6,524.7 485.9,526.9 486.1,524.6 486.4,527.1 486.6,524.2 486.9,527.7 487.1,525.0 487.4,527.5 487.6,524.5 487.9,527.4 488.1,525.0 488.4,527.3 488.6,524.9 488.9,528.1 489.1,524.9 489.4,527.0 489.6,524.7 489.9,527.6 490.1,524.7 490.4,527.8 490.6,524.1 490.9,527.3 491.1,524.8 491.4,527.0 491.6,524.6 491.9,527.3 492.1,525.0 492.4,527.5 492.6,524.2 492.9,527.6 493.1,524.9 493.4,527.6 493.6,524.6 493.9,527.6 494.1,525.2 494.4,527.2 494.6,524.7 494.9,526.9 495.1,525.1 495.4,526.9 495.6,524.9 495.9,527.4 496.1,524.8 496.4,527.1 496.6,524.9 496.9,526.9 497.1,525.1 497.4,527.1 497.6,525.0 497.9,526.7 498.1,524.7 498.4,526.8 498.6,525.2 498.9,526.8 499.1,524.8 499.4,527.2 499.6,525.0 499.9,526.6 500.1,525.2 500.4,526.6 500.6,525.1 500.9,526.7 501.1,525.3 501.4,527.1 501.6,525.4 501.9,527.2 502.1,525.3 502.4,527.3 502.6,524.9 502.9,527.2 503.1,525.2 503.4,527.0 503.6,524.8 503.9,527.3 504.1,524.9 504.4,526.7 504.6,524.5 504.9,526.8 505.1,524.8 505.4,527.0 505.6,524.7 505.9,526.8 506.1,525.2 506.4,527.0 506.6,525.1 506.9,526.8 507.1,525.0 507.4,527.1 507.6,524.5 507.9,527.2 508.1,525.3 508.4,527.4 508.6,524.6 508.9,526.7 509.1,524.9 509.4,527.1 509.6,524.9 509.9,527.1 510.1,525.2 510.4,527.1 510.6,524.9 510.9,526.8 511.1,525.3 511.4,527.1 511.6,525.1 511.9,527.2 512.1,525.4 512.4,526.6 512.6,525.0 512.9,526.9 513.1,525.3 513.4,526.9 513.6,524.9 513.9,526.7 514.1,525.0 514.4,526.8 514.6,525.0 514.9,526.9 515.1,525.4 515.4,527.0 515.6,525.1 515.9,527.1 516.1,524.8 516.4,526.6 516.6,525.2 516.9,527.1 517.1,525.4 517.4,526.6 517.6,524.8 517.9,526.6 518.1,525.1 518.4,527.0 518.6,525.0 518.9,526.8 519.1,525.0 519.4,526.7 519.6,525.0 519.9,526.8 520.1,525.3 520.4,526.6 520.6,525.3 520.9,527.1 521.1,525.1 521.4,527.2 521.6,525.2 521.9,526.9 522.1,524.8 522.4,526.9 522.6,525.3 522.9,526.7 523.1,524.8 523.4,526.6 523.6,524.9 523.9,526.8 524.1,524.9 524.4,526.9 524.6,525.2 524.9,527.2 525.1,524.9 525.4,527.2 525.6,525.3 525.9,527.2 526.1,525.2 526.4,526.9 526.6,525.3 526.9,527.0 527.1,524.8 527.4,527.2 527.6,525.3 527.9,526.8 528.1,525.0 528.4,527.4 528.6,525.1 528.9,527.5 529.1,525.0 529.4,527.1 529.6,524.6 529.9,526.9 530.1,525.2 530.4,526.9 530.6,524.3 530.9,527.7 531.1,524.9 531.4,526.8 531.6,524.6 531.9,527.9 532.1,524.1 532.4,526.9 532.6,524.9 532.9,527.7 533.1,524.3 533.4,527.7 533.6,524.2 533.9,527.2 534.1,524.3 534.4,527.8 534.6,524.0 534.9,528.1 535.1,524.8 535.4,527.8 535.6,524.5 535.9,527.2 536.1,524.0 536.4,527.4 536.6,524.7 536.9,527.8 537.1,524.8 537.4,528.1 537.6,524.6 537.9,527.4 538.1,524.3 538.4,527.2 538.6,523.9 538.9,527.8 539.1,525.0 539.4,527.1 539.6,524.2 539.9,527.8 540.1,525.1 540.4,527.7 540.6,524.7 540.9,527.6 541.1,524.7 541.4,527.0 541.6,524.3 541.9,527.5 542.1,525.2 542.4,527.1 542.6,524.4 542.9,527.7 543.1,524.4 543.4,527.5 543.6,524.8 543.9,527.6 544.1,524.6 544.4,527.7 544.6,524.9 544.9,527.7 545.1,524.6 545.4,527.0 545.6,524.9 545.9,527.4 546.1,525.0 546.4,527.4 546.6,524.9 546.9,526.9 547.1,524.5 547.4,527.6 547.6,524.5 547.9,527.3 548.1,524.9 548.4,527.1 548.6,524.7 548.9,527.4 549.1,524.8 549.4,527.0 549.6,525.3 549.9,527.2 550.1,525.2 550.4,527.3 550.6,524.9 550.9,526.9 551.1,525.2 551.4,527.0 551.6,524.8 551.9,526.9 552.1,524.9 552.4,527.1 552.6,525.0 552.9,527.0 553.1,525.4 553.4,527.2 553.6,525.4 553.9,527.1 554.1,525.3 554.4,527.0 554.6,524.9 554.9,526.6 555.1,525.4 555.4,527.0 555.6,525.1 555.9,527.2 556.1,525.0 556.4,527.0 556.6,525.2 556.9,526.7 557.1,525.0 557.4,527.3 557.6,525.0 557.9,526.8 558.1,524.7 558.4,527.2 558.6,524.8 558.9,527.2 559.1,525.2 559.4,527.4 559.6,525.0 559.9,527.1 560.1,525.1 560.4,526.9 560.6,524.7 560.9,527.2 561.1,524.6 561.4,527.1 561.6,525.1 561.9,527.0 562.1,524.9 562.4,527.4 562.6,525.3 562.9,526.7 563.1,525.1 563.4,526.8 563.6,525.1 563.9,526.7 564.1,524.7 564.4,526.7 564.6,524.8 564.9,527.1 565.1,524.8 565.4,527.0 565.6,525.4 565.9,526.6 566.1,524.8 566.4,527.0 566.6,524.8 566.9,526.9 567.1,525.2 567.4,527.1 567.6,524.9 567.9,526.9 568.1,525.2 568.4,527.1 568.6,525.0 568.9,526.8 569.1,525.2 569.4,526.8 569.6,525.3 569.9,526.7 570.1,524.8 570.4,527.1 570.6,525.3 570.9,526.6 571.1,525.1 571.4,526.9 571.6,525.1 571.9,526.8 572.1,525.4 572.4,527.1 572.6,525.4 572.9,526.9 573.1,525.2 573.4,526.8 573.6,525.3 573.9,526.6 574.1,524.7 574.4,527.1 574.6,524.7 574.9,527.3 575.1,524.6 575.4,526.8 575.6,524.7 575.9,526.9 576.1,525.0 576.4,526.7 576.6,525.0 576.9,527.4 577.1,525.2 577.4,527.7 577.6,524.7 577.9,526.9 578.1,524.3 578.4,527.6 578.6,524.6 578.9,527.2 579.1,524.5 579.4,527.1 579.6,524.3 579.9,527.1 580.1,524.6 580.4,527.7 580.6,525.0 580.9,527.0 581.1,524.5 581.4,527.1 581.6,524.5 581.9,527.6 582.1,524.4 582.4,527.7 582.6,525.1 582.9,527.4 583.1,524.6 583.4,526.8 583.6,524.3 583.9,526.9 584.1,524.7 584.4,527.2 584.6,524.4 584.9,527.6 585.1,524.8 585.4,527.5 585.6,524.3 585.9,527.3 586.1,524.9 586.4,527.0 586.6,524.3 586.9,526.9 587.1,524.6 587.4,527.3 587.6,524.3 587.9,527.3 588.1,524.6 588.4,527.9 588.6,524.1 588.9,528.2 589.1,524.0 589.4,527.8 589.6,524.3 589.9,527.8 590.1,523.3 590.4,527.4 590.6,523.4 590.9,528.2 591.1,523.7 591.4,527.6 591.6,523.3 591.9,528.1 592.1,523.3 592.4,527.8 592.6,523.1 592.9,527.5 593.1,524.0 593.4,527.6 593.6,523.1 593.9,528.3 594.1,523.0 594.4,528.5 594.6,523.1 594.9,528.0 595.1,524.0 595.4,528.8 595.6,523.5 595.9,527.7 596.1,523.7 596.4,528.2 596.6,523.8 596.9,528.4 597.1,524.7 597.4,527.6 597.6,524.5 597.9,527.4 598.1,524.6 598.4,528.4 598.6,524.9 598.9,527.6 599.1,523.7 599.4,528.3 599.6,524.2 599.9,527.9 600.1,524.3 600.4,528.3 600.6,523.9 600.9,528.0 601.1,524.1 601.4,527.3 601.6,524.3 601.9,528.2 602.1,524.5 602.4,527.4 602.6,524.0 602.9,528.2 603.1,524.3 603.4,527.4 603.6,524.6 603.9,527.8 604.1,524.6 604.4,527.2 604.6,524.3 604.9,527.8 605.1,524.0 605.4,528.2 605.6,524.1 605.9,527.0 606.1,524.5 606.4,527.5 606.6,524.4 606.9,527.5 607.1,524.9 607.4,527.5 607.6,524.7 607.9,527.6" fill="none" stroke="#e8a018" stroke-width="0.7"/><polyline points="233.6,571.4 234.1,571.2 234.6,571.2 235.1,571.9 235.6,571.6 236.1,571.7 236.6,571.6 237.1,571.4 237.6,571.7 238.1,571.6 238.6,571.8 239.1,571.7 239.6,571.8 240.1,571.4 240.3,563.5 240.5,570.8 240.6,571.1 241.1,571.7 241.6,571.2 242.1,571.7 242.6,571.6 243.1,571.1 243.3,585.2 243.5,572.1 243.6,571.0 244.1,571.9 244.6,571.8 245.1,571.2 245.6,571.7 246.1,571.7 246.6,571.1 247.1,571.7 247.6,571.1 248.1,571.9 248.6,571.7 249.1,572.0 249.6,571.1 249.8,580.7 250.0,571.1 250.1,571.6 250.6,571.6 251.1,571.2 251.6,571.9 252.1,571.8 252.6,571.3 253.1,571.1 253.6,571.7 254.1,571.4 254.6,571.7 255.1,571.5 255.6,571.4 256.1,571.0 256.6,571.1 257.1,571.5 257.6,571.7 258.1,571.4 258.6,571.7 259.1,571.5 259.6,571.9 260.1,571.7 260.3,560.5 260.5,571.1 260.6,571.1 261.1,571.1 261.6,571.0 262.1,571.9 262.6,571.9 263.1,571.8 263.6,571.1 264.1,571.7 264.6,571.1 265.1,571.9 265.6,571.7 266.1,571.7 266.6,571.6 267.1,571.4 267.6,571.8 268.1,572.0 268.6,571.2 269.1,571.4 269.6,571.7 270.1,571.7 270.6,571.4 271.1,571.5 271.6,572.0 272.1,571.3 272.6,571.2 273.1,571.7 273.3,577.0 273.5,571.1 273.6,571.9 274.1,571.3 274.6,571.9 275.1,571.4 275.6,571.9 276.1,571.8 276.6,571.7 277.1,571.2 277.6,571.2 278.1,571.0 278.3,558.0 278.5,570.9 278.6,571.7 279.1,571.1 279.6,571.2 280.1,571.6 280.6,571.2 281.1,571.3 281.6,571.2 281.8,583.7 282.0,571.9 282.1,571.1 282.3,560.0 282.5,572.5 282.6,571.6 283.1,571.7 283.6,571.6 284.1,571.5 284.6,572.0 285.1,571.9 285.6,571.8 286.1,571.0 286.6,571.6 287.1,571.9 287.6,571.6 288.1,571.5 288.6,571.6 289.1,571.2 289.6,571.7 290.1,571.8 290.6,571.1 291.1,571.5 291.6,571.6 291.8,562.0 292.0,571.2 292.1,571.7 292.6,571.9 293.1,571.9 293.6,571.3 294.1,571.2 294.6,571.9 295.1,571.6 295.3,557.0 295.5,572.2 295.6,571.9 296.1,571.3 296.6,571.6 297.1,571.3 297.6,571.8 298.1,571.7 298.6,571.2 299.1,571.5 299.6,571.6 300.1,571.2 300.6,571.2 301.1,571.5 301.6,571.1 302.1,571.5 302.6,571.9 303.1,571.8 303.6,571.1 304.1,571.8 304.6,571.7 305.1,571.7 305.6,571.0 306.1,571.8 306.6,571.2 307.1,571.8 307.6,571.3 308.1,571.4 308.6,571.2 309.1,571.9 309.6,571.2 310.1,571.9 310.6,571.5 311.1,571.1 311.6,571.7 312.1,571.5 312.6,571.0 313.1,571.8 313.6,571.3 314.1,571.0 314.6,571.8 315.1,571.7 315.3,581.0 315.5,571.3 315.6,571.2 316.1,571.5 316.6,571.6 317.1,571.7 317.6,571.5 318.1,571.6 318.6,571.7 319.1,571.2 319.6,571.2 320.1,571.5 320.6,571.8 321.1,571.8 321.6,571.9 322.1,571.4 322.6,571.7 323.1,571.1 323.6,571.4 324.1,571.1 324.6,571.8 325.1,572.0 325.6,571.7 326.1,571.8 326.6,571.4 327.1,571.8 327.6,571.1 328.1,571.4 328.6,571.4 329.1,571.9 329.6,571.2 330.1,571.2 330.6,571.1 331.1,571.8 331.6,571.3 332.1,571.9 332.6,571.3 333.1,571.8 333.6,571.2 334.1,571.9 334.6,572.0 335.1,571.9 335.6,571.7 336.1,571.9 336.6,571.9 337.1,572.0 337.6,571.3 338.1,571.8 338.6,571.8 339.1,571.3 339.6,571.2 340.1,571.9 340.6,571.5 341.1,571.5 341.6,571.9 342.1,571.5 342.6,571.3 343.1,571.7 343.6,571.5 344.1,571.3 344.6,571.7 345.1,571.9 345.6,571.2 346.1,571.8 346.6,571.8 347.1,571.5 347.6,571.2 348.1,571.7 348.6,571.3 349.1,571.3 349.6,571.9 350.1,571.3 350.6,571.1 351.1,571.8 351.6,572.0 352.1,571.3 352.6,571.4 353.1,571.5 353.6,571.8 354.1,571.0 354.6,571.6 355.1,571.2 355.6,571.9 356.1,571.4 356.6,571.9 357.1,571.5 357.6,571.7 358.1,571.0 358.6,571.2 359.1,571.3 359.6,571.4 360.1,571.2 360.6,571.4 361.1,571.1 361.6,571.6 362.1,572.0 362.6,571.9 363.1,571.6 363.6,572.0 364.1,571.7 364.6,571.6 365.1,571.5 365.6,571.1 366.1,571.9 366.6,571.9 367.1,571.8 367.6,571.7 368.1,571.8 368.6,572.0 369.1,572.0 369.6,571.8 370.1,571.0 370.6,571.9 371.1,571.6 371.6,571.5 372.1,571.4 372.6,571.3 373.1,571.0 373.6,571.6 374.1,571.6 374.6,571.1 375.1,571.9 375.6,571.9 376.1,571.9 376.6,571.5 377.1,571.4 377.6,571.5 378.1,571.4 378.6,572.0 379.1,571.9 379.6,571.9 380.1,571.5 380.6,571.5 381.1,571.7 381.6,571.3 382.1,571.2 382.6,572.0 383.1,571.3 383.6,571.3 384.1,571.5 384.6,571.1 385.1,571.5 385.6,571.2 386.1,571.8 386.6,571.1 387.1,571.8 387.6,571.3 388.1,571.8 388.6,571.8 389.1,572.0 389.3,557.0 389.5,570.8 389.6,572.0 390.1,571.1 390.6,571.4 391.1,571.0 391.6,571.5 392.1,571.1 392.6,571.6 393.1,571.9 393.6,571.8 394.1,571.6 394.6,571.1 395.1,572.0 395.6,571.4 396.1,571.9 396.6,571.1 397.1,571.3 397.6,571.9 398.1,571.7 398.6,571.2 399.1,571.5 399.6,571.5 400.1,571.3 400.6,571.2 401.1,571.1 401.6,571.5 402.1,571.4 402.6,571.3 403.1,571.5 403.6,571.3 404.1,571.4 404.6,571.8 405.1,571.1 405.6,571.1 406.1,571.4 406.6,571.3 407.1,571.5 407.6,571.9 408.1,571.9 408.6,571.8 409.1,571.9 409.6,571.2 410.1,571.3 410.6,571.1 411.1,571.3 411.6,571.3 412.1,571.2 412.6,571.3 413.1,571.9 413.6,571.5 414.1,571.9 414.6,571.5 415.1,571.7 415.6,571.7 416.1,571.6 416.6,571.9 417.1,571.6 417.6,571.5 418.1,571.2 418.6,571.1 419.1,571.4 419.6,571.4 420.1,571.1 420.6,572.0 421.1,571.0 421.6,571.4 422.1,571.2 422.3,567.0 422.5,571.3 422.6,571.8 423.1,572.0 423.6,571.4 424.1,571.7 424.6,571.9 425.1,571.3 425.6,571.4 426.1,571.4 426.6,571.8 427.1,571.3 427.6,571.9 428.1,571.2 428.6,571.7 429.1,571.6 429.6,571.0 430.1,571.3 430.6,571.8 431.1,571.4 431.6,571.1 432.1,571.5 432.6,571.5 433.1,571.5 433.6,571.4 434.1,571.9 434.6,571.7 435.1,571.4 435.6,571.4 436.1,571.8 436.6,571.2 437.1,571.5 437.6,571.8 438.1,571.1 438.6,571.1 439.1,571.1 439.6,571.7 440.1,571.8 440.6,571.7 441.1,571.6 441.6,571.0 442.1,571.4 442.6,571.5 442.8,561.0 443.0,571.2 443.1,571.3 443.6,571.4 444.1,571.2 444.6,571.1 445.1,571.6 445.6,571.0 446.1,571.4 446.6,571.4 447.1,571.8 447.6,571.7 448.1,571.5 448.6,571.0 449.1,571.7 449.6,571.7 450.1,571.6 450.6,572.0 451.1,571.5 451.6,571.4 452.1,571.5 452.6,571.1 453.1,571.6 453.6,571.1 454.1,571.7 454.6,571.6 455.1,571.7 455.6,571.2 456.1,571.7 456.6,571.9 457.1,572.0 457.6,571.8 458.1,571.2 458.6,571.8 459.1,571.2 459.6,572.0 460.1,571.0 460.6,571.0 461.1,571.4 461.6,571.1 462.1,572.0 462.6,571.9 463.1,571.3 463.6,571.9 464.1,571.3 464.6,571.8 465.1,571.1 465.6,571.9 466.1,571.4 466.6,571.2 467.1,571.4 467.6,571.0 468.1,571.0 468.6,571.5 469.1,571.6 469.6,572.0 469.8,562.0 470.0,571.5 470.1,571.3 470.6,571.3 471.1,571.0 471.6,571.9 472.1,571.7 472.6,571.3 473.1,571.8 473.6,571.7 474.1,571.6 474.6,571.5 475.1,571.9 475.6,571.9 476.1,571.8 476.6,571.2 477.1,571.4 477.6,571.6 478.1,572.0 478.6,571.5 479.1,571.5 479.6,571.1 480.1,571.1 480.6,571.3 481.1,571.7 481.6,571.2 482.1,571.8 482.6,571.6 483.1,571.3 483.6,571.5 484.1,571.8 484.6,571.0 485.1,571.6 485.6,571.8 486.1,572.0 486.6,571.3 487.1,571.6 487.6,571.8 488.1,571.3 488.6,571.8 489.1,571.7 489.6,572.0 490.1,571.4 490.6,571.1 491.1,571.5 491.6,571.7 492.1,571.9 492.6,571.8 493.1,571.5 493.6,571.9 494.1,571.9 494.6,571.6 495.1,571.3 495.6,571.0 496.1,571.6 496.6,571.0 497.1,571.4 497.6,572.0 498.1,571.3 498.6,571.7 499.1,571.7 499.6,571.3 500.1,571.6 500.6,571.9 501.1,571.7 501.6,571.3 502.1,572.0 502.6,571.7 503.1,571.2 503.6,571.8 504.1,571.8 504.6,571.9 505.1,571.8 505.6,571.8 506.1,571.4 506.6,571.8 507.1,571.8 507.6,571.8 508.1,571.2 508.6,572.0 509.1,571.6 509.6,571.9 510.1,571.5 510.6,571.8 511.1,571.6 511.6,571.3 512.1,571.5 512.6,571.8 513.1,571.3 513.6,571.9 514.1,571.7 514.6,571.8 515.1,571.5 515.6,571.7 516.1,571.6 516.6,571.4 517.1,571.0 517.6,571.6 518.1,571.7 518.6,571.6 519.1,571.4 519.6,571.5 520.1,571.1 520.6,571.6 521.1,571.1 521.6,571.1 522.1,571.1 522.6,572.0 523.1,571.9 523.3,562.0 523.5,571.8 523.6,571.9 524.1,571.2 524.6,571.7 525.1,571.5 525.6,571.1 526.1,571.6 526.6,571.1 527.1,571.3 527.6,571.1 528.1,571.2 528.6,571.9 529.1,571.5 529.6,571.5 530.1,571.1 530.6,571.2 531.1,571.1 531.6,571.7 532.1,571.6 532.6,571.7 533.1,571.6 533.6,571.3 534.1,571.4 534.6,571.4 535.1,571.9 535.6,571.7 536.1,571.8 536.6,571.7 537.1,572.0 537.6,571.8 538.1,571.0 538.6,571.1 539.1,571.0 539.6,571.9 540.1,571.2 540.6,571.5 541.1,571.6 541.6,571.2 542.1,571.3 542.6,571.9 543.1,571.2 543.6,571.8 544.1,571.5 544.6,571.7 545.1,571.4 545.6,571.7 546.1,571.7 546.6,571.4 547.1,571.3 547.6,571.4 548.1,571.7 548.6,571.0 549.1,571.2 549.6,571.4 550.1,571.7 550.6,571.5 551.1,571.2 551.6,571.9 552.1,571.6 552.6,571.9 553.1,571.4 553.6,572.0 554.1,571.6 554.6,571.3 555.1,571.2 555.6,571.8 556.1,571.2 556.6,571.8 557.1,571.8 557.6,571.1 558.1,571.7 558.6,571.7 559.1,571.1 559.6,571.8 560.1,571.9 560.6,571.3 561.1,571.5 561.6,571.4 562.1,571.2 562.6,571.2 563.1,571.7 563.6,572.0 564.1,571.1 564.6,571.0 565.1,571.5 565.6,571.3 566.1,571.9 566.6,571.3 567.1,571.0 567.6,571.3 568.1,571.4 568.6,571.4 569.1,571.4 569.6,571.3 570.1,572.0 570.6,571.0 571.1,571.2 571.6,571.8 572.1,571.2 572.6,571.2 573.1,571.4 573.6,571.6 574.1,571.8 574.6,571.8 575.1,571.2 575.6,571.9 575.8,580.0 576.0,570.9 576.1,571.8 576.6,571.9 577.1,571.1 577.6,571.4 578.1,571.2 578.6,571.5 579.1,571.8 579.6,571.8 580.1,571.8 580.6,571.0 581.1,571.3 581.6,571.9 582.1,571.7 582.6,571.8 583.1,571.2 583.6,571.2 584.1,571.5 584.6,571.6 585.1,571.1 585.6,571.9 586.1,571.6 586.6,571.9 587.1,571.9 587.6,571.4 588.1,571.3 588.6,571.8 589.1,571.5 589.6,571.6 590.1,571.7 590.3,555.0 590.5,572.5 590.6,571.5 591.1,571.5 591.6,571.9 592.1,571.1 592.6,571.4 593.1,571.2 593.6,571.6 594.1,571.8 594.6,571.4 595.1,571.2 595.6,571.1 596.1,571.9 596.6,571.6 597.1,571.9 597.3,579.5 597.5,571.0 597.6,571.3 598.1,571.2 598.6,571.6 599.1,571.6 599.3,565.5 599.5,572.2 599.6,571.6 600.1,571.3 600.6,571.1 601.1,571.8 601.3,580.0 601.5,572.4 601.6,571.3 602.1,571.3 602.6,571.5 603.1,571.4 603.3,566.5 603.5,572.0 603.6,571.5 604.1,571.5 604.6,571.4 605.1,571.3 605.3,577.5 605.5,572.3 605.6,571.9 606.1,571.2 606.6,571.4 607.1,571.7 607.6,571.4" fill="none" stroke="#14a070" stroke-width="1.3"/><line x1="522.90" y1="461.00" x2="522.90" y2="489.70" stroke="#2a78c0" stroke-width="1" /><line x1="522.90" y1="517.00" x2="522.90" y2="535.80" stroke="#e8a018" stroke-width="1" /><line x1="522.90" y1="562.00" x2="522.90" y2="581.50" stroke="#14a070" stroke-width="1" /><path d="M233.5 477.5 L237.5 480.2 L233.5 483 Z" fill="#2a78c0"/><line x1="240.00" y1="476.50" x2="240.00" y2="484.00" stroke="#2a78c0" stroke-width="0.9" /><line x1="604.00" y1="476.00" x2="604.00" y2="484.50" stroke="#2a78c0" stroke-width="0.8" /><line x1="607.50" y1="476.00" x2="607.50" y2="485.00" stroke="#2a78c0" stroke-width="0.8" /><text x="232" y="464.3" text-anchor="end" font-size="6.5" fill="#222">400</text><text x="232" y="501.5" text-anchor="end" font-size="6.5" fill="#222">-400</text><text x="232" y="509.5" text-anchor="end" font-size="6.5" fill="#222">200</text><text x="232" y="547.5" text-anchor="end" font-size="6.5" fill="#222">-200</text><text x="232" y="556.0" text-anchor="end" font-size="6.5" fill="#222">60</text><text x="232" y="593.5" text-anchor="end" font-size="6.5" fill="#222">-60</text><rect x="224.3" y="475.9" width="8.3" height="8.6" fill="#fff" stroke="#3a88d0" stroke-opacity="0.35" stroke-width="0.6"/><text x="225" y="482.8" font-size="7" fill="#3a88d0">A5</text><rect x="224.3" y="521.7" width="8.3" height="8.6" fill="#fff" stroke="#f0a830" stroke-opacity="0.35" stroke-width="0.6"/><text x="225" y="528.6" font-size="7" fill="#f0a830">A6</text><rect x="224.3" y="567.6" width="8.3" height="8.6" fill="#fff" stroke="#20a880" stroke-opacity="0.35" stroke-width="0.6"/><text x="225" y="574.5" font-size="7" fill="#20a880">A7</text><text x="233.8" y="647" text-anchor="middle" font-size="6.3" fill="#222">0</text><text x="336.8" y="647" text-anchor="middle" font-size="6.3" fill="#222">600</text><text x="441" y="647" text-anchor="middle" font-size="6.3" fill="#222">1200</text><text x="545.3" y="647" text-anchor="middle" font-size="6.3" fill="#222">1800</text><text x="641" y="647" text-anchor="middle" font-size="6.3" fill="#222">2400</text><line x1="219.00" y1="448.20" x2="766.00" y2="448.20" stroke="#8a8a8a" stroke-width="1.3" /><text x="655.5" y="255.0" font-size="6.3" font-weight="bold" letter-spacing="0.25" fill="#2ee82e">Cursor&#160; Main</text><text x="742" y="255.0" font-size="6.3" font-weight="bold" fill="#2ee82e">s</text><line x1="654.50" y1="256.40" x2="745.00" y2="256.40" stroke="#c8c8c8" stroke-width="0.8" /><line x1="654.50" y1="261.00" x2="765.00" y2="261.00" stroke="#9a9a9a" stroke-width="0.9" /><line x1="654.50" y1="269.55" x2="765.00" y2="269.55" stroke="#9a9a9a" stroke-width="0.9" /><line x1="654.50" y1="278.10" x2="765.00" y2="278.10" stroke="#9a9a9a" stroke-width="0.9" /><line x1="654.50" y1="286.65" x2="765.00" y2="286.65" stroke="#9a9a9a" stroke-width="0.9" /><line x1="654.50" y1="295.20" x2="765.00" y2="295.20" stroke="#9a9a9a" stroke-width="0.9" /><line x1="654.50" y1="303.75" x2="765.00" y2="303.75" stroke="#9a9a9a" stroke-width="0.9" /><line x1="654.50" y1="312.30" x2="765.00" y2="312.30" stroke="#9a9a9a" stroke-width="0.9" /><line x1="654.50" y1="320.85" x2="765.00" y2="320.85" stroke="#9a9a9a" stroke-width="0.9" /><line x1="654.50" y1="329.40" x2="765.00" y2="329.40" stroke="#9a9a9a" stroke-width="0.9" /><line x1="654.50" y1="337.95" x2="765.00" y2="337.95" stroke="#9a9a9a" stroke-width="0.9" /><line x1="654.50" y1="346.50" x2="765.00" y2="346.50" stroke="#9a9a9a" stroke-width="0.9" /><line x1="654.50" y1="355.05" x2="765.00" y2="355.05" stroke="#9a9a9a" stroke-width="0.9" /><line x1="654.50" y1="363.60" x2="765.00" y2="363.60" stroke="#9a9a9a" stroke-width="0.9" /><line x1="654.50" y1="372.15" x2="765.00" y2="372.15" stroke="#9a9a9a" stroke-width="0.9" /><line x1="654.50" y1="380.70" x2="765.00" y2="380.70" stroke="#9a9a9a" stroke-width="0.9" /><line x1="654.50" y1="389.25" x2="765.00" y2="389.25" stroke="#9a9a9a" stroke-width="0.9" /><line x1="654.50" y1="397.80" x2="765.00" y2="397.80" stroke="#9a9a9a" stroke-width="0.9" /><line x1="654.50" y1="406.35" x2="765.00" y2="406.35" stroke="#9a9a9a" stroke-width="0.9" /><line x1="654.50" y1="261.00" x2="654.50" y2="406.35" stroke="#9a9a9a" stroke-width="0.9" /><line x1="677.60" y1="261.00" x2="677.60" y2="406.35" stroke="#9a9a9a" stroke-width="0.9" /><line x1="701.40" y1="261.00" x2="701.40" y2="406.35" stroke="#9a9a9a" stroke-width="0.9" /><line x1="742.40" y1="261.00" x2="742.40" y2="406.35" stroke="#9a9a9a" stroke-width="0.9" /><line x1="765.00" y1="261.00" x2="765.00" y2="406.35" stroke="#9a9a9a" stroke-width="0.9" /><text x="655.5" y="267.575" font-size="6.3" fill="#333">CH<tspan font-size="6" letter-spacing="-0.4">番号</tspan></text><text x="678.6" y="267.575" font-size="6.3" fill="#333">CH<tspan font-size="6" letter-spacing="-0.4">名称</tspan></text><text x="721.9" y="267.575" text-anchor="middle" font-size="6.3" fill="#333"><tspan font-size="5" letter-spacing="0">メインカーソル値</tspan></text><text x="743.4" y="267.575" font-size="6.3" fill="#333">CH<tspan font-size="6" letter-spacing="-0.4">単位</tspan></text><text x="655.5" y="276.125" font-size="6" fill="#2a80d0">A1</text><text x="678.6" y="276.125" font-size="6" fill="#2a80d0">AMA_X</text><text x="743.4" y="276.125" font-size="6" fill="#2a80d0">m/s2</text><text x="655.5" y="284.675" font-size="6" fill="#eaa020">A2</text><text x="678.6" y="284.675" font-size="6" fill="#eaa020">AMA_Y</text><text x="743.4" y="284.675" font-size="6" fill="#eaa020">m/s2</text><text x="655.5" y="293.22499999999997" font-size="6" fill="#20a880">A3</text><text x="678.6" y="293.22499999999997" font-size="6" fill="#20a880">AMA_Z</text><text x="743.4" y="293.22499999999997" font-size="6" fill="#20a880">m/s2</text><text x="649.6" y="463.9" font-size="6.3" font-weight="bold" letter-spacing="0.25" fill="#2ee82e">Cursor&#160; Main</text><text x="742" y="463.9" font-size="6.3" font-weight="bold" fill="#2ee82e">s</text><line x1="648.60" y1="466.00" x2="745.00" y2="466.00" stroke="#c8c8c8" stroke-width="0.8" /><line x1="648.60" y1="470.30" x2="765.50" y2="470.30" stroke="#9a9a9a" stroke-width="0.9" /><line x1="648.60" y1="478.84" x2="765.50" y2="478.84" stroke="#9a9a9a" stroke-width="0.9" /><line x1="648.60" y1="487.38" x2="765.50" y2="487.38" stroke="#9a9a9a" stroke-width="0.9" /><line x1="648.60" y1="495.92" x2="765.50" y2="495.92" stroke="#9a9a9a" stroke-width="0.9" /><line x1="648.60" y1="504.46" x2="765.50" y2="504.46" stroke="#9a9a9a" stroke-width="0.9" /><line x1="648.60" y1="513.00" x2="765.50" y2="513.00" stroke="#9a9a9a" stroke-width="0.9" /><line x1="648.60" y1="521.54" x2="765.50" y2="521.54" stroke="#9a9a9a" stroke-width="0.9" /><line x1="648.60" y1="530.08" x2="765.50" y2="530.08" stroke="#9a9a9a" stroke-width="0.9" /><line x1="648.60" y1="538.62" x2="765.50" y2="538.62" stroke="#9a9a9a" stroke-width="0.9" /><line x1="648.60" y1="547.16" x2="765.50" y2="547.16" stroke="#9a9a9a" stroke-width="0.9" /><line x1="648.60" y1="555.70" x2="765.50" y2="555.70" stroke="#9a9a9a" stroke-width="0.9" /><line x1="648.60" y1="564.24" x2="765.50" y2="564.24" stroke="#9a9a9a" stroke-width="0.9" /><line x1="648.60" y1="572.78" x2="765.50" y2="572.78" stroke="#9a9a9a" stroke-width="0.9" /><line x1="648.60" y1="581.32" x2="765.50" y2="581.32" stroke="#9a9a9a" stroke-width="0.9" /><line x1="648.60" y1="589.86" x2="765.50" y2="589.86" stroke="#9a9a9a" stroke-width="0.9" /><line x1="648.60" y1="598.40" x2="765.50" y2="598.40" stroke="#9a9a9a" stroke-width="0.9" /><line x1="648.60" y1="606.94" x2="765.50" y2="606.94" stroke="#9a9a9a" stroke-width="0.9" /><line x1="648.60" y1="615.48" x2="765.50" y2="615.48" stroke="#9a9a9a" stroke-width="0.9" /><line x1="648.60" y1="470.30" x2="648.60" y2="615.48" stroke="#9a9a9a" stroke-width="0.9" /><line x1="671.40" y1="470.30" x2="671.40" y2="615.48" stroke="#9a9a9a" stroke-width="0.9" /><line x1="695.20" y1="470.30" x2="695.20" y2="615.48" stroke="#9a9a9a" stroke-width="0.9" /><line x1="742.50" y1="470.30" x2="742.50" y2="615.48" stroke="#9a9a9a" stroke-width="0.9" /><line x1="765.50" y1="470.30" x2="765.50" y2="615.48" stroke="#9a9a9a" stroke-width="0.9" /><text x="649.6" y="476.87" font-size="6.3" fill="#333">CH<tspan font-size="6" letter-spacing="-0.4">番号</tspan></text><text x="672.4" y="476.87" font-size="6.3" fill="#333">CH<tspan font-size="6" letter-spacing="-0.4">名称</tspan></text><text x="718.85" y="476.87" text-anchor="middle" font-size="6.3" fill="#333"><tspan font-size="5" letter-spacing="0">メインカーソル値</tspan></text><text x="743.5" y="476.87" font-size="6.3" fill="#333">CH<tspan font-size="6" letter-spacing="-0.4">単位</tspan></text><text x="649.6" y="485.41" font-size="6" fill="#2a80d0">A5</text><text x="672.4" y="485.41" font-size="6" fill="#2a80d0">GSAT_X</text><text x="743.5" y="485.41" font-size="6" fill="#2a80d0">deg/s</text><text x="649.6" y="493.95" font-size="6" fill="#eaa020">A6</text><text x="672.4" y="493.95" font-size="6" fill="#eaa020">GSAT_Y</text><text x="743.5" y="493.95" font-size="6" fill="#eaa020">deg/s</text><text x="649.6" y="502.49" font-size="6" fill="#20a880">A7</text><text x="672.4" y="502.49" font-size="6" fill="#20a880">GSAT_Z</text><text x="743.5" y="502.49" font-size="6" fill="#20a880">deg/s</text><defs><clipPath id="mclip"><rect x="766" y="239" width="267.8" height="140"/></clipPath></defs><text x="769.0" y="255.20000000000002" font-size="10.3" fill="#222">A4</text><text x="831.1" y="278.0" text-anchor="end" font-size="10.3" fill="#222">0.4950</text><text x="836.1" y="278.0" font-style="italic" font-size="10.3" fill="#222">μ&#160;&#160;ε</text><text x="903.1" y="255.20000000000002" font-size="10.3" fill="#222">A7</text><text x="970.0" y="255.20000000000002" font-size="10.3" fill="#222" clip-path="url(#mclip)">GSAT_Z</text><text x="965.2" y="278.0" text-anchor="end" font-size="10.3" fill="#222">0.0494</text><text x="970.2" y="278.0" font-size="10.3" fill="#222">deg/s</text><text x="769.0" y="301.40000000000003" font-size="10.3" fill="#222">A5</text><text x="835.9" y="301.40000000000003" font-size="10.3" fill="#222" clip-path="url(#mclip)">GSAT_X</text><text x="831.1" y="324.20000000000005" text-anchor="end" font-size="10.3" fill="#222">−0.0988</text><text x="836.1" y="324.20000000000005" font-size="10.3" fill="#222">deg/s</text><text x="903.1" y="301.40000000000003" font-size="10.3" fill="#222">A8</text><text x="965.2" y="324.20000000000005" text-anchor="end" font-size="10.3" fill="#222">−0.0627</text><text x="970.2" y="324.20000000000005" font-style="italic" font-size="10.3" fill="#222">μ&#160;&#160;ε</text><text x="769.0" y="347.2" font-size="10.3" fill="#222">A6</text><text x="835.9" y="347.2" font-size="10.3" fill="#222" clip-path="url(#mclip)">GSAT_Y</text><text x="831.1" y="370.0" text-anchor="end" font-size="10.3" fill="#222">−0.1384</text><text x="836.1" y="370.0" font-size="10.3" fill="#222">deg/s</text><text x="903.1" y="347.2" font-size="10.3" fill="#222">S0−14</text><text x="970.0" y="347.2" font-size="10.3" fill="#222" clip-path="url(#mclip)">S1_PID_0D_Ve</text><text x="965.2" y="370.0" text-anchor="end" font-size="10.3" fill="#222">0.0000</text><text x="970.2" y="370.0" font-size="10.3" fill="#222">km/h</text><defs><linearGradient id="sky" x1="0" y1="0" x2="1" y2="1"><stop offset="0" stop-color="#98d0f4"/><stop offset="0.45" stop-color="#36a4ea"/><stop offset="1" stop-color="#1096e0"/></linearGradient><linearGradient id="skyv" x1="0" y1="0" x2="0" y2="1"><stop offset="0" stop-color="#2a92e4" stop-opacity="0"/><stop offset="0.7" stop-color="#6ab8ee" stop-opacity="0.55"/><stop offset="1" stop-color="#a8d4f4" stop-opacity="0.9"/></linearGradient><linearGradient id="road" x1="0" y1="0" x2="0" y2="1"><stop offset="0" stop-color="#d2d4d8"/><stop offset="1" stop-color="#bcc0c4"/></linearGradient><radialGradient id="sun" cx="0.3" cy="0.1" r="0.5"><stop offset="0" stop-color="#ffffff" stop-opacity="0.35"/><stop offset="1" stop-color="#ffffff" stop-opacity="0"/></radialGradient><clipPath id="pc"><rect x="777.2" y="379" width="246.5" height="138.39999999999998"/></clipPath><clipPath id="mc"><rect x="766" y="239" width="268.3" height="140"/></clipPath></defs><g clip-path="url(#pc)"><rect x="777.2" y="379" width="246.5" height="138.39999999999998" fill="url(#sky)"/><rect x="777.2" y="424" width="246.5" height="55" fill="url(#skyv)"/><rect x="777.2" y="379" width="246.5" height="70" fill="url(#sun)"/><ellipse cx="870" cy="394" rx="3.5" ry="4.2" fill="#e8f4fc" opacity="0.75"/><path d="M834 456 Q850 452 858 456 Q868 452 885 458 Q895 462 914 468.8 Q920 470 926 472 L934 475 L934 478 L812 478 Z" fill="#3a8634"/><circle cx="824" cy="437" r="8" fill="#3f8a36"/><circle cx="819" cy="445" r="7" fill="#3a8232"/><circle cx="831" cy="447" r="7" fill="#3a8634"/><rect x="814" y="446" width="22" height="32" fill="#3a8634"/><circle cx="845" cy="454" r="5" fill="#3f8a36"/><circle cx="866" cy="454" r="5" fill="#3a8232"/><circle cx="886.3" cy="474.4" r="2.6" fill="#2f7a2c"/><circle cx="923.3" cy="475.8" r="2.9" fill="#4c9c3e"/><circle cx="817.4" cy="462.3" r="2.9" fill="#3f8c36"/><circle cx="889.3" cy="475.5" r="1.4" fill="#60aa48"/><circle cx="868.4" cy="467.0" r="2.2" fill="#2f7a2c"/><circle cx="880.6" cy="467.8" r="1.6" fill="#4c9c3e"/><circle cx="846.4" cy="475.1" r="2.6" fill="#3f8c36"/><circle cx="832.5" cy="471.2" r="1.4" fill="#60aa48"/><circle cx="885.6" cy="470.2" r="1.2" fill="#2f7a2c"/><circle cx="915.1" cy="475.0" r="1.6" fill="#4c9c3e"/><circle cx="928.0" cy="475.9" r="1.7" fill="#3f8c36"/><circle cx="925.5" cy="475.6" r="2.4" fill="#60aa48"/><circle cx="837.8" cy="475.2" r="2.4" fill="#2f7a2c"/><circle cx="926.1" cy="475.9" r="1.7" fill="#4c9c3e"/><circle cx="855.9" cy="465.5" r="1.5" fill="#3f8c36"/><circle cx="821.6" cy="450.1" r="2.3" fill="#60aa48"/><circle cx="814.4" cy="470.8" r="1.8" fill="#2f7a2c"/><circle cx="850.0" cy="473.9" r="2.1" fill="#4c9c3e"/><circle cx="850.6" cy="469.9" r="2.5" fill="#3f8c36"/><circle cx="820.6" cy="475.1" r="1.2" fill="#60aa48"/><circle cx="901.0" cy="475.6" r="1.2" fill="#2f7a2c"/><circle cx="905.4" cy="474.7" r="2.2" fill="#4c9c3e"/><circle cx="815.1" cy="458.6" r="1.5" fill="#3f8c36"/><circle cx="924.8" cy="475.3" r="2.6" fill="#60aa48"/><circle cx="921.8" cy="475.9" r="1.8" fill="#2f7a2c"/><circle cx="855.2" cy="470.1" r="2.6" fill="#4c9c3e"/><circle cx="826.5" cy="466.4" r="2.6" fill="#3f8c36"/><circle cx="913.7" cy="474.8" r="2.9" fill="#60aa48"/><circle cx="824.6" cy="449.9" r="2.3" fill="#2f7a2c"/><circle cx="920.5" cy="475.3" r="2.9" fill="#4c9c3e"/><circle cx="877.2" cy="469.5" r="1.8" fill="#3f8c36"/><circle cx="834.6" cy="459.0" r="1.5" fill="#60aa48"/><circle cx="893.9" cy="476.0" r="1.5" fill="#2f7a2c"/><circle cx="819.6" cy="475.6" r="2.2" fill="#4c9c3e"/><circle cx="861.1" cy="466.2" r="2.3" fill="#3f8c36"/><circle cx="909.9" cy="475.2" r="2.0" fill="#60aa48"/><circle cx="820.5" cy="473.1" r="1.3" fill="#2f7a2c"/><circle cx="871.3" cy="474.2" r="1.4" fill="#4c9c3e"/><circle cx="898.9" cy="475.8" r="2.3" fill="#3f8c36"/><circle cx="905.4" cy="474.2" r="2.0" fill="#60aa48"/><circle cx="831.3" cy="471.9" r="1.7" fill="#2f7a2c"/><circle cx="866.6" cy="476.0" r="2.7" fill="#4c9c3e"/><circle cx="927.2" cy="475.5" r="2.1" fill="#3f8c36"/><circle cx="898.6" cy="474.4" r="1.7" fill="#60aa48"/><circle cx="860.8" cy="465.1" r="1.9" fill="#2f7a2c"/><circle cx="928.7" cy="476.0" r="2.3" fill="#4c9c3e"/><circle cx="871.9" cy="468.7" r="1.4" fill="#3f8c36"/><circle cx="845.6" cy="473.7" r="2.8" fill="#60aa48"/><circle cx="855.9" cy="473.3" r="2.6" fill="#2f7a2c"/><circle cx="894.6" cy="474.7" r="2.6" fill="#4c9c3e"/><circle cx="856.2" cy="472.3" r="1.7" fill="#3f8c36"/><circle cx="870.3" cy="473.4" r="2.4" fill="#60aa48"/><circle cx="848.1" cy="475.4" r="2.4" fill="#2f7a2c"/><circle cx="881.4" cy="468.1" r="2.2" fill="#4c9c3e"/><circle cx="843.1" cy="472.6" r="2.0" fill="#3f8c36"/><circle cx="908.7" cy="475.4" r="2.6" fill="#60aa48"/><circle cx="854.4" cy="471.6" r="2.5" fill="#2f7a2c"/><circle cx="910.1" cy="475.0" r="2.7" fill="#4c9c3e"/><circle cx="914.9" cy="475.6" r="3.0" fill="#3f8c36"/><circle cx="925.0" cy="475.6" r="2.2" fill="#60aa48"/><circle cx="833.3" cy="472.5" r="2.9" fill="#2f7a2c"/><circle cx="869.4" cy="472.4" r="2.5" fill="#4c9c3e"/><circle cx="898.7" cy="473.5" r="2.6" fill="#3f8c36"/><circle cx="881.4" cy="473.3" r="2.0" fill="#60aa48"/><circle cx="886.4" cy="474.6" r="2.3" fill="#2f7a2c"/><circle cx="897.6" cy="472.8" r="1.5" fill="#4c9c3e"/><circle cx="865.2" cy="471.6" r="1.6" fill="#3f8c36"/><circle cx="893.6" cy="474.4" r="1.3" fill="#60aa48"/><circle cx="868.7" cy="466.8" r="1.3" fill="#2f7a2c"/><circle cx="829.5" cy="454.4" r="1.5" fill="#4c9c3e"/><circle cx="836.4" cy="461.6" r="2.0" fill="#3f8c36"/><circle cx="858.1" cy="471.0" r="2.3" fill="#60aa48"/><circle cx="841.6" cy="475.0" r="1.2" fill="#2f7a2c"/><circle cx="861.0" cy="466.8" r="1.9" fill="#4c9c3e"/><circle cx="827.3" cy="469.8" r="1.9" fill="#3f8c36"/><circle cx="818.2" cy="465.1" r="1.4" fill="#60aa48"/><circle cx="877.2" cy="469.8" r="2.2" fill="#2f7a2c"/><circle cx="925.2" cy="475.8" r="2.0" fill="#4c9c3e"/><circle cx="908.3" cy="475.4" r="1.9" fill="#3f8c36"/><circle cx="830.5" cy="464.3" r="2.2" fill="#60aa48"/><circle cx="925.0" cy="476.0" r="2.3" fill="#2f7a2c"/><circle cx="854.7" cy="474.7" r="1.2" fill="#4c9c3e"/><circle cx="826.5" cy="459.5" r="2.3" fill="#3f8c36"/><circle cx="830.3" cy="465.1" r="2.8" fill="#60aa48"/><circle cx="857.6" cy="468.8" r="1.6" fill="#2f7a2c"/><circle cx="847.8" cy="475.7" r="1.9" fill="#4c9c3e"/><circle cx="925.5" cy="475.9" r="2.3" fill="#3f8c36"/><circle cx="844.1" cy="475.8" r="2.1" fill="#60aa48"/><circle cx="862.2" cy="467.3" r="3.0" fill="#2f7a2c"/><circle cx="871.0" cy="468.0" r="2.1" fill="#4c9c3e"/><circle cx="828.1" cy="462.8" r="2.0" fill="#3f8c36"/><circle cx="848.0" cy="473.6" r="2.7" fill="#60aa48"/><circle cx="815.5" cy="466.8" r="1.7" fill="#2f7a2c"/><circle cx="922.5" cy="475.8" r="1.6" fill="#4c9c3e"/><circle cx="845.1" cy="467.0" r="3.0" fill="#3f8c36"/><circle cx="848.0" cy="471.6" r="2.1" fill="#60aa48"/><circle cx="888.8" cy="473.8" r="2.5" fill="#2f7a2c"/><circle cx="827.7" cy="467.4" r="1.7" fill="#4c9c3e"/><circle cx="875.9" cy="469.5" r="1.7" fill="#3f8c36"/><circle cx="875.5" cy="470.6" r="1.8" fill="#60aa48"/><circle cx="900.4" cy="474.9" r="1.3" fill="#2f7a2c"/><circle cx="843.3" cy="470.3" r="2.8" fill="#4c9c3e"/><circle cx="917.0" cy="475.5" r="1.2" fill="#3f8c36"/><circle cx="904.3" cy="474.8" r="2.2" fill="#60aa48"/><circle cx="896.1" cy="474.7" r="2.1" fill="#2f7a2c"/><circle cx="919.8" cy="475.4" r="1.9" fill="#4c9c3e"/><circle cx="912.8" cy="474.9" r="1.7" fill="#3f8c36"/><circle cx="910.3" cy="474.6" r="2.7" fill="#60aa48"/><circle cx="894.6" cy="473.7" r="1.7" fill="#2f7a2c"/><circle cx="904.6" cy="475.8" r="1.5" fill="#4c9c3e"/><circle cx="869.5" cy="470.7" r="2.1" fill="#3f8c36"/><circle cx="852.4" cy="465.8" r="2.3" fill="#60aa48"/><circle cx="908.2" cy="474.4" r="1.6" fill="#2f7a2c"/><circle cx="909.1" cy="475.7" r="2.4" fill="#4c9c3e"/><circle cx="817.0" cy="469.3" r="3.0" fill="#3f8c36"/><circle cx="929.8" cy="475.7" r="1.3" fill="#60aa48"/><circle cx="911.7" cy="474.9" r="2.4" fill="#2f7a2c"/><circle cx="924.5" cy="475.7" r="1.4" fill="#4c9c3e"/><circle cx="847.9" cy="475.1" r="1.5" fill="#3f8c36"/><circle cx="884.8" cy="472.0" r="1.5" fill="#60aa48"/><path d="M935 477 L936.5 466 L946 450 L957.8 435 Q962 431 966 432.5 Q973 431 980 434.5 Q987 429 994.4 430 Q998 426 1001.5 426.5 Q1007 423 1013.4 424 Q1019 420 1024 420.5 L1024 477 Z" fill="#2c6a28"/><circle cx="1005.4" cy="466.1" r="2.7" fill="#285f24"/><circle cx="957.5" cy="434.3" r="3.2" fill="#3a8232"/><circle cx="976.3" cy="465.1" r="2.4" fill="#2f7028"/><circle cx="1003.3" cy="439.1" r="3.5" fill="#44903a"/><circle cx="999.7" cy="446.8" r="2.8" fill="#1f5020"/><circle cx="995.4" cy="437.9" r="2.9" fill="#2c6a28"/><circle cx="1006.5" cy="438.2" r="3.5" fill="#3a8030"/><circle cx="995.7" cy="467.8" r="2.3" fill="#285f24"/><circle cx="942.4" cy="471.1" r="3.5" fill="#3a8232"/><circle cx="974.1" cy="437.2" r="2.0" fill="#2f7028"/><circle cx="991.1" cy="443.5" r="3.9" fill="#44903a"/><circle cx="987.0" cy="440.6" r="3.1" fill="#1f5020"/><circle cx="966.4" cy="472.1" r="3.8" fill="#2c6a28"/><circle cx="980.3" cy="460.5" r="3.2" fill="#3a8030"/><circle cx="1006.5" cy="473.8" r="1.6" fill="#285f24"/><circle cx="966.5" cy="457.9" r="2.3" fill="#3a8232"/><circle cx="987.0" cy="435.8" r="3.7" fill="#2f7028"/><circle cx="981.3" cy="438.7" r="3.2" fill="#44903a"/><circle cx="962.1" cy="441.2" r="2.7" fill="#1f5020"/><circle cx="946.4" cy="454.1" r="3.7" fill="#2c6a28"/><circle cx="996.8" cy="428.9" r="3.4" fill="#3a8030"/><circle cx="935.5" cy="471.3" r="3.8" fill="#285f24"/><circle cx="989.8" cy="444.5" r="2.4" fill="#3a8232"/><circle cx="969.0" cy="437.8" r="4.0" fill="#2f7028"/><circle cx="938.8" cy="467.2" r="3.4" fill="#44903a"/><circle cx="969.8" cy="474.2" r="2.1" fill="#1f5020"/><circle cx="1022.1" cy="469.1" r="3.2" fill="#2c6a28"/><circle cx="1014.1" cy="446.4" r="3.6" fill="#3a8030"/><circle cx="1005.6" cy="450.9" r="2.7" fill="#285f24"/><circle cx="997.5" cy="447.2" r="1.7" fill="#3a8232"/><circle cx="1001.2" cy="439.1" r="2.7" fill="#2f7028"/><circle cx="1004.6" cy="433.9" r="1.6" fill="#44903a"/><circle cx="945.1" cy="464.9" r="2.4" fill="#1f5020"/><circle cx="957.1" cy="452.9" r="3.8" fill="#2c6a28"/><circle cx="956.9" cy="451.4" r="3.7" fill="#3a8030"/><circle cx="989.1" cy="443.0" r="2.7" fill="#285f24"/><circle cx="977.1" cy="439.7" r="2.4" fill="#3a8232"/><circle cx="961.5" cy="466.8" r="2.3" fill="#2f7028"/><circle cx="993.3" cy="473.7" r="3.8" fill="#44903a"/><circle cx="967.8" cy="458.0" r="2.3" fill="#1f5020"/><circle cx="969.8" cy="453.3" r="3.5" fill="#2c6a28"/><circle cx="1018.3" cy="437.3" r="1.5" fill="#3a8030"/><circle cx="974.4" cy="435.7" r="1.6" fill="#285f24"/><circle cx="1003.6" cy="431.1" r="3.3" fill="#3a8232"/><circle cx="966.6" cy="472.4" r="3.6" fill="#2f7028"/><circle cx="939.6" cy="463.0" r="3.9" fill="#44903a"/><circle cx="989.2" cy="449.7" r="3.5" fill="#1f5020"/><circle cx="1007.2" cy="449.5" r="2.7" fill="#2c6a28"/><circle cx="943.0" cy="461.7" r="1.9" fill="#3a8030"/><circle cx="990.3" cy="457.6" r="1.9" fill="#285f24"/><circle cx="990.5" cy="435.1" r="1.8" fill="#3a8232"/><circle cx="992.1" cy="451.0" r="3.7" fill="#2f7028"/><circle cx="990.6" cy="461.8" r="1.8" fill="#44903a"/><circle cx="1008.9" cy="428.7" r="3.0" fill="#1f5020"/><circle cx="1016.0" cy="470.2" r="3.7" fill="#2c6a28"/><circle cx="974.7" cy="462.3" r="3.5" fill="#3a8030"/><circle cx="946.3" cy="473.5" r="3.8" fill="#285f24"/><circle cx="973.7" cy="465.7" r="2.6" fill="#3a8232"/><circle cx="958.9" cy="463.2" r="1.7" fill="#2f7028"/><circle cx="1006.0" cy="473.9" r="2.2" fill="#44903a"/><circle cx="1018.6" cy="426.2" r="3.6" fill="#1f5020"/><circle cx="959.2" cy="473.6" r="2.6" fill="#2c6a28"/><circle cx="1017.0" cy="424.0" r="1.7" fill="#3a8030"/><circle cx="1007.5" cy="456.8" r="2.8" fill="#285f24"/><circle cx="936.9" cy="466.6" r="2.4" fill="#3a8232"/><circle cx="938.7" cy="474.9" r="3.4" fill="#2f7028"/><circle cx="1019.5" cy="459.0" r="2.4" fill="#44903a"/><circle cx="941.0" cy="470.4" r="1.8" fill="#1f5020"/><circle cx="983.2" cy="452.6" r="2.7" fill="#2c6a28"/><circle cx="940.8" cy="459.4" r="2.8" fill="#3a8030"/><circle cx="936.7" cy="470.3" r="1.9" fill="#285f24"/><circle cx="959.4" cy="440.0" r="2.9" fill="#3a8232"/><circle cx="968.9" cy="441.9" r="2.1" fill="#2f7028"/><circle cx="984.8" cy="471.2" r="2.5" fill="#44903a"/><circle cx="948.7" cy="454.9" r="2.1" fill="#1f5020"/><circle cx="985.5" cy="465.9" r="2.9" fill="#2c6a28"/><circle cx="950.9" cy="453.2" r="2.5" fill="#3a8030"/><circle cx="973.7" cy="449.8" r="4.0" fill="#285f24"/><circle cx="983.6" cy="460.8" r="3.3" fill="#3a8232"/><circle cx="992.1" cy="466.3" r="2.4" fill="#2f7028"/><circle cx="994.0" cy="473.8" r="1.9" fill="#44903a"/><circle cx="990.3" cy="447.8" r="1.7" fill="#1f5020"/><circle cx="937.6" cy="472.3" r="1.8" fill="#2c6a28"/><circle cx="998.0" cy="432.5" r="2.4" fill="#3a8030"/><circle cx="936.9" cy="470.4" r="3.5" fill="#285f24"/><circle cx="954.3" cy="459.1" r="3.8" fill="#3a8232"/><circle cx="960.4" cy="453.0" r="3.3" fill="#2f7028"/><circle cx="1011.8" cy="432.5" r="3.2" fill="#44903a"/><circle cx="944.8" cy="453.7" r="4.0" fill="#1f5020"/><circle cx="938.5" cy="474.0" r="3.4" fill="#2c6a28"/><circle cx="994.8" cy="462.6" r="3.1" fill="#3a8030"/><circle cx="959.8" cy="452.0" r="2.0" fill="#285f24"/><circle cx="1011.3" cy="463.7" r="3.5" fill="#3a8232"/><circle cx="953.3" cy="460.6" r="2.1" fill="#2f7028"/><circle cx="1005.1" cy="462.3" r="4.0" fill="#44903a"/><circle cx="997.7" cy="460.1" r="3.4" fill="#1f5020"/><circle cx="942.4" cy="467.0" r="1.6" fill="#2c6a28"/><circle cx="967.0" cy="437.1" r="3.9" fill="#3a8030"/><circle cx="936.5" cy="474.3" r="3.9" fill="#285f24"/><circle cx="973.2" cy="468.0" r="1.6" fill="#3a8232"/><circle cx="946.5" cy="448.7" r="1.7" fill="#2f7028"/><circle cx="934.2" cy="475.4" r="1.7" fill="#44903a"/><circle cx="987.2" cy="443.7" r="1.8" fill="#1f5020"/><circle cx="971.7" cy="440.6" r="3.9" fill="#2c6a28"/><circle cx="968.6" cy="457.7" r="2.9" fill="#3a8030"/><circle cx="990.4" cy="452.0" r="2.2" fill="#285f24"/><circle cx="946.3" cy="472.1" r="2.0" fill="#3a8232"/><circle cx="974.4" cy="467.0" r="2.9" fill="#2f7028"/><circle cx="1019.3" cy="464.8" r="2.8" fill="#44903a"/><circle cx="944.8" cy="465.2" r="2.7" fill="#1f5020"/><circle cx="1011.6" cy="451.0" r="3.2" fill="#2c6a28"/><circle cx="1007.0" cy="448.4" r="3.6" fill="#3a8030"/><circle cx="1014.9" cy="431.0" r="3.8" fill="#285f24"/><circle cx="1012.3" cy="467.6" r="2.3" fill="#3a8232"/><circle cx="956.7" cy="440.5" r="2.4" fill="#2f7028"/><circle cx="1011.0" cy="442.5" r="1.5" fill="#44903a"/><circle cx="961.4" cy="436.6" r="3.1" fill="#1f5020"/><circle cx="1003.1" cy="471.4" r="1.7" fill="#2c6a28"/><circle cx="968.2" cy="437.7" r="3.8" fill="#3a8030"/><circle cx="1009.3" cy="450.7" r="3.9" fill="#285f24"/><circle cx="980.8" cy="465.8" r="2.7" fill="#3a8232"/><circle cx="966.8" cy="474.8" r="3.6" fill="#2f7028"/><circle cx="987.3" cy="469.3" r="3.1" fill="#44903a"/><circle cx="1005.8" cy="428.4" r="1.8" fill="#1f5020"/><circle cx="943.8" cy="466.2" r="3.3" fill="#2c6a28"/><circle cx="948.0" cy="460.9" r="1.8" fill="#3a8030"/><circle cx="995.9" cy="464.8" r="1.7" fill="#285f24"/><circle cx="1022.2" cy="456.8" r="1.8" fill="#3a8232"/><circle cx="965.6" cy="438.8" r="3.3" fill="#2f7028"/><circle cx="1016.5" cy="431.7" r="2.0" fill="#44903a"/><circle cx="990.6" cy="468.8" r="3.3" fill="#1f5020"/><circle cx="975.2" cy="438.1" r="3.0" fill="#2c6a28"/><circle cx="975.0" cy="466.8" r="2.9" fill="#3a8030"/><circle cx="1000.1" cy="473.6" r="3.1" fill="#285f24"/><circle cx="1016.1" cy="437.0" r="1.5" fill="#3a8232"/><circle cx="1013.4" cy="425.0" r="4.0" fill="#2f7028"/><circle cx="975.0" cy="436.0" r="2.2" fill="#44903a"/><circle cx="998.9" cy="445.6" r="3.1" fill="#1f5020"/><circle cx="943.2" cy="471.5" r="2.4" fill="#2c6a28"/><circle cx="1008.9" cy="431.9" r="3.2" fill="#3a8030"/><circle cx="976.2" cy="450.4" r="1.5" fill="#285f24"/><circle cx="981.9" cy="468.3" r="1.8" fill="#3a8232"/><circle cx="974.1" cy="433.8" r="4.0" fill="#2f7028"/><circle cx="1021.3" cy="457.6" r="2.7" fill="#44903a"/><circle cx="940.3" cy="460.8" r="3.3" fill="#1f5020"/><circle cx="1005.5" cy="474.5" r="3.7" fill="#2c6a28"/><circle cx="973.4" cy="443.9" r="2.9" fill="#3a8030"/><circle cx="965.1" cy="455.5" r="3.7" fill="#285f24"/><circle cx="974.8" cy="474.2" r="3.3" fill="#3a8232"/><circle cx="938.1" cy="471.9" r="3.2" fill="#2f7028"/><circle cx="990.0" cy="431.1" r="3.7" fill="#44903a"/><circle cx="978.6" cy="456.0" r="1.9" fill="#1f5020"/><circle cx="937.2" cy="464.6" r="2.0" fill="#2c6a28"/><circle cx="961.4" cy="439.6" r="1.6" fill="#3a8030"/><circle cx="999.5" cy="460.7" r="3.7" fill="#285f24"/><circle cx="953.6" cy="465.3" r="3.0" fill="#3a8232"/><circle cx="942.1" cy="472.6" r="2.4" fill="#2f7028"/><circle cx="950.6" cy="448.9" r="3.8" fill="#44903a"/><circle cx="953.9" cy="452.8" r="2.9" fill="#1f5020"/><circle cx="966.3" cy="460.2" r="1.7" fill="#2c6a28"/><circle cx="972.7" cy="457.6" r="3.0" fill="#3a8030"/><circle cx="988.8" cy="443.1" r="3.1" fill="#285f24"/><circle cx="1021.5" cy="447.0" r="3.1" fill="#3a8232"/><circle cx="1009.3" cy="437.1" r="2.2" fill="#2f7028"/><circle cx="1021.3" cy="437.2" r="2.6" fill="#44903a"/><circle cx="967.4" cy="474.7" r="2.9" fill="#1f5020"/><circle cx="1014.7" cy="431.5" r="2.2" fill="#2c6a28"/><circle cx="992.5" cy="444.4" r="3.2" fill="#3a8030"/><circle cx="979.7" cy="437.4" r="1.8" fill="#285f24"/><circle cx="973.5" cy="455.5" r="1.9" fill="#3a8232"/><circle cx="957.7" cy="434.3" r="2.2" fill="#2f7028"/><circle cx="961.8" cy="449.3" r="3.0" fill="#44903a"/><circle cx="1010.7" cy="460.6" r="3.4" fill="#1f5020"/><circle cx="959.5" cy="454.2" r="3.3" fill="#2c6a28"/><circle cx="1014.4" cy="435.6" r="1.5" fill="#3a8030"/><circle cx="938.6" cy="468.7" r="3.7" fill="#285f24"/><circle cx="947.8" cy="468.9" r="3.1" fill="#3a8232"/><circle cx="1011.7" cy="469.9" r="1.8" fill="#2f7028"/><circle cx="1005.4" cy="431.9" r="1.8" fill="#44903a"/><circle cx="969.9" cy="453.3" r="1.7" fill="#1f5020"/><circle cx="958.8" cy="441.1" r="1.8" fill="#2c6a28"/><circle cx="942.9" cy="454.9" r="2.0" fill="#3a8030"/><circle cx="963.5" cy="450.4" r="3.2" fill="#285f24"/><circle cx="989.1" cy="452.6" r="2.3" fill="#3a8232"/><circle cx="989.3" cy="439.6" r="1.9" fill="#2f7028"/><circle cx="944.2" cy="467.4" r="1.8" fill="#44903a"/><circle cx="954.1" cy="451.4" r="2.9" fill="#1f5020"/><circle cx="992.3" cy="456.7" r="3.0" fill="#2c6a28"/><circle cx="951.3" cy="472.1" r="3.3" fill="#3a8030"/><circle cx="970.6" cy="449.5" r="2.9" fill="#285f24"/><circle cx="944.8" cy="466.5" r="3.8" fill="#3a8232"/><circle cx="966.8" cy="453.5" r="2.1" fill="#2f7028"/><circle cx="1015.9" cy="442.4" r="2.4" fill="#44903a"/><circle cx="998.1" cy="445.3" r="3.8" fill="#1f5020"/><circle cx="971.0" cy="457.6" r="2.3" fill="#2c6a28"/><circle cx="987.0" cy="452.3" r="1.8" fill="#3a8030"/><circle cx="1014.0" cy="431.6" r="2.9" fill="#285f24"/><circle cx="994.9" cy="450.7" r="2.3" fill="#3a8232"/><circle cx="974.8" cy="475.0" r="1.5" fill="#2f7028"/><circle cx="1013.7" cy="454.7" r="2.7" fill="#44903a"/><circle cx="991.4" cy="459.0" r="3.6" fill="#1f5020"/><circle cx="1021.9" cy="448.7" r="2.4" fill="#2c6a28"/><circle cx="966.6" cy="471.2" r="2.7" fill="#3a8030"/><circle cx="940.4" cy="468.3" r="1.8" fill="#285f24"/><circle cx="965.2" cy="460.0" r="3.0" fill="#3a8232"/><circle cx="982.3" cy="467.9" r="3.0" fill="#2f7028"/><circle cx="1021.3" cy="464.8" r="2.2" fill="#44903a"/><circle cx="1004.3" cy="443.3" r="3.9" fill="#1f5020"/><circle cx="989.7" cy="449.4" r="1.9" fill="#2c6a28"/><circle cx="1010.3" cy="442.1" r="1.5" fill="#3a8030"/><circle cx="1006.3" cy="425.3" r="1.6" fill="#285f24"/><circle cx="936.7" cy="471.5" r="2.9" fill="#3a8232"/><circle cx="977.5" cy="472.3" r="2.7" fill="#2f7028"/><circle cx="952.5" cy="474.9" r="1.8" fill="#44903a"/><circle cx="938.5" cy="465.0" r="3.9" fill="#1f5020"/><circle cx="971.6" cy="447.9" r="2.4" fill="#2c6a28"/><circle cx="967.3" cy="464.5" r="3.1" fill="#3a8030"/><circle cx="959.1" cy="441.6" r="3.5" fill="#285f24"/><circle cx="984.5" cy="454.0" r="2.0" fill="#3a8232"/><circle cx="1021.9" cy="449.4" r="3.8" fill="#2f7028"/><circle cx="994.7" cy="458.5" r="1.6" fill="#44903a"/><circle cx="1016.3" cy="467.4" r="1.7" fill="#1f5020"/><circle cx="941.3" cy="469.2" r="3.2" fill="#2c6a28"/><circle cx="951.4" cy="474.7" r="1.7" fill="#3a8030"/><circle cx="985.2" cy="453.0" r="2.3" fill="#285f24"/><circle cx="994.2" cy="449.6" r="3.4" fill="#3a8232"/><circle cx="1003.4" cy="426.1" r="2.3" fill="#2f7028"/><circle cx="982.8" cy="445.7" r="3.0" fill="#44903a"/><circle cx="936.6" cy="466.4" r="2.8" fill="#1f5020"/><circle cx="953.4" cy="446.9" r="2.5" fill="#2c6a28"/><circle cx="987.5" cy="460.1" r="3.0" fill="#3a8030"/><circle cx="978.8" cy="451.8" r="3.7" fill="#285f24"/><circle cx="1011.7" cy="469.8" r="3.9" fill="#3a8232"/><circle cx="994.5" cy="438.6" r="3.3" fill="#2f7028"/><circle cx="959.5" cy="446.1" r="2.5" fill="#44903a"/><circle cx="936.9" cy="469.3" r="2.0" fill="#1f5020"/><circle cx="955.0" cy="453.7" r="3.4" fill="#2c6a28"/><circle cx="992.7" cy="444.2" r="3.3" fill="#3a8030"/><circle cx="970.6" cy="447.9" r="2.5" fill="#285f24"/><circle cx="959.7" cy="440.0" r="3.9" fill="#3a8232"/><circle cx="987.6" cy="460.1" r="3.0" fill="#2f7028"/><circle cx="979.1" cy="459.9" r="1.5" fill="#44903a"/><circle cx="939.9" cy="467.9" r="2.7" fill="#1f5020"/><circle cx="935.1" cy="472.9" r="2.3" fill="#2c6a28"/><circle cx="1021.1" cy="466.2" r="1.6" fill="#3a8030"/><circle cx="969.0" cy="447.3" r="1.8" fill="#285f24"/><circle cx="960.1" cy="474.6" r="3.8" fill="#3a8232"/><circle cx="958.3" cy="466.0" r="1.8" fill="#2f7028"/><circle cx="990.9" cy="434.5" r="3.1" fill="#44903a"/><circle cx="987.8" cy="474.7" r="2.9" fill="#1f5020"/><circle cx="1016.1" cy="435.3" r="3.1" fill="#2c6a28"/><circle cx="952.8" cy="442.7" r="4.0" fill="#3a8030"/><circle cx="936.4" cy="469.0" r="2.3" fill="#285f24"/><circle cx="952.1" cy="470.1" r="3.4" fill="#3a8232"/><circle cx="968.4" cy="456.4" r="3.6" fill="#2f7028"/><circle cx="939.3" cy="470.1" r="3.6" fill="#44903a"/><circle cx="988.5" cy="454.3" r="2.1" fill="#1f5020"/><circle cx="949.2" cy="450.3" r="2.4" fill="#2c6a28"/><circle cx="959.7" cy="465.9" r="1.9" fill="#3a8030"/><circle cx="945.4" cy="470.0" r="2.6" fill="#285f24"/><circle cx="1011.6" cy="421.1" r="1.4" fill="#3a8030"/><circle cx="1019.3" cy="401.1" r="1.6" fill="#5aa048"/><circle cx="1024.0" cy="404.0" r="2.2" fill="#2a6a26"/><circle cx="1015.3" cy="409.5" r="2.0" fill="#3a8030"/><circle cx="1011.1" cy="418.1" r="1.3" fill="#5aa048"/><circle cx="1011.7" cy="399.7" r="1.6" fill="#2a6a26"/><circle cx="1014.5" cy="419.8" r="1.8" fill="#3a8030"/><circle cx="1009.8" cy="405.1" r="2.8" fill="#5aa048"/><circle cx="1009.0" cy="413.3" r="1.8" fill="#2a6a26"/><circle cx="1018.6" cy="406.9" r="2.3" fill="#3a8030"/><circle cx="1016.0" cy="414.0" r="2.6" fill="#5aa048"/><circle cx="1017.3" cy="402.4" r="1.3" fill="#2a6a26"/><circle cx="1023.1" cy="410.3" r="1.5" fill="#3a8030"/><circle cx="1023.1" cy="412.4" r="2.4" fill="#5aa048"/><circle cx="1022.1" cy="405.7" r="1.8" fill="#2a6a26"/><circle cx="1022.0" cy="402.3" r="2.4" fill="#3a8030"/><circle cx="1009.6" cy="414.9" r="2.3" fill="#5aa048"/><circle cx="1023.2" cy="418.4" r="2.0" fill="#2a6a26"/><circle cx="1011.2" cy="402.6" r="2.0" fill="#3a8030"/><circle cx="1016.2" cy="400.8" r="2.6" fill="#5aa048"/><circle cx="1016.1" cy="415.2" r="1.6" fill="#2a6a26"/><circle cx="1011.9" cy="399.5" r="1.7" fill="#3a8030"/><circle cx="1012.3" cy="408.9" r="1.8" fill="#5aa048"/><circle cx="1021.3" cy="419.5" r="1.5" fill="#2a6a26"/><circle cx="1014.3" cy="403.0" r="2.3" fill="#3a8030"/><circle cx="1023.6" cy="403.8" r="2.4" fill="#5aa048"/><circle cx="1012.8" cy="399.5" r="2.4" fill="#2a6a26"/><circle cx="1013.5" cy="403.1" r="1.9" fill="#3a8030"/><circle cx="1011.7" cy="408.6" r="1.9" fill="#5aa048"/><circle cx="1014.7" cy="412.6" r="1.7" fill="#2a6a26"/><circle cx="1017.6" cy="381.1" r="1.4" fill="#3a8030"/><circle cx="1022.4" cy="378.3" r="1.9" fill="#5aa048"/><circle cx="1022.8" cy="378.8" r="1.9" fill="#3a8030"/><circle cx="1019.4" cy="378.5" r="1.7" fill="#5aa048"/><circle cx="1020.4" cy="381.7" r="2.1" fill="#3a8030"/><circle cx="1013.9" cy="380.1" r="1.3" fill="#5aa048"/><circle cx="1018.1" cy="385.4" r="2.0" fill="#3a8030"/><circle cx="1021.3" cy="381.2" r="2.2" fill="#5aa048"/><circle cx="1013.2" cy="380.5" r="2.1" fill="#3a8030"/><circle cx="1020.7" cy="381.5" r="1.3" fill="#5aa048"/><path d="M964.8 478 Q995 471 1024 464 L1024 480 L964.8 480 Z" fill="#8cc24a"/><path d="M975 476 Q1000 470 1024 466 L1024 470 Q1000 474 975 478z" fill="#a0cc58" opacity="0.7"/><path d="M840 475.5 L934 476 L934 478.5 L840 478.5 Z" fill="#90c458"/><path d="M777.2 478.3 L1023.7 478.3 L1023.7 517.4 L777.2 517.4 Z" fill="url(#road)"/><path d="M893.7 492.7 L906.4 485.9 L908 485.9 L895.5 492.7 Z" fill="#f4f4f4"/><path d="M962.3 484.2 L991 490.1 L993 490.1 L964 484.2 Z" fill="#eeeeee"/><rect x="904.7" y="472.4" width="8" height="5.9" rx="1" fill="#e4e6ea"/><rect x="905.5" y="473" width="6.4" height="2" fill="#8890a0"/><rect x="920.3" y="471.5" width="7.3" height="6.8" rx="1" fill="#506890"/><path d="M777 486 L825 488 L854.4 494.2 Q848 500 834.6 507 L800 511 L777 514 Z" fill="#56606e"/><path d="M777 410.7 Q782 412 786.9 416.7 L816.7 440.5 L820.7 446.5 L834.6 456.4 Q841 459 843.5 462.4 L846.5 470.3 L846.5 476.3 L844.5 480.3 L822.7 483.2 L777 483.2 Z" fill="#eceef0"/><path d="M777 417.7 L814.7 441.5 L817.7 447.5 L777 434.6 Z" fill="#2a323c"/><path d="M777 421 L800 434 L800 438 L777 430z" fill="#3a4652" opacity="0.7"/><path d="M777 455 L845 466 L846.5 470.3 L777 462 Z" fill="#d8dce0" opacity="0.7"/><path d="M786 436 L786 482" stroke="#b8bcc2" stroke-width="0.6"/><path d="M777 476.3 L822.7 478.3 L822.7 486.2 L777 485.2 Z" fill="#3e434a"/><path d="M821 486 Q821 467 835 467 Q848 467 848 482 L846 486 Z" fill="#30343a"/><circle cx="834.6" cy="481.8" r="11.8" fill="#23262b"/><circle cx="834.6" cy="481.8" r="7.8" fill="#d4d8dc"/><path d="M834.6 475 v13.6 M827.8 481.8 h13.6 M829.8 477 l9.6 9.6 M839.4 477 l-9.6 9.6" stroke="#7a8088" stroke-width="1.1"/><circle cx="834.6" cy="481.8" r="2" fill="#e8ecf0"/><path d="M790 430 q4 2 6 5" stroke="#4a88c8" stroke-width="1.2" fill="none"/></g><line x1="766.60" y1="518.00" x2="1034.40" y2="518.00" stroke="#555" stroke-width="1.4" /><line x1="833.50" y1="526.80" x2="833.50" y2="640.30" stroke="#f8dadd" stroke-width="0.8" /><line x1="847.50" y1="526.80" x2="847.50" y2="640.30" stroke="#dedef8" stroke-width="0.8" /><line x1="861.40" y1="526.80" x2="861.40" y2="640.30" stroke="#f8dadd" stroke-width="0.8" /><line x1="875.30" y1="526.80" x2="875.30" y2="640.30" stroke="#dedef8" stroke-width="0.8" /><line x1="889.20" y1="526.80" x2="889.20" y2="640.30" stroke="#f8dadd" stroke-width="0.8" /><line x1="903.10" y1="526.80" x2="903.10" y2="640.30" stroke="#dedef8" stroke-width="0.8" /><line x1="917.00" y1="526.80" x2="917.00" y2="640.30" stroke="#f8dadd" stroke-width="0.8" /><line x1="820.30" y1="540.70" x2="930.30" y2="540.70" stroke="#f8dadd" stroke-width="0.8" /><line x1="820.30" y1="554.60" x2="930.30" y2="554.60" stroke="#dedef8" stroke-width="0.8" /><line x1="820.30" y1="568.50" x2="930.30" y2="568.50" stroke="#f8dadd" stroke-width="0.8" /><line x1="820.30" y1="583.50" x2="930.30" y2="583.50" stroke="#dedef8" stroke-width="0.8" /><line x1="820.30" y1="597.50" x2="930.30" y2="597.50" stroke="#f8dadd" stroke-width="0.8" /><line x1="820.30" y1="611.40" x2="930.30" y2="611.40" stroke="#dedef8" stroke-width="0.8" /><line x1="820.30" y1="626.00" x2="930.30" y2="626.00" stroke="#f8dadd" stroke-width="0.8" /><rect x="820.3" y="526.8" width="110.0" height="113.5" fill="none" stroke="#d0d0d0" stroke-width="1"/><line x1="820.30" y1="526.80" x2="820.30" y2="640.30" stroke="#8a8a8a" stroke-width="1" /><line x1="820.30" y1="640.30" x2="930.30" y2="640.30" stroke="#8a8a8a" stroke-width="1" /><text x="819.5" y="534.1" text-anchor="end" font-size="6.3" fill="#333">N 35.67000</text><text x="819.5" y="557.9" text-anchor="end" font-size="6.3" fill="#333">N 35.66000</text><text x="819.5" y="586.0" text-anchor="end" font-size="6.3" fill="#333">N 35.65000</text><text x="819.5" y="614.1" text-anchor="end" font-size="6.3" fill="#333">N 35.64000</text><text x="819.5" y="638.4" text-anchor="end" font-size="6.3" fill="#333">N 35.63000</text><text x="836" y="647" text-anchor="middle" font-size="6.3" fill="#333">E139.48000</text><text x="876.4" y="647" text-anchor="middle" font-size="6.3" fill="#333">E139.52000</text><text x="915" y="647" text-anchor="middle" font-size="6.3" fill="#333">E139.56000</text><polyline points="912.8,550.3 905.3,545 897.8,548.2 895.6,561 893,562.5 880.7,551.4 868.9,538.1 862.5,566 864.6,568.5 863.1,585.7 860.3,593.8 870,596.8 876.4,607.5 899.9,575.4" fill="none" stroke="#3a80c0" stroke-width="1.1" stroke-linejoin="round"/><circle cx="913.4" cy="561.7" r="2.2" fill="#f01818"/><text x="932" y="534" font-size="6.5" fill="#50e050">Cursor Main</text><text x="1015.6" y="534" text-anchor="end" font-size="6.5" fill="#50e050">0.0 s</text><line x1="931.00" y1="535.50" x2="1016.00" y2="535.50" stroke="#c0c0c0" stroke-width="0.8" /><line x1="931.00" y1="539.60" x2="1032.30" y2="539.60" stroke="#9a9a9a" stroke-width="0.9" /><line x1="931.00" y1="548.80" x2="1032.30" y2="548.80" stroke="#9a9a9a" stroke-width="0.9" /><line x1="931.00" y1="557.30" x2="1032.30" y2="557.30" stroke="#9a9a9a" stroke-width="0.9" /><line x1="931.00" y1="565.80" x2="1032.30" y2="565.80" stroke="#9a9a9a" stroke-width="0.9" /><line x1="931.00" y1="574.30" x2="1032.30" y2="574.30" stroke="#9a9a9a" stroke-width="0.9" /><line x1="931.00" y1="582.80" x2="1032.30" y2="582.80" stroke="#9a9a9a" stroke-width="0.9" /><line x1="931.00" y1="591.30" x2="1032.30" y2="591.30" stroke="#9a9a9a" stroke-width="0.9" /><line x1="931.00" y1="599.80" x2="1032.30" y2="599.80" stroke="#9a9a9a" stroke-width="0.9" /><line x1="931.00" y1="608.30" x2="1032.30" y2="608.30" stroke="#9a9a9a" stroke-width="0.9" /><line x1="931.00" y1="539.60" x2="931.00" y2="608.30" stroke="#9a9a9a" stroke-width="0.9" /><line x1="964.60" y1="539.60" x2="964.60" y2="608.30" stroke="#9a9a9a" stroke-width="0.9" /><line x1="1008.50" y1="539.60" x2="1008.50" y2="608.30" stroke="#9a9a9a" stroke-width="0.9" /><line x1="1032.30" y1="539.60" x2="1032.30" y2="608.30" stroke="#9a9a9a" stroke-width="0.9" /><text x="947.8" y="546.6" text-anchor="middle" font-size="6.3" fill="#333">CH<tspan font-size="6" letter-spacing="-0.3">名称</tspan></text><text x="986.55" y="546.6" text-anchor="middle" font-size="5" fill="#333">メインカーソル値</text><text x="1009.5" y="546.6" font-size="6.3" fill="#333">CH<tspan font-size="6" letter-spacing="-0.3">単位</tspan></text><text x="932" y="555.3499999999999" font-size="6.5" fill="#2a80d0"><tspan font-size="6" letter-spacing="0.1">経度</tspan></text><text x="1008" y="555.3499999999999" text-anchor="end" font-size="6.5" fill="#2a80d0">E139.54771</text><text x="1009.5" y="555.3499999999999" font-size="6.5" fill="#2a80d0">deg</text><text x="932" y="563.8499999999999" font-size="6.5" fill="#2a80d0"><tspan font-size="6" letter-spacing="0.1">緯度</tspan></text><text x="1008" y="563.8499999999999" text-anchor="end" font-size="6.5" fill="#2a80d0">N 35.65765</text><text x="1009.5" y="563.8499999999999" font-size="6.5" fill="#2a80d0">deg</text><text x="932" y="572.3499999999999" font-size="6.5" fill="#f0a020"><tspan font-size="6" letter-spacing="0.1">海抜高度</tspan></text><text x="1008" y="572.3499999999999" text-anchor="end" font-size="6.5" fill="#f0a020">43.90000</text><text x="1009.5" y="572.3499999999999" font-size="6.5" fill="#f0a020">m</text><text x="932" y="580.8499999999999" font-size="6.5" fill="#20a880"><tspan font-size="6" letter-spacing="0.1">進行方向</tspan></text><text x="932" y="589.3499999999999" font-size="6.5" fill="#e070b0"><tspan font-size="6" letter-spacing="0.1">速度</tspan></text><text x="1008" y="589.3499999999999" text-anchor="end" font-size="6.5" fill="#e070b0">0.16000</text><text x="1009.5" y="589.3499999999999" font-size="6.5" fill="#e070b0">knot</text><text x="932" y="597.8499999999999" font-size="6.5" fill="#40a8f0"><tspan font-size="6" letter-spacing="0.1">受信衛星数</tspan></text><text x="1008" y="597.8499999999999" text-anchor="end" font-size="6.5" fill="#40a8f0">6.00000</text><text x="932" y="606.3499999999999" font-size="6.5" fill="#f07020"><tspan font-size="6" letter-spacing="0.1">受信状態</tspan></text><text x="1008" y="606.3499999999999" text-anchor="end" font-size="6.5" fill="#f07020">1.00000</text><line x1="766.50" y1="239.40" x2="1034.30" y2="239.40" stroke="#333" stroke-width="1.4" /><line x1="766.50" y1="285.60" x2="1034.30" y2="285.60" stroke="#555" stroke-width="1" /><line x1="766.50" y1="331.40" x2="1034.30" y2="331.40" stroke="#555" stroke-width="1" /><line x1="766.50" y1="377.80" x2="1034.30" y2="377.80" stroke="#333" stroke-width="1.5" /><line x1="900.60" y1="239.40" x2="900.60" y2="377.80" stroke="#555" stroke-width="1" /><line x1="766.50" y1="239.40" x2="766.50" y2="658.00" stroke="#555" stroke-width="1.3" /><line x1="1034.30" y1="239.40" x2="1034.30" y2="377.80" stroke="#444" stroke-width="1.2" /><line x1="1034.40" y1="518.00" x2="1034.40" y2="657.20" stroke="#8a8a8a" stroke-width="1" /><line x1="766.50" y1="656.80" x2="1034.40" y2="656.80" stroke="#8a8a8a" stroke-width="1" /><text transform="translate(133,703) scale(0.78,1)" font-size="10" fill="#3a3a3a">&#8211;120</text><text transform="translate(173.3,703) scale(0.78,1)" text-anchor="middle" font-size="10" fill="#3a3a3a">0</text><text transform="translate(275.6,703) scale(0.78,1)" text-anchor="middle" font-size="10" fill="#3a3a3a">300</text><text transform="translate(377.9,703) scale(0.78,1)" text-anchor="middle" font-size="10" fill="#3a3a3a">600</text><text transform="translate(480.2,703) scale(0.78,1)" text-anchor="middle" font-size="10" fill="#3a3a3a">900</text><text transform="translate(582.5,703) scale(0.78,1)" text-anchor="middle" font-size="10" fill="#3a3a3a">1200</text><text transform="translate(684.8,703) scale(0.78,1)" text-anchor="middle" font-size="10" fill="#3a3a3a">1500</text><text transform="translate(787.1,703) scale(0.78,1)" text-anchor="middle" font-size="10" fill="#3a3a3a">1800</text><text transform="translate(889.4,703) scale(0.78,1)" text-anchor="middle" font-size="10" fill="#3a3a3a">2100</text><text transform="translate(991.7,703) scale(0.78,1)" text-anchor="middle" font-size="10" fill="#3a3a3a">2400</text><text transform="translate(1033.5,703) scale(0.78,1)" text-anchor="end" font-size="10" fill="#3a3a3a">2520</text></svg></body></html>
